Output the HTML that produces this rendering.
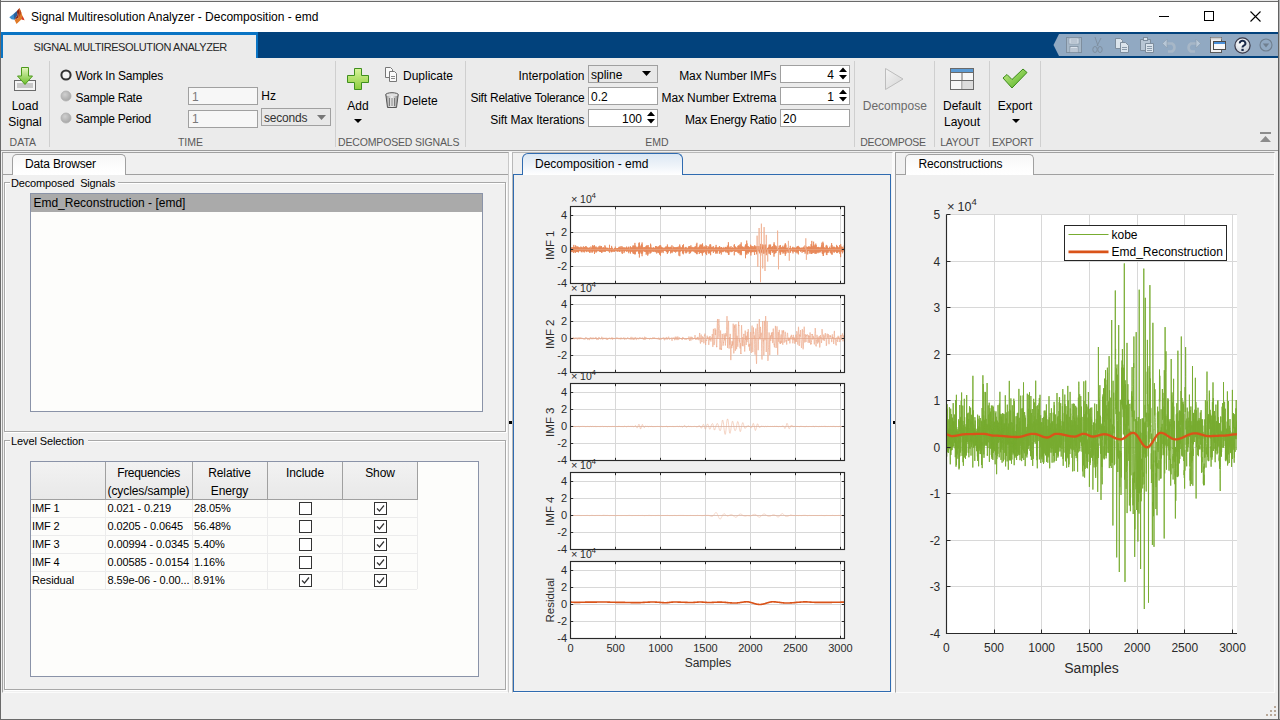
<!DOCTYPE html><html><head><meta charset="utf-8"><style>
html,body{margin:0;padding:0;}
body{width:1280px;height:720px;position:relative;overflow:hidden;background:#f0f0f0;font-family:"Liberation Sans",sans-serif;}
.t{position:absolute;white-space:pre;}
.r{position:absolute;box-sizing:border-box;}
svg.r{overflow:visible;}
</style></head><body>
<div class="r" style="left:0px;top:0px;width:1280px;height:32px;background:#fff;"></div>
<div class="t" style="left:31.00px;top:10.74px;font-size:12px;line-height:12px;color:#000;">Signal Multiresolution Analyzer - Decomposition - emd</div>
<svg class="r" style="left:0px;top:0px;" width="30" height="30" viewBox="0 0 30 30">
<path d="M9.3 17.2 L13.5 14 L16 15.5 L14.5 19.8 L11.5 19.2 Z" fill="#3d8fd0"/>
<path d="M13.5 14 L16.8 11 L17.5 15 L14.5 19.8 Z" fill="#2a5f9a"/>
<path d="M16.8 11 L19.5 8 L18.5 18 L14.5 19.8 L17.5 15 Z" fill="#8a2a1a"/>
<path d="M19.5 8 L22.5 16 L24.5 20.2 L21.5 19.2 L16.5 24 L14.5 19.8 L18.5 18 Z" fill="#e07a28"/>
<path d="M19.5 8 L21.5 13 L18.5 18 Z" fill="#c04a1a"/>
<path d="M22.5 16 L24.5 20.2 L21.5 19.2 Z" fill="#d83a2a"/>
</svg>
<div class="r" style="left:1159px;top:16px;width:10px;height:1px;background:#000;"></div>
<div class="r" style="left:1204px;top:11px;width:10px;height:10px;border:1px solid #000;"></div>
<svg class="r" style="left:1250px;top:11px;" width="11" height="11" viewBox="0 0 11 11"><path d="M0.5 0.5 L10.5 10.5 M10.5 0.5 L0.5 10.5" stroke="#000" stroke-width="1.1"/></svg>
<div class="r" style="left:0px;top:32px;width:1278px;height:26px;background:#02427c;"></div>
<div class="r" style="left:0px;top:32px;width:258px;height:26px;background:#0a74c4;"></div>
<div class="r" style="left:3px;top:35px;width:253px;height:23px;background:#ebebeb;"></div>
<div class="t" style="left:33.50px;top:41.69px;font-size:11px;line-height:11px;color:#262626;letter-spacing:-0.42px;">SIGNAL MULTIRESOLUTION ANALYZER</div>
<svg class="r" style="left:1053px;top:34px;" width="225" height="22" viewBox="0 0 225 22"><path d="M0.5 11 L6 0 L225 0 L225 22 L6 22 Z" fill="#91a9c2"/></svg>
<svg class="r" style="left:1066px;top:37px;opacity:0.95" width="16" height="16" viewBox="0 0 16 16"><rect x="0.5" y="0.5" width="15" height="15" fill="#a9b9c9" stroke="#7d8d9d"/><rect x="3" y="1" width="10" height="6" fill="#dfe7ef" stroke="#8d9dad" stroke-width="0.8"/><path d="M4.5 3 H11.5 M4.5 5 H11.5" stroke="#8a9aaa" stroke-width="0.8"/><rect x="4" y="9.5" width="8" height="6" fill="#dfe7ef" stroke="#7d8d9d" stroke-width="0.8"/><path d="M6 11 V15 M8 11 V15 M10 11 V15" stroke="#8a9aaa" stroke-width="0.8"/></svg>
<svg class="r" style="left:1092px;top:37px;" width="11" height="16" viewBox="0 0 11 16"><path d="M3 0 L6 9 M9 1 L5 9" stroke="#7d8d9d" stroke-width="0.9" fill="none"/><ellipse cx="3" cy="12.5" rx="2.2" ry="3" fill="none" stroke="#7d8d9d"/><ellipse cx="8" cy="12.5" rx="2.2" ry="3" fill="none" stroke="#7d8d9d"/></svg>
<svg class="r" style="left:1115px;top:38px;" width="15" height="15" viewBox="0 0 15 15"><path d="M0.5 0.5 H5.5 L7.5 2.5 V10.5 H0.5 Z" fill="#dbe4ec" stroke="#7d8d9d"/><path d="M5.5 4.5 H10.5 L13.5 7.5 V14.5 H5.5 Z" fill="#dbe4ec" stroke="#7d8d9d"/><path d="M7 9.5 H12 M7 11.5 H12" stroke="#8a9aaa"/></svg>
<svg class="r" style="left:1140px;top:37px;" width="15" height="16" viewBox="0 0 15 16"><path d="M0.5 2.5 H10.5 V13.5 H0.5 Z" fill="#b8c6d4" stroke="#7d8d9d"/><rect x="3.5" y="0.5" width="4" height="3" fill="#dbe4ec" stroke="#7d8d9d"/><path d="M5.5 6.5 H13.5 V15.5 H5.5 Z" fill="#dbe4ec" stroke="#7d8d9d"/><path d="M7 9.5 H12 M7 11.5 H12 M7 13.5 H12" stroke="#8a9aaa"/></svg>
<svg class="r" style="left:1162px;top:38px;" width="16" height="14" viewBox="0 0 16 14"><path d="M3 5.5 H10 A4.5 4.5 0 0 1 10 13.5 H6" fill="none" stroke="#a7b7c7" stroke-width="2.6"/><path d="M0.5 5.5 L5 1 V10 Z" fill="#b7c7d7" stroke="#8d9dad" stroke-width="0.6"/></svg>
<svg class="r" style="left:1185px;top:38px;" width="16" height="14" viewBox="0 0 16 14"><path d="M13 5.5 H6 A4.5 4.5 0 0 0 6 13.5 H10" fill="none" stroke="#a7b7c7" stroke-width="2.6"/><path d="M15.5 5.5 L11 1 V10 Z" fill="#b7c7d7" stroke="#8d9dad" stroke-width="0.6"/></svg>
<svg class="r" style="left:1210px;top:37px;" width="16" height="16" viewBox="0 0 16 16"><rect x="0.5" y="0.5" width="11" height="15" fill="#f2f2f2" stroke="#5a5a5a"/><rect x="0.5" y="0.5" width="11" height="2" fill="#cfcfcf"/><rect x="3.5" y="4.5" width="12" height="8" fill="#f8f8f8" stroke="#4a4a4a"/><rect x="4" y="5" width="11" height="2" fill="#4a90d9"/></svg>
<svg class="r" style="left:1234px;top:37px;" width="17" height="17" viewBox="0 0 17 17"><defs><radialGradient id="hq" cx="0.4" cy="0.35" r="0.7"><stop offset="0" stop-color="#ffffff"/><stop offset="1" stop-color="#c4ccd6"/></radialGradient></defs><circle cx="8.5" cy="8.5" r="7.6" fill="url(#hq)" stroke="#3a3a4a" stroke-width="1.2"/><path d="M5.8 6.4 A2.8 2.6 0 1 1 9.6 8.7 Q8.5 9.3 8.5 10.6" fill="none" stroke="#1a2a4a" stroke-width="2"/><rect x="7.4" y="11.8" width="2.3" height="2.2" fill="#1a2a4a"/></svg>
<svg class="r" style="left:1259px;top:38px;" width="14" height="14" viewBox="0 0 14 14"><circle cx="7" cy="7" r="6" fill="none" stroke="#6f7f8f" stroke-width="1.1"/><path d="M3.8 5.5 H10.2 L7 9.5 Z" fill="#6f7f8f"/></svg>
<div class="r" style="left:0px;top:58px;width:1278px;height:92px;background:#ebebeb;"></div>
<div class="r" style="left:0px;top:150px;width:1278px;height:1px;background:#9c9c9c;"></div>
<div class="r" style="left:49px;top:61px;width:1px;height:86px;background:#cfcfcf;"></div>
<div class="r" style="left:335px;top:61px;width:1px;height:86px;background:#cfcfcf;"></div>
<div class="r" style="left:465px;top:61px;width:1px;height:86px;background:#cfcfcf;"></div>
<div class="r" style="left:854px;top:61px;width:1px;height:86px;background:#cfcfcf;"></div>
<div class="r" style="left:934px;top:61px;width:1px;height:86px;background:#cfcfcf;"></div>
<div class="r" style="left:989px;top:61px;width:1px;height:86px;background:#cfcfcf;"></div>
<div class="r" style="left:1040px;top:61px;width:1px;height:86px;background:#cfcfcf;"></div>
<div class="t" style="left:9.60px;top:136.91px;font-size:10.5px;line-height:10.5px;color:#5a5a5a;">DATA</div>
<div class="t" style="left:190.50px;top:136.91px;font-size:10.5px;line-height:10.5px;color:#5a5a5a;transform:translateX(-50%);">TIME</div>
<div class="t" style="left:398.70px;top:136.91px;font-size:10.5px;line-height:10.5px;color:#5a5a5a;transform:translateX(-50%);letter-spacing:-0.17px;">DECOMPOSED SIGNALS</div>
<div class="t" style="left:657.00px;top:136.91px;font-size:10.5px;line-height:10.5px;color:#5a5a5a;transform:translateX(-50%);">EMD</div>
<div class="t" style="left:893.00px;top:136.91px;font-size:10.5px;line-height:10.5px;color:#5a5a5a;transform:translateX(-50%);letter-spacing:-0.3px;">DECOMPOSE</div>
<div class="t" style="left:960.00px;top:136.91px;font-size:10.5px;line-height:10.5px;color:#5a5a5a;transform:translateX(-50%);letter-spacing:-0.3px;">LAYOUT</div>
<div class="t" style="left:1012.50px;top:136.91px;font-size:10.5px;line-height:10.5px;color:#5a5a5a;transform:translateX(-50%);letter-spacing:-0.3px;">EXPORT</div>
<svg class="r" style="left:13px;top:66px;" width="24" height="26" viewBox="0 0 24 26">
<defs><linearGradient id="ga" x1="0" y1="0" x2="0" y2="1"><stop offset="0" stop-color="#e6f6c0"/><stop offset="1" stop-color="#6cbf2a"/></linearGradient></defs>
<rect x="1.5" y="14.5" width="21" height="10" fill="#f4f4f4" stroke="#6a6a6a"/>
<rect x="4" y="17" width="16" height="5" fill="#c8c8c8"/>
<path d="M8.5 1.5 L15.5 1.5 L15.5 10 L19.5 10 L12 18.5 L4.5 10 L8.5 10 Z" fill="url(#ga)" stroke="#4c9a1a"/>
</svg>
<div class="t" style="left:25.00px;top:100.44px;font-size:12px;line-height:12px;color:#000;transform:translateX(-50%);">Load</div>
<div class="t" style="left:25.00px;top:116.04px;font-size:12px;line-height:12px;color:#000;transform:translateX(-50%);">Signal</div>
<svg class="r" style="left:60px;top:69px;" width="12" height="12" viewBox="0 0 12 12"><circle cx="6" cy="6" r="4.6" fill="#f4f4f4" stroke="#333" stroke-width="2"/></svg>
<div class="t" style="left:75.50px;top:70.04px;font-size:12px;line-height:12px;color:#000;letter-spacing:-0.25px;">Work In Samples</div>
<svg class="r" style="left:60px;top:90px;" width="12" height="12" viewBox="0 0 12 12"><defs><radialGradient id="rg" cx="0.4" cy="0.35" r="0.7"><stop offset="0" stop-color="#d0d0d0"/><stop offset="1" stop-color="#a4a4a4"/></radialGradient></defs><circle cx="6" cy="6" r="5" fill="url(#rg)" stroke="#b0b0b0" stroke-width="0.8"/></svg>
<div class="t" style="left:75.50px;top:91.64px;font-size:12px;line-height:12px;color:#000;letter-spacing:-0.25px;">Sample Rate</div>
<svg class="r" style="left:60px;top:112px;" width="12" height="12" viewBox="0 0 12 12"><defs><radialGradient id="rg" cx="0.4" cy="0.35" r="0.7"><stop offset="0" stop-color="#d0d0d0"/><stop offset="1" stop-color="#a4a4a4"/></radialGradient></defs><circle cx="6" cy="6" r="5" fill="url(#rg)" stroke="#b0b0b0" stroke-width="0.8"/></svg>
<div class="t" style="left:75.50px;top:113.44px;font-size:12px;line-height:12px;color:#000;letter-spacing:-0.25px;">Sample Period</div>
<div class="r" style="left:188px;top:87px;width:70px;height:18px;background:#f7f7f7;border:1px solid #a0a0a0;"></div>
<div class="r" style="left:188px;top:110px;width:70px;height:18px;background:#f7f7f7;border:1px solid #a0a0a0;"></div>
<div class="t" style="left:192.00px;top:90.64px;font-size:12px;line-height:12px;color:#7a7a7a;">1</div>
<div class="t" style="left:192.00px;top:113.44px;font-size:12px;line-height:12px;color:#7a7a7a;">1</div>
<div class="t" style="left:261.30px;top:89.54px;font-size:12px;line-height:12px;color:#000;">Hz</div>
<div class="r" style="left:261px;top:108px;width:70px;height:18px;background:#e8e8e8;border:1px solid #a0a0a0;"></div>
<div class="t" style="left:264.00px;top:112.04px;font-size:12px;line-height:12px;color:#333;letter-spacing:-0.2px;">seconds</div>
<svg class="r" style="left:317px;top:115px;" width="9" height="5" viewBox="0 0 9 5"><path d="M0 0 L9 0 L4.5 5 Z" fill="#777"/></svg>
<svg class="r" style="left:346px;top:67px;" width="24" height="24" viewBox="0 0 24 24">
<defs><linearGradient id="gp" x1="0" y1="0" x2="0" y2="1"><stop offset="0" stop-color="#d8f49a"/><stop offset="1" stop-color="#8ccd3c"/></linearGradient></defs>
<path d="M8.5 1.5 H15.5 V8.5 H22.5 V15.5 H15.5 V22.5 H8.5 V15.5 H1.5 V8.5 H8.5 Z" fill="url(#gp)" stroke="#3f8f1e"/>
</svg>
<div class="t" style="left:358.00px;top:100.14px;font-size:12px;line-height:12px;color:#000;transform:translateX(-50%);">Add</div>
<svg class="r" style="left:354px;top:119px;" width="8" height="4" viewBox="0 0 8 4"><path d="M0 0 L8 0 L4 4 Z" fill="#000"/></svg>
<svg class="r" style="left:384px;top:67px;" width="14" height="16" viewBox="0 0 14 16">
<path d="M1.5 0.5 H6.5 L8.5 2.5 V10.5 H1.5 Z" fill="#fafafa" stroke="#777"/>
<path d="M5.5 4.5 H10.5 L12.5 6.5 V14.5 H5.5 Z" fill="#fafafa" stroke="#777"/>
<path d="M7 9.5 H11 M7 11.5 H11" stroke="#888"/>
</svg>
<div class="t" style="left:403.00px;top:70.04px;font-size:12px;line-height:12px;color:#000;">Duplicate</div>
<svg class="r" style="left:384px;top:92px;" width="16" height="17" viewBox="0 0 16 17">
<defs><linearGradient id="gt" x1="0" y1="0" x2="1" y2="0"><stop offset="0" stop-color="#9a9a9a"/><stop offset="0.5" stop-color="#f2f2f2"/><stop offset="1" stop-color="#8a8a8a"/></linearGradient></defs>
<ellipse cx="8" cy="3" rx="6.5" ry="2.3" fill="#e0e0e0" stroke="#555"/>
<path d="M2 4 L3.5 15.5 H12.5 L14 4" fill="url(#gt)" stroke="#555"/>
<path d="M5.5 6 V14 M8 6 V14 M10.5 6 V14" stroke="#666" stroke-width="0.8"/>
</svg>
<div class="t" style="left:403.00px;top:95.04px;font-size:12px;line-height:12px;color:#000;">Delete</div>
<div class="t" style="left:584.50px;top:70.14px;font-size:12px;line-height:12px;color:#000;transform:translateX(-100%);">Interpolation</div>
<div class="t" style="left:584.50px;top:91.74px;font-size:12px;line-height:12px;color:#000;transform:translateX(-100%);letter-spacing:-0.22px;">Sift Relative Tolerance</div>
<div class="t" style="left:584.50px;top:113.59px;font-size:12px;line-height:12px;color:#000;transform:translateX(-100%);letter-spacing:-0.1px;">Sift Max Iterations</div>
<div class="r" style="left:588px;top:65px;width:70px;height:18px;background:#e8e8e8;border:1px solid #a0a0a0;"></div>
<div class="t" style="left:591.00px;top:69.24px;font-size:12px;line-height:12px;color:#000;">spline</div>
<svg class="r" style="left:642px;top:71px;" width="9" height="5" viewBox="0 0 9 5"><path d="M0 0 L9 0 L4.5 5 Z" fill="#000"/></svg>
<div class="r" style="left:588px;top:87px;width:70px;height:18px;background:#fff;border:1px solid #a0a0a0;"></div>
<div class="t" style="left:591.00px;top:91.24px;font-size:12px;line-height:12px;color:#000;">0.2</div>
<div class="r" style="left:588px;top:109px;width:70px;height:18px;background:#fff;border:1px solid #a0a0a0;"></div>
<div class="t" style="left:642.00px;top:113.04px;font-size:12px;line-height:12px;color:#000;transform:translateX(-100%);">100</div>
<svg class="r" style="left:647px;top:111px;" width="8" height="13" viewBox="0 0 8 13"><path d="M0 5 L4 0.5 L8 5 Z M0 8 L4 12.5 L8 8 Z" fill="#000"/></svg>
<div class="t" style="left:776.40px;top:70.14px;font-size:12px;line-height:12px;color:#000;transform:translateX(-100%);letter-spacing:-0.1px;">Max Number IMFs</div>
<div class="t" style="left:776.40px;top:91.74px;font-size:12px;line-height:12px;color:#000;transform:translateX(-100%);letter-spacing:-0.1px;">Max Number Extrema</div>
<div class="t" style="left:776.40px;top:113.59px;font-size:12px;line-height:12px;color:#000;transform:translateX(-100%);letter-spacing:-0.25px;">Max Energy Ratio</div>
<div class="r" style="left:780px;top:65px;width:70px;height:18px;background:#fff;border:1px solid #a0a0a0;"></div>
<div class="t" style="left:834.00px;top:69.24px;font-size:12px;line-height:12px;color:#000;transform:translateX(-100%);">4</div>
<svg class="r" style="left:839px;top:67px;" width="8" height="13" viewBox="0 0 8 13"><path d="M0 5 L4 0.5 L8 5 Z M0 8 L4 12.5 L8 8 Z" fill="#000"/></svg>
<div class="r" style="left:780px;top:87px;width:70px;height:18px;background:#fff;border:1px solid #a0a0a0;"></div>
<div class="t" style="left:834.00px;top:91.24px;font-size:12px;line-height:12px;color:#000;transform:translateX(-100%);">1</div>
<svg class="r" style="left:839px;top:89px;" width="8" height="13" viewBox="0 0 8 13"><path d="M0 5 L4 0.5 L8 5 Z M0 8 L4 12.5 L8 8 Z" fill="#000"/></svg>
<div class="r" style="left:780px;top:109px;width:70px;height:18px;background:#fff;border:1px solid #a0a0a0;"></div>
<div class="t" style="left:783.00px;top:113.04px;font-size:12px;line-height:12px;color:#000;">20</div>
<svg class="r" style="left:884px;top:67px;" width="21" height="24" viewBox="0 0 21 24">
<defs><linearGradient id="gd" x1="0" y1="0" x2="1" y2="1"><stop offset="0" stop-color="#f4f4f4"/><stop offset="1" stop-color="#d4d4d4"/></linearGradient></defs>
<path d="M1.5 1.5 L19 12 L1.5 22.5 Z" fill="url(#gd)" stroke="#bdbdbd" stroke-linejoin="round"/>
</svg>
<div class="t" style="left:894.80px;top:99.84px;font-size:12px;line-height:12px;color:#6a6a6a;transform:translateX(-50%);">Decompose</div>
<svg class="r" style="left:949px;top:67px;" width="26" height="24" viewBox="0 0 26 24">
<rect x="1.5" y="1.5" width="23" height="21" fill="#f7f7f7" stroke="#6a6a6a"/>
<rect x="2" y="2" width="22" height="3" fill="#5b9bd5"/>
<path d="M2 5.5 H24 M13 5.5 V22 M2 13.5 H24" stroke="#6a6a6a"/>
<rect x="13.5" y="14" width="10.5" height="8" fill="#dcdcdc"/>
</svg>
<div class="t" style="left:962.00px;top:99.84px;font-size:12px;line-height:12px;color:#000;transform:translateX(-50%);">Default</div>
<div class="t" style="left:962.00px;top:116.04px;font-size:12px;line-height:12px;color:#000;transform:translateX(-50%);">Layout</div>
<svg class="r" style="left:1002px;top:68px;" width="26" height="22" viewBox="0 0 26 22">
<defs><linearGradient id="gc" x1="0" y1="0" x2="1" y2="1"><stop offset="0" stop-color="#c8ec8a"/><stop offset="1" stop-color="#4caf1e"/></linearGradient></defs>
<path d="M1 10 L5 6.5 L10 11.5 L21 1 L25 4.5 L10 20 Z" fill="url(#gc)" stroke="#3a8a18" stroke-linejoin="round"/>
</svg>
<div class="t" style="left:1015.00px;top:99.84px;font-size:12px;line-height:12px;color:#000;transform:translateX(-50%);">Export</div>
<svg class="r" style="left:1012px;top:119px;" width="8" height="4" viewBox="0 0 8 4"><path d="M0 0 L8 0 L4 4 Z" fill="#000"/></svg>
<svg class="r" style="left:1260px;top:132px;" width="11" height="11" viewBox="0 0 11 11"><rect x="0" y="0" width="11" height="2" fill="#8c8c8c"/><path d="M0 10 L5.5 4 L11 10 Z" fill="#8c8c8c"/></svg>
<div class="r" style="left:2px;top:152px;width:507px;height:541px;background:#f0f0f0;border:1px solid #a0a0a0;border-right-color:#c8c8c8;border-bottom-color:#fbfbfb;"></div>
<div class="r" style="left:3px;top:174px;width:505px;height:1px;background:#a0a0a0;"></div>
<div class="r" style="left:12px;top:154px;width:114px;height:21px;border:1px solid #a0a0a0;border-bottom:none;border-radius:5px 5px 0 0;background:linear-gradient(#f7f7f7,#fdfdfd 60%,#fff);"></div>
<div class="t" style="left:25.00px;top:158.44px;font-size:12px;line-height:12px;color:#000;letter-spacing:-0.15px;">Data Browser</div>
<div class="r" style="left:4px;top:182px;width:502px;height:250px;border:1px solid #a8a8a8;border-right-color:#a8a8a8;box-shadow:inset 1px 1px 0 #fff, 1px 1px 0 #fff;"></div>
<div class="r" style="left:10px;top:176px;width:108px;height:12px;background:#f0f0f0;"></div>
<div class="t" style="left:11.00px;top:177.89px;font-size:11px;line-height:11px;color:#000;letter-spacing:-0.15px;">Decomposed  Signals</div>
<div class="r" style="left:30px;top:193px;width:453px;height:219px;background:#fdfdfb;border:1px solid #8a93a8;"></div>
<div class="r" style="left:31px;top:194px;width:451px;height:18px;background:#aaaaaa;"></div>
<div class="t" style="left:33.40px;top:197.34px;font-size:12px;line-height:12px;color:#000;">Emd_Reconstruction - [emd]</div>
<div class="r" style="left:4px;top:440px;width:502px;height:250px;border:1px solid #a8a8a8;box-shadow:inset 1px 1px 0 #fff, 1px 1px 0 #fff;"></div>
<div class="r" style="left:10px;top:434px;width:78px;height:12px;background:#f0f0f0;"></div>
<div class="t" style="left:11.00px;top:436.29px;font-size:11px;line-height:11px;color:#000;letter-spacing:-0.1px;">Level Selection</div>
<div class="r" style="left:30px;top:461px;width:449px;height:216px;background:#fdfdfb;border:1px solid #8a93a8;"></div>
<div class="r" style="left:31px;top:462px;width:386px;height:38px;background:linear-gradient(#f2f2f2,#e8e8e8);"></div>
<div class="r" style="left:105px;top:462px;width:1px;height:38px;background:#a0a0a0;"></div>
<div class="r" style="left:192px;top:462px;width:1px;height:38px;background:#a0a0a0;"></div>
<div class="r" style="left:267px;top:462px;width:1px;height:38px;background:#a0a0a0;"></div>
<div class="r" style="left:342px;top:462px;width:1px;height:38px;background:#a0a0a0;"></div>
<div class="r" style="left:417px;top:462px;width:1px;height:38px;background:#a0a0a0;"></div>
<div class="r" style="left:31px;top:499px;width:386px;height:1px;background:#a0a0a0;"></div>
<div class="t" style="left:148.50px;top:466.84px;font-size:12px;line-height:12px;color:#000;transform:translateX(-50%);letter-spacing:-0.3px;">Frequencies</div>
<div class="t" style="left:148.50px;top:484.84px;font-size:12px;line-height:12px;color:#000;transform:translateX(-50%);letter-spacing:-0.1px;">(cycles/sample)</div>
<div class="t" style="left:229.50px;top:466.64px;font-size:12px;line-height:12px;color:#000;transform:translateX(-50%);letter-spacing:-0.1px;">Relative</div>
<div class="t" style="left:229.50px;top:484.74px;font-size:12px;line-height:12px;color:#000;transform:translateX(-50%);letter-spacing:-0.1px;">Energy</div>
<div class="t" style="left:305.00px;top:466.64px;font-size:12px;line-height:12px;color:#000;transform:translateX(-50%);letter-spacing:-0.1px;">Include</div>
<div class="t" style="left:380.00px;top:466.64px;font-size:12px;line-height:12px;color:#000;transform:translateX(-50%);letter-spacing:-0.1px;">Show</div>
<div class="r" style="left:31px;top:517px;width:386px;height:1px;background:#ececec;"></div>
<div class="t" style="left:32.00px;top:502.99px;font-size:11px;line-height:11px;color:#000;letter-spacing:-0.1px;">IMF 1</div>
<div class="t" style="left:107.50px;top:502.99px;font-size:11px;line-height:11px;color:#000;letter-spacing:-0.1px;">0.021 - 0.219</div>
<div class="t" style="left:194.00px;top:502.99px;font-size:11px;line-height:11px;color:#000;letter-spacing:-0.1px;">28.05%</div>
<svg class="r" style="left:299px;top:502px;" width="13" height="13" viewBox="0 0 13 13"><rect x="0.5" y="0.5" width="12" height="12" fill="#fff" stroke="#333"/></svg>
<svg class="r" style="left:374px;top:502px;" width="13" height="13" viewBox="0 0 13 13"><rect x="0.5" y="0.5" width="12" height="12" fill="#fff" stroke="#333"/><path d="M3 6.5 L5.5 9 L10 3.5" fill="none" stroke="#333" stroke-width="1.2"/></svg>
<div class="r" style="left:31px;top:535px;width:386px;height:1px;background:#ececec;"></div>
<div class="t" style="left:32.00px;top:520.99px;font-size:11px;line-height:11px;color:#000;letter-spacing:-0.1px;">IMF 2</div>
<div class="t" style="left:107.50px;top:520.99px;font-size:11px;line-height:11px;color:#000;letter-spacing:-0.1px;">0.0205 - 0.0645</div>
<div class="t" style="left:194.00px;top:520.99px;font-size:11px;line-height:11px;color:#000;letter-spacing:-0.1px;">56.48%</div>
<svg class="r" style="left:299px;top:520px;" width="13" height="13" viewBox="0 0 13 13"><rect x="0.5" y="0.5" width="12" height="12" fill="#fff" stroke="#333"/></svg>
<svg class="r" style="left:374px;top:520px;" width="13" height="13" viewBox="0 0 13 13"><rect x="0.5" y="0.5" width="12" height="12" fill="#fff" stroke="#333"/><path d="M3 6.5 L5.5 9 L10 3.5" fill="none" stroke="#333" stroke-width="1.2"/></svg>
<div class="r" style="left:31px;top:553px;width:386px;height:1px;background:#ececec;"></div>
<div class="t" style="left:32.00px;top:538.99px;font-size:11px;line-height:11px;color:#000;letter-spacing:-0.1px;">IMF 3</div>
<div class="t" style="left:107.50px;top:538.99px;font-size:11px;line-height:11px;color:#000;letter-spacing:-0.1px;">0.00994 - 0.0345</div>
<div class="t" style="left:194.00px;top:538.99px;font-size:11px;line-height:11px;color:#000;letter-spacing:-0.1px;">5.40%</div>
<svg class="r" style="left:299px;top:538px;" width="13" height="13" viewBox="0 0 13 13"><rect x="0.5" y="0.5" width="12" height="12" fill="#fff" stroke="#333"/></svg>
<svg class="r" style="left:374px;top:538px;" width="13" height="13" viewBox="0 0 13 13"><rect x="0.5" y="0.5" width="12" height="12" fill="#fff" stroke="#333"/><path d="M3 6.5 L5.5 9 L10 3.5" fill="none" stroke="#333" stroke-width="1.2"/></svg>
<div class="r" style="left:31px;top:571px;width:386px;height:1px;background:#ececec;"></div>
<div class="t" style="left:32.00px;top:556.99px;font-size:11px;line-height:11px;color:#000;letter-spacing:-0.1px;">IMF 4</div>
<div class="t" style="left:107.50px;top:556.99px;font-size:11px;line-height:11px;color:#000;letter-spacing:-0.1px;">0.00585 - 0.0154</div>
<div class="t" style="left:194.00px;top:556.99px;font-size:11px;line-height:11px;color:#000;letter-spacing:-0.1px;">1.16%</div>
<svg class="r" style="left:299px;top:556px;" width="13" height="13" viewBox="0 0 13 13"><rect x="0.5" y="0.5" width="12" height="12" fill="#fff" stroke="#333"/></svg>
<svg class="r" style="left:374px;top:556px;" width="13" height="13" viewBox="0 0 13 13"><rect x="0.5" y="0.5" width="12" height="12" fill="#fff" stroke="#333"/><path d="M3 6.5 L5.5 9 L10 3.5" fill="none" stroke="#333" stroke-width="1.2"/></svg>
<div class="r" style="left:31px;top:589px;width:386px;height:1px;background:#ececec;"></div>
<div class="t" style="left:32.00px;top:574.99px;font-size:11px;line-height:11px;color:#000;letter-spacing:-0.1px;">Residual</div>
<div class="t" style="left:107.50px;top:574.99px;font-size:11px;line-height:11px;color:#000;letter-spacing:-0.1px;">8.59e-06 - 0.00...</div>
<div class="t" style="left:194.00px;top:574.99px;font-size:11px;line-height:11px;color:#000;letter-spacing:-0.1px;">8.91%</div>
<svg class="r" style="left:299px;top:574px;" width="13" height="13" viewBox="0 0 13 13"><rect x="0.5" y="0.5" width="12" height="12" fill="#fff" stroke="#333"/><path d="M3 6.5 L5.5 9 L10 3.5" fill="none" stroke="#333" stroke-width="1.2"/></svg>
<svg class="r" style="left:374px;top:574px;" width="13" height="13" viewBox="0 0 13 13"><rect x="0.5" y="0.5" width="12" height="12" fill="#fff" stroke="#333"/><path d="M3 6.5 L5.5 9 L10 3.5" fill="none" stroke="#333" stroke-width="1.2"/></svg>
<div class="r" style="left:105px;top:500px;width:1px;height:89px;background:#ececec;"></div>
<div class="r" style="left:192px;top:500px;width:1px;height:89px;background:#ececec;"></div>
<div class="r" style="left:267px;top:500px;width:1px;height:89px;background:#ececec;"></div>
<div class="r" style="left:342px;top:500px;width:1px;height:89px;background:#ececec;"></div>
<div class="r" style="left:417px;top:500px;width:1px;height:89px;background:#ececec;"></div>
<div class="r" style="left:509px;top:152px;width:3px;height:541px;background:#fafafa;"></div>
<div class="r" style="left:893px;top:152px;width:2px;height:541px;background:#fafafa;"></div>
<div class="r" style="left:509px;top:421px;width:3px;height:3px;background:#000;"></div>
<div class="r" style="left:892px;top:421px;width:3px;height:3px;background:#000;"></div>
<div class="r" style="left:512px;top:152px;width:381px;height:541px;background:#f0f0f0;border:1px solid #b8b8b8;border-bottom-color:#fbfbfb;border-right-color:#fbfbfb;"></div>
<div class="r" style="left:513px;top:174px;width:378px;height:518px;border:1.5px solid #2f6bb0;"></div>
<div class="r" style="left:522px;top:153px;width:161px;height:22px;border:1.5px solid #2f6bb0;border-bottom:none;border-radius:6px 6px 0 0;background:linear-gradient(#dce8f4,#eef3f9 55%,#fff);"></div>
<div class="t" style="left:535.00px;top:158.44px;font-size:12px;line-height:12px;color:#000;">Decomposition - emd</div>
<div class="r" style="left:895px;top:152px;width:380px;height:541px;background:#f0f0f0;border:1px solid #a0a0a0;border-right-color:#fbfbfb;border-bottom-color:#fbfbfb;"></div>
<div class="r" style="left:896px;top:174px;width:378px;height:1px;background:#a0a0a0;"></div>
<div class="r" style="left:905px;top:154px;width:129px;height:21px;border:1px solid #a0a0a0;border-bottom:none;border-radius:5px 5px 0 0;background:linear-gradient(#f7f7f7,#fdfdfd 60%,#fff);"></div>
<div class="t" style="left:918.50px;top:158.44px;font-size:12px;line-height:12px;color:#000;letter-spacing:-0.15px;">Reconstructions</div>
<svg class="r" style="left:0;top:0" width="1280" height="720" viewBox="0 0 1280 720" font-family="Liberation Sans, sans-serif"><rect x="570.5" y="206.5" width="274.0" height="77.0" fill="#fff"/><path d="M570.5 206.5 V283.5" stroke="#d8d8d8" stroke-width="1"/><path d="M615.5 206.5 V283.5" stroke="#d8d8d8" stroke-width="1"/><path d="M660.5 206.5 V283.5" stroke="#d8d8d8" stroke-width="1"/><path d="M705.5 206.5 V283.5" stroke="#d8d8d8" stroke-width="1"/><path d="M750.5 206.5 V283.5" stroke="#d8d8d8" stroke-width="1"/><path d="M795.5 206.5 V283.5" stroke="#d8d8d8" stroke-width="1"/><path d="M840.5 206.5 V283.5" stroke="#d8d8d8" stroke-width="1"/><path d="M570.5 215.5 H844.5" stroke="#d8d8d8" stroke-width="1"/><path d="M570.5 232.5 H844.5" stroke="#d8d8d8" stroke-width="1"/><path d="M570.5 249.5 H844.5" stroke="#d8d8d8" stroke-width="1"/><path d="M570.5 266.5 H844.5" stroke="#d8d8d8" stroke-width="1"/><path d="M570.5 283.5 H844.5" stroke="#d8d8d8" stroke-width="1"/><svg x="570.5" y="206.5" width="274.0" height="77.0" viewBox="570.5 206.5 274.0 77.0" overflow="hidden"><path d="M570.6 247.8L570.7 251.1 570.8 249.0 570.9 249.9 571.0 249.1 571.0 250.3 571.1 248.0 571.2 250.3 571.3 250.5 571.4 252.0 571.5 249.2 571.6 247.2 571.7 251.8 571.8 248.0 571.9 250.5 571.9 248.7 572.0 252.2 572.1 249.8 572.2 250.1 572.3 248.8 572.4 249.2 572.5 249.5 572.6 249.7 572.7 250.9 572.8 247.0 572.8 251.6 572.9 248.5 573.0 249.8 573.1 250.5 573.2 249.7 573.3 249.9 573.4 251.1 573.5 247.7 573.6 250.9 573.7 247.5 573.7 253.0 573.8 244.9 573.9 252.4 574.0 248.9 574.1 250.3 574.2 250.4 574.3 250.8 574.4 247.1 574.5 251.7 574.6 247.6 574.6 249.4 574.7 250.6 574.8 248.8 574.9 250.0 575.0 248.3 575.1 250.2 575.2 249.1 575.3 248.9 575.4 250.3 575.5 246.8 575.5 252.9 575.6 245.3 575.7 249.7 575.8 251.8 575.9 246.2 576.0 251.4 576.1 248.1 576.2 251.7 576.3 248.2 576.4 251.4 576.4 248.6 576.5 247.6 576.6 252.0 576.7 251.2 576.8 249.0 576.9 251.1 577.0 246.5 577.1 252.1 577.2 250.0 577.3 246.8 577.3 251.6 577.4 248.0 577.5 251.0 577.6 246.8 577.7 251.9 577.8 251.4 577.9 248.7 578.0 250.7 578.1 248.9 578.2 248.5 578.2 251.6 578.3 248.8 578.4 246.8 578.5 252.4 578.6 248.8 578.7 249.2 578.8 251.5 578.9 247.2 579.0 249.8 579.1 251.1 579.1 247.1 579.2 250.9 579.3 248.2 579.4 251.0 579.5 249.7 579.6 250.5 579.7 248.0 579.8 250.5 579.9 249.3 580.0 250.5 580.0 249.8 580.1 249.4 580.2 248.8 580.3 249.8 580.4 250.5 580.5 248.2 580.6 248.6 580.7 250.6 580.8 246.6 580.9 250.9 580.9 248.2 581.0 250.7 581.1 247.5 581.2 252.1 581.3 247.5 581.4 250.7 581.5 251.6 581.6 248.9 581.7 248.2 581.8 250.2 581.8 248.2 581.9 250.4 582.0 252.3 582.1 246.9 582.2 251.3 582.3 249.1 582.4 249.5 582.5 250.2 582.6 249.6 582.7 247.9 582.7 250.5 582.8 249.8 582.9 249.3 583.0 248.9 583.1 250.0 583.2 249.2 583.3 250.9 583.4 248.7 583.5 251.1 583.6 251.0 583.6 246.3 583.7 252.1 583.8 248.9 583.9 250.2 584.0 248.4 584.1 248.4 584.2 250.6 584.3 247.6 584.4 252.4 584.5 247.2 584.5 250.1 584.6 247.7 584.7 250.7 584.8 250.0 584.9 248.8 585.0 250.4 585.1 247.4 585.2 250.5 585.3 249.1 585.4 249.3 585.4 248.8 585.5 250.8 585.6 249.7 585.7 251.0 585.8 246.0 585.9 251.1 586.0 248.5 586.1 249.8 586.2 247.8 586.3 252.1 586.3 246.6 586.4 251.5 586.5 248.8 586.6 250.5 586.7 248.5 586.8 250.2 586.9 248.7 587.0 250.9 587.1 250.6 587.2 247.3 587.2 249.3 587.3 249.4 587.4 249.7 587.5 249.0 587.6 251.4 587.7 248.2 587.8 249.0 587.9 250.1 588.0 250.0 588.1 247.8 588.1 251.2 588.2 247.8 588.3 251.6 588.4 248.8 588.5 249.3 588.6 249.7 588.7 248.9 588.8 250.0 588.9 249.5 589.0 248.8 589.0 249.2 589.1 251.6 589.2 248.0 589.3 250.4 589.4 249.1 589.5 248.0 589.6 252.5 589.7 247.3 589.8 252.8 589.9 248.5 589.9 249.9 590.0 249.8 590.1 249.7 590.2 249.8 590.3 249.6 590.4 249.6 590.5 251.1 590.6 249.4 590.7 249.5 590.8 249.0 590.8 248.7 590.9 246.5 591.0 252.4 591.1 249.2 591.2 248.6 591.3 249.5 591.4 249.6 591.5 250.5 591.6 248.8 591.7 249.9 591.7 250.5 591.8 249.4 591.9 248.2 592.0 252.4 592.1 247.2 592.2 250.9 592.3 247.8 592.4 249.9 592.5 250.8 592.6 246.6 592.6 252.4 592.7 245.1 592.8 250.0 592.9 251.0 593.0 246.3 593.1 251.4 593.2 250.6 593.3 246.4 593.4 251.0 593.5 248.2 593.5 249.0 593.6 248.6 593.7 249.0 593.8 250.4 593.9 248.7 594.0 249.3 594.1 250.2 594.2 249.3 594.3 245.9 594.4 252.1 594.4 245.1 594.5 254.0 594.6 247.0 594.7 250.8 594.8 249.9 594.9 249.2 595.0 249.8 595.1 250.0 595.2 246.7 595.3 251.1 595.3 250.0 595.4 249.2 595.5 249.0 595.6 249.6 595.7 250.1 595.8 247.8 595.9 252.3 596.0 248.0 596.1 247.6 596.2 252.4 596.2 246.6 596.3 249.8 596.4 250.3 596.5 249.3 596.6 250.3 596.7 251.2 596.8 249.2 596.9 249.1 597.0 250.3 597.1 248.9 597.1 249.9 597.2 249.0 597.3 251.3 597.4 248.5 597.5 250.1 597.6 249.6 597.7 249.9 597.8 250.7 597.9 247.5 598.0 250.1 598.0 247.3 598.1 250.7 598.2 248.2 598.3 250.0 598.4 249.9 598.5 248.6 598.6 251.1 598.7 248.0 598.8 250.4 598.9 250.5 598.9 246.3 599.0 250.3 599.1 249.2 599.2 248.1 599.3 248.1 599.4 251.5 599.5 250.6 599.6 249.5 599.7 247.7 599.8 250.4 599.8 251.5 599.9 245.7 600.0 251.4 600.1 246.8 600.2 249.8 600.3 251.2 600.4 247.6 600.5 251.9 600.6 249.5 600.7 249.2 600.7 249.1 600.8 248.4 600.9 252.0 601.0 246.1 601.1 251.5 601.2 249.4 601.3 247.5 601.4 251.9 601.5 246.0 601.6 252.4 601.6 249.6 601.7 247.8 601.8 253.0 601.9 248.5 602.0 249.3 602.1 250.0 602.2 249.4 602.3 251.7 602.4 249.1 602.5 248.6 602.5 249.9 602.6 250.6 602.7 248.2 602.8 250.0 602.9 248.5 603.0 251.0 603.1 247.2 603.2 251.4 603.3 247.4 603.4 249.9 603.4 250.9 603.5 248.2 603.6 249.8 603.7 248.5 603.8 251.7 603.9 248.3 604.0 249.0 604.1 249.7 604.2 250.3 604.3 249.4 604.3 248.6 604.4 251.3 604.5 248.1 604.6 249.3 604.7 250.0 604.8 251.5 604.9 245.3 605.0 250.6 605.1 248.1 605.2 249.3 605.2 251.6 605.3 246.5 605.4 251.4 605.5 248.0 605.6 250.3 605.7 249.6 605.8 249.4 605.9 247.5 606.0 251.1 606.1 249.1 606.1 251.0 606.2 247.8 606.3 250.5 606.4 248.9 606.5 248.3 606.6 249.8 606.7 249.6 606.8 249.2 606.9 249.7 607.0 248.9 607.0 249.4 607.1 249.7 607.2 250.1 607.3 248.0 607.4 249.7 607.5 250.8 607.6 247.9 607.7 251.0 607.8 250.9 607.9 247.8 607.9 249.6 608.0 250.4 608.1 249.1 608.2 248.7 608.3 251.5 608.4 248.8 608.5 249.6 608.6 248.9 608.7 249.2 608.8 250.7 608.8 249.0 608.9 249.4 609.0 250.1 609.1 249.9 609.2 250.1 609.3 248.0 609.4 251.0 609.5 244.8 609.6 252.7 609.7 249.7 609.7 248.4 609.8 250.0 609.9 249.0 610.0 249.2 610.1 249.3 610.2 249.9 610.3 248.2 610.4 248.1 610.5 251.4 610.6 248.8 610.6 249.0 610.7 249.2 610.8 249.3 610.9 248.6 611.0 250.3 611.1 249.3 611.2 248.8 611.3 249.6 611.4 248.4 611.5 249.2 611.5 252.1 611.6 245.9 611.7 252.2 611.8 250.4 611.9 247.4 612.0 251.5 612.1 249.0 612.2 250.9 612.3 249.8 612.4 249.1 612.4 251.5 612.5 248.1 612.6 249.9 612.7 249.7 612.8 249.0 612.9 250.0 613.0 250.2 613.1 249.5 613.2 249.1 613.3 249.1 613.3 249.9 613.4 249.7 613.5 248.9 613.6 251.7 613.7 248.9 613.8 249.7 613.9 249.6 614.0 249.6 614.1 249.6 614.2 250.8 614.2 249.0 614.3 249.3 614.4 251.9 614.5 248.7 614.6 249.7 614.7 248.0 614.8 250.0 614.9 248.2 615.0 249.3 615.1 250.7 615.1 248.5 615.2 251.1 615.3 246.6 615.4 250.2 615.5 249.1 615.6 248.9 615.7 249.7 615.8 249.3 615.9 249.3 616.0 248.7 616.0 251.1 616.1 249.4 616.2 249.1 616.3 249.0 616.4 250.0 616.5 249.5 616.6 248.7 616.7 250.2 616.8 251.0 616.9 249.0 616.9 251.4 617.0 248.1 617.1 250.2 617.2 248.8 617.3 248.0 617.4 251.4 617.5 248.1 617.6 250.3 617.7 251.5 617.8 248.1 617.8 250.8 617.9 248.8 618.0 250.5 618.1 250.1 618.2 248.2 618.3 250.5 618.4 249.8 618.5 249.5 618.6 249.6 618.7 248.6 618.7 248.9 618.8 251.2 618.9 246.9 619.0 250.9 619.1 248.6 619.2 248.7 619.3 252.0 619.4 247.2 619.5 251.6 619.6 248.5 619.6 250.4 619.7 247.3 619.8 249.4 619.9 249.6 620.0 248.9 620.1 250.8 620.2 246.3 620.3 250.0 620.4 249.0 620.5 249.8 620.5 249.7 620.6 249.3 620.7 248.4 620.8 251.7 620.9 247.9 621.0 248.2 621.1 250.0 621.2 247.9 621.3 250.7 621.4 248.9 621.4 248.5 621.5 250.0 621.6 249.1 621.7 250.3 621.8 250.6 621.9 246.0 622.0 252.9 622.1 248.7 622.2 247.0 622.3 254.0 622.3 249.1 622.4 249.4 622.5 249.8 622.6 248.8 622.7 249.1 622.8 248.4 622.9 250.7 623.0 248.2 623.1 250.3 623.2 250.0 623.2 248.1 623.3 249.9 623.4 248.0 623.5 250.2 623.6 250.0 623.7 247.9 623.8 250.9 623.9 247.0 624.0 253.1 624.1 248.0 624.1 250.4 624.2 249.0 624.3 249.7 624.4 251.9 624.5 250.0 624.6 247.8 624.7 248.7 624.8 248.9 624.9 250.9 625.0 248.0 625.0 250.8 625.1 250.0 625.2 247.5 625.3 250.7 625.4 249.6 625.5 249.3 625.6 248.5 625.7 250.1 625.8 249.8 625.9 248.4 625.9 250.2 626.0 249.7 626.1 250.0 626.2 247.7 626.3 251.7 626.4 249.9 626.5 246.6 626.6 250.7 626.7 248.9 626.8 249.7 626.8 249.2 626.9 251.6 627.0 247.7 627.1 249.9 627.2 249.8 627.3 248.8 627.4 250.6 627.5 248.6 627.6 251.1 627.7 248.2 627.7 250.4 627.8 250.5 627.9 248.3 628.0 249.9 628.1 250.1 628.2 247.3 628.3 251.7 628.4 246.7 628.5 250.0 628.6 250.3 628.6 247.4 628.7 253.2 628.8 247.1 628.9 250.6 629.0 248.7 629.1 251.8 629.2 249.3 629.3 249.8 629.4 249.2 629.5 249.5 629.5 249.6 629.6 249.8 629.7 250.2 629.8 250.7 629.9 248.8 630.0 248.9 630.1 248.9 630.2 250.9 630.3 246.8 630.4 253.6 630.4 246.3 630.5 252.7 630.6 247.1 630.7 251.5 630.8 249.8 630.9 249.3 631.0 248.2 631.1 251.8 631.2 247.2 631.3 250.6 631.3 249.0 631.4 249.2 631.5 249.3 631.6 250.6 631.7 248.5 631.8 249.8 631.9 250.4 632.0 248.0 632.1 251.9 632.2 247.2 632.2 251.5 632.3 248.6 632.4 248.5 632.5 249.4 632.6 250.6 632.7 249.3 632.8 248.2 632.9 253.4 633.0 245.7 633.1 251.1 633.1 251.2 633.2 245.6 633.3 252.3 633.4 247.9 633.5 253.7 633.6 246.7 633.7 250.5 633.8 250.2 633.9 249.1 634.0 250.0 634.0 253.8 634.1 245.7 634.2 252.9 634.3 248.0 634.4 250.5 634.5 249.1 634.6 248.9 634.7 246.7 634.8 253.7 634.9 242.9 634.9 254.5 635.0 249.5 635.1 250.7 635.2 246.9 635.3 254.1 635.4 245.6 635.5 250.9 635.6 250.2 635.7 249.3 635.8 249.0 635.8 249.9 635.9 248.8 636.0 250.2 636.1 249.8 636.2 248.5 636.3 251.3 636.4 247.3 636.5 251.0 636.6 250.5 636.7 249.3 636.7 249.7 636.8 251.6 636.9 246.6 637.0 250.4 637.1 250.5 637.2 248.4 637.3 248.7 637.4 250.3 637.5 250.0 637.6 250.5 637.6 249.7 637.7 247.5 637.8 251.0 637.9 250.5 638.0 247.2 638.1 251.6 638.2 249.2 638.3 249.6 638.4 250.1 638.5 246.3 638.5 253.6 638.6 247.8 638.7 247.7 638.8 249.5 638.9 252.1 639.0 243.0 639.1 252.2 639.2 252.4 639.3 242.4 639.4 257.5 639.4 243.8 639.5 254.0 639.6 250.9 639.7 244.9 639.8 252.0 639.9 248.9 640.0 248.8 640.1 250.7 640.2 249.3 640.3 251.5 640.3 246.5 640.4 251.4 640.5 249.4 640.6 250.1 640.7 249.6 640.8 252.6 640.9 247.7 641.0 252.0 641.1 245.7 641.2 253.7 641.2 248.0 641.3 249.4 641.4 248.8 641.5 249.4 641.6 249.9 641.7 244.2 641.8 253.9 641.9 246.8 642.0 244.9 642.1 256.2 642.1 242.5 642.2 251.9 642.3 252.1 642.4 247.9 642.5 248.9 642.6 253.2 642.7 246.9 642.8 249.2 642.9 250.8 643.0 248.4 643.0 251.1 643.1 249.4 643.2 249.7 643.3 249.7 643.4 248.5 643.5 250.2 643.6 247.5 643.7 250.6 643.8 248.9 643.9 247.6 643.9 251.2 644.0 249.1 644.1 249.1 644.2 251.6 644.3 247.1 644.4 249.0 644.5 250.0 644.6 249.8 644.7 249.3 644.8 248.9 644.8 248.4 644.9 251.7 645.0 248.8 645.1 247.2 645.2 251.4 645.3 247.7 645.4 249.2 645.5 251.8 645.6 247.9 645.7 248.3 645.7 251.3 645.8 248.7 645.9 249.2 646.0 249.5 646.1 246.1 646.2 254.7 646.3 245.9 646.4 247.1 646.5 252.9 646.6 246.5 646.6 253.4 646.7 245.4 646.8 250.3 646.9 248.8 647.0 250.2 647.1 248.5 647.2 250.3 647.3 247.4 647.4 251.3 647.5 247.2 647.5 253.6 647.6 247.3 647.7 255.7 647.8 245.6 647.9 249.7 648.0 251.2 648.1 245.1 648.2 254.3 648.3 247.5 648.4 250.7 648.4 249.5 648.5 249.5 648.6 250.9 648.7 249.2 648.8 247.5 648.9 251.4 649.0 247.2 649.1 252.2 649.2 248.4 649.3 249.2 649.3 250.5 649.4 249.3 649.5 249.5 649.6 249.5 649.7 247.9 649.8 248.6 649.9 253.6 650.0 250.2 650.1 247.7 650.2 250.8 650.2 247.6 650.3 248.7 650.4 251.9 650.5 243.7 650.6 253.2 650.7 251.4 650.8 244.7 650.9 252.5 651.0 248.1 651.1 252.3 651.1 247.9 651.2 249.6 651.3 250.1 651.4 248.1 651.5 249.0 651.6 248.7 651.7 249.1 651.8 250.1 651.9 247.3 652.0 251.0 652.0 248.2 652.1 250.3 652.2 250.3 652.3 250.4 652.4 248.0 652.5 251.4 652.6 248.3 652.7 248.8 652.8 251.4 652.9 249.3 652.9 248.8 653.0 250.0 653.1 249.6 653.2 249.7 653.3 251.3 653.4 247.6 653.5 251.5 653.6 247.7 653.7 248.9 653.8 251.5 653.8 247.5 653.9 250.5 654.0 248.4 654.1 248.0 654.2 250.3 654.3 248.2 654.4 249.1 654.5 250.6 654.6 248.6 654.7 249.5 654.7 248.5 654.8 249.2 654.9 248.4 655.0 251.6 655.1 247.8 655.2 252.1 655.3 248.3 655.4 252.1 655.5 246.0 655.6 250.6 655.6 251.4 655.7 246.5 655.8 250.1 655.9 247.1 656.0 250.0 656.1 249.7 656.2 249.3 656.3 248.6 656.4 249.9 656.5 250.3 656.5 250.8 656.6 246.3 656.7 253.5 656.8 247.8 656.9 248.3 657.0 251.4 657.1 246.7 657.2 252.4 657.3 247.3 657.4 251.8 657.4 249.6 657.5 249.6 657.6 249.3 657.7 250.4 657.8 250.2 657.9 247.3 658.0 252.6 658.1 247.6 658.2 249.7 658.3 251.0 658.3 247.3 658.4 249.8 658.5 250.3 658.6 246.6 658.7 252.7 658.8 249.5 658.9 248.0 659.0 253.1 659.1 246.1 659.2 251.5 659.2 249.9 659.3 247.4 659.4 250.2 659.5 254.4 659.6 245.4 659.7 251.9 659.8 248.5 659.9 250.7 660.0 251.1 660.1 247.2 660.1 249.4 660.2 254.7 660.3 247.8 660.4 250.3 660.5 255.7 660.6 245.1 660.7 249.2 660.8 253.1 660.9 246.8 661.0 252.7 661.0 246.7 661.1 249.4 661.2 248.3 661.3 250.3 661.4 248.0 661.5 250.1 661.6 250.0 661.7 247.3 661.8 251.5 661.9 248.1 661.9 247.6 662.0 250.7 662.1 249.7 662.2 248.7 662.3 250.9 662.4 248.8 662.5 251.3 662.6 248.1 662.7 251.5 662.7 247.7 662.8 250.0 662.9 248.9 663.0 247.6 663.1 253.1 663.2 248.5 663.3 250.4 663.4 249.7 663.5 248.4 663.6 251.1 663.6 249.3 663.7 250.2 663.8 249.5 663.9 249.7 664.0 249.5 664.1 251.0 664.2 248.3 664.3 249.5 664.4 249.6 664.5 250.5 664.5 247.7 664.6 249.9 664.7 249.5 664.8 250.5 664.9 249.9 665.0 248.8 665.1 250.9 665.2 249.7 665.3 247.5 665.4 249.9 665.4 249.1 665.5 248.7 665.6 249.7 665.7 250.8 665.8 246.6 665.9 251.1 666.0 248.6 666.1 248.1 666.2 250.7 666.3 246.6 666.3 251.7 666.4 249.3 666.5 250.0 666.6 249.3 666.7 252.0 666.8 247.7 666.9 250.6 667.0 249.9 667.1 251.6 667.2 250.3 667.2 246.6 667.3 253.7 667.4 244.5 667.5 253.6 667.6 247.1 667.7 252.5 667.8 248.6 667.9 249.5 668.0 248.8 668.1 247.3 668.1 250.2 668.2 252.4 668.3 246.9 668.4 251.1 668.5 250.0 668.6 247.9 668.7 248.9 668.8 251.1 668.9 247.8 669.0 249.5 669.0 250.9 669.1 246.9 669.2 250.1 669.3 249.8 669.4 247.8 669.5 250.8 669.6 247.8 669.7 249.9 669.8 250.5 669.9 248.4 669.9 250.6 670.0 249.6 670.1 250.2 670.2 249.6 670.3 250.3 670.4 247.3 670.5 253.4 670.6 246.8 670.7 250.9 670.8 250.0 670.8 248.0 670.9 251.5 671.0 247.1 671.1 251.4 671.2 248.5 671.3 249.9 671.4 248.7 671.5 248.9 671.6 251.0 671.7 248.5 671.7 247.8 671.8 252.3 671.9 245.3 672.0 253.1 672.1 248.8 672.2 251.5 672.3 249.4 672.4 251.2 672.5 248.9 672.6 248.8 672.6 250.5 672.7 249.6 672.8 250.2 672.9 249.6 673.0 250.9 673.1 249.8 673.2 246.5 673.3 251.4 673.4 249.6 673.5 248.3 673.5 249.3 673.6 250.8 673.7 248.5 673.8 250.8 673.9 249.8 674.0 247.0 674.1 248.3 674.2 251.7 674.3 249.1 674.4 247.7 674.4 250.7 674.5 248.8 674.6 247.6 674.7 251.8 674.8 248.0 674.9 249.3 675.0 250.6 675.1 248.2 675.2 250.4 675.3 248.8 675.3 249.7 675.4 251.2 675.5 247.2 675.6 252.6 675.7 248.8 675.8 251.0 675.9 248.0 676.0 250.7 676.1 249.3 676.2 248.3 676.2 250.1 676.3 249.6 676.4 250.9 676.5 247.2 676.6 251.5 676.7 249.1 676.8 248.1 676.9 251.6 677.0 248.1 677.1 248.7 677.1 249.9 677.2 250.1 677.3 246.9 677.4 250.1 677.5 247.4 677.6 251.3 677.7 248.3 677.8 248.4 677.9 250.2 678.0 248.9 678.0 249.8 678.1 249.9 678.2 250.2 678.3 250.0 678.4 248.0 678.5 251.3 678.6 251.5 678.7 246.9 678.8 247.2 678.9 249.2 678.9 255.6 679.0 246.4 679.1 248.4 679.2 251.2 679.3 248.0 679.4 250.5 679.5 249.0 679.6 252.1 679.7 244.5 679.8 256.2 679.8 245.9 679.9 246.9 680.0 250.5 680.1 249.5 680.2 249.2 680.3 250.8 680.4 249.3 680.5 249.6 680.6 247.5 680.7 251.7 680.7 247.7 680.8 250.1 680.9 249.2 681.0 250.0 681.1 248.1 681.2 250.2 681.3 249.3 681.4 249.9 681.5 250.9 681.6 247.5 681.6 250.1 681.7 250.2 681.8 248.6 681.9 249.6 682.0 250.8 682.1 247.2 682.2 250.2 682.3 248.5 682.4 248.6 682.5 253.4 682.5 245.5 682.6 252.2 682.7 246.5 682.8 249.4 682.9 249.4 683.0 249.7 683.1 245.2 683.2 253.1 683.3 249.1 683.4 246.7 683.4 254.3 683.5 244.3 683.6 251.5 683.7 247.9 683.8 248.9 683.9 250.0 684.0 250.5 684.1 249.1 684.2 249.1 684.3 250.1 684.3 248.7 684.4 250.7 684.5 249.5 684.6 248.8 684.7 249.4 684.8 249.8 684.9 250.1 685.0 250.2 685.1 247.2 685.2 252.7 685.2 248.3 685.3 250.0 685.4 248.4 685.5 250.8 685.6 248.1 685.7 250.1 685.8 251.2 685.9 246.9 686.0 253.4 686.1 247.5 686.1 248.7 686.2 251.5 686.3 249.7 686.4 249.4 686.5 249.8 686.6 248.8 686.7 252.8 686.8 249.0 686.9 247.9 687.0 251.1 687.0 248.5 687.1 249.5 687.2 250.0 687.3 249.6 687.4 249.1 687.5 249.0 687.6 249.7 687.7 249.5 687.8 250.7 687.9 248.1 687.9 252.0 688.0 248.7 688.1 249.1 688.2 250.0 688.3 247.2 688.4 249.8 688.5 249.3 688.6 250.1 688.7 249.1 688.8 250.0 688.8 246.4 688.9 251.3 689.0 250.0 689.1 249.8 689.2 246.6 689.3 253.8 689.4 246.1 689.5 250.5 689.6 247.8 689.7 252.2 689.7 247.1 689.8 250.2 689.9 248.6 690.0 248.4 690.1 251.2 690.2 248.9 690.3 248.0 690.4 253.2 690.5 246.7 690.6 252.5 690.6 249.8 690.7 250.8 690.8 251.5 690.9 245.3 691.0 250.5 691.1 249.7 691.2 247.5 691.3 251.1 691.4 249.4 691.5 250.4 691.5 247.5 691.6 249.7 691.7 248.3 691.8 251.4 691.9 248.6 692.0 251.2 692.1 246.9 692.2 250.5 692.3 249.0 692.4 249.6 692.4 249.7 692.5 249.7 692.6 248.3 692.7 250.9 692.8 247.4 692.9 250.6 693.0 250.9 693.1 249.8 693.2 249.8 693.3 249.1 693.3 251.5 693.4 247.4 693.5 249.5 693.6 249.6 693.7 251.3 693.8 250.3 693.9 247.7 694.0 249.7 694.1 250.4 694.2 248.1 694.2 250.7 694.3 249.5 694.4 248.0 694.5 251.6 694.6 247.9 694.7 248.9 694.8 250.5 694.9 247.2 695.0 252.7 695.1 246.6 695.1 250.7 695.2 246.7 695.3 251.6 695.4 249.5 695.5 247.3 695.6 253.1 695.7 246.5 695.8 251.2 695.9 247.8 696.0 250.7 696.0 248.4 696.1 250.1 696.2 250.5 696.3 251.1 696.4 244.2 696.5 253.9 696.6 250.2 696.7 248.0 696.8 248.7 696.9 253.8 696.9 242.8 697.0 254.3 697.1 248.1 697.2 247.2 697.3 251.6 697.4 249.7 697.5 248.2 697.6 250.5 697.7 248.0 697.8 251.9 697.8 249.5 697.9 248.2 698.0 251.2 698.1 250.9 698.2 248.0 698.3 249.4 698.4 250.9 698.5 247.2 698.6 252.0 698.7 248.3 698.7 251.8 698.8 248.9 698.9 249.4 699.0 249.1 699.1 249.7 699.2 248.0 699.3 254.0 699.4 245.9 699.5 251.3 699.6 251.1 699.6 247.4 699.7 252.2 699.8 246.8 699.9 251.7 700.0 247.6 700.1 252.6 700.2 244.4 700.3 252.1 700.4 245.0 700.5 252.9 700.5 249.2 700.6 248.4 700.7 251.8 700.8 250.3 700.9 248.0 701.0 250.8 701.1 250.3 701.2 249.2 701.3 251.0 701.4 248.1 701.4 252.2 701.5 244.7 701.6 253.2 701.7 246.6 701.8 252.6 701.9 246.7 702.0 250.7 702.1 247.5 702.2 249.3 702.3 253.3 702.3 244.1 702.4 255.6 702.5 243.4 702.6 253.4 702.7 251.0 702.8 245.5 702.9 252.1 703.0 250.0 703.1 249.3 703.2 249.0 703.2 251.5 703.3 248.8 703.4 247.5 703.5 252.5 703.6 247.0 703.7 250.1 703.8 248.8 703.9 249.0 704.0 252.4 704.1 247.1 704.1 249.1 704.2 251.4 704.3 246.4 704.4 251.8 704.5 250.2 704.6 247.3 704.7 248.8 704.8 251.6 704.9 246.9 705.0 251.7 705.0 248.9 705.1 249.1 705.2 249.5 705.3 249.3 705.4 249.5 705.5 247.0 705.6 253.4 705.7 249.3 705.8 247.7 705.9 250.9 705.9 250.7 706.0 245.2 706.1 254.0 706.2 249.2 706.3 247.7 706.4 250.2 706.5 246.2 706.6 255.1 706.7 247.7 706.8 249.3 706.8 251.1 706.9 248.4 707.0 251.2 707.1 250.9 707.2 248.4 707.3 248.9 707.4 249.3 707.5 250.5 707.6 248.2 707.7 249.8 707.7 250.0 707.8 249.2 707.9 249.5 708.0 246.0 708.1 252.6 708.2 249.3 708.3 248.8 708.4 251.0 708.5 247.0 708.6 253.6 708.6 247.9 708.7 248.7 708.8 250.2 708.9 249.0 709.0 249.0 709.1 251.7 709.2 247.0 709.3 252.4 709.4 249.5 709.5 247.9 709.5 252.6 709.6 247.9 709.7 248.5 709.8 253.0 709.9 244.8 710.0 247.3 710.1 253.7 710.2 244.2 710.3 250.9 710.4 253.1 710.4 248.9 710.5 248.7 710.6 255.2 710.7 244.7 710.8 251.1 710.9 248.8 711.0 248.9 711.1 248.3 711.2 251.3 711.3 246.9 711.3 250.9 711.4 248.7 711.5 250.0 711.6 248.4 711.7 251.4 711.8 247.5 711.9 249.4 712.0 251.2 712.1 249.1 712.2 250.1 712.2 249.2 712.3 249.1 712.4 248.7 712.5 247.2 712.6 249.0 712.7 250.3 712.8 249.6 712.9 251.1 713.0 246.5 713.1 250.7 713.1 250.0 713.2 248.9 713.3 250.0 713.4 253.0 713.5 246.4 713.6 250.6 713.7 249.7 713.8 250.0 713.9 248.8 714.0 249.4 714.0 248.2 714.1 249.7 714.2 249.1 714.3 249.8 714.4 251.1 714.5 248.6 714.6 251.4 714.7 248.3 714.8 248.4 714.9 249.4 714.9 248.7 715.0 250.2 715.1 247.5 715.2 251.0 715.3 251.5 715.4 246.9 715.5 250.9 715.6 251.8 715.7 247.6 715.8 253.7 715.8 247.2 715.9 248.4 716.0 252.4 716.1 244.9 716.2 252.5 716.3 250.1 716.4 250.7 716.5 247.1 716.6 250.2 716.7 251.9 716.7 247.8 716.8 248.8 716.9 252.4 717.0 247.1 717.1 253.7 717.2 248.1 717.3 248.5 717.4 252.2 717.5 249.1 717.6 250.6 717.6 249.2 717.7 251.3 717.8 248.3 717.9 249.4 718.0 248.6 718.1 250.7 718.2 247.1 718.3 250.6 718.4 249.6 718.5 248.7 718.5 249.0 718.6 248.8 718.7 249.5 718.8 249.8 718.9 248.3 719.0 250.3 719.1 248.9 719.2 249.2 719.3 247.1 719.4 253.8 719.4 246.5 719.5 252.9 719.6 246.0 719.7 249.2 719.8 248.2 719.9 251.3 720.0 248.3 720.1 248.5 720.2 250.5 720.3 248.4 720.3 249.7 720.4 249.2 720.5 249.9 720.6 248.4 720.7 252.9 720.8 247.9 720.9 252.0 721.0 247.5 721.1 251.6 721.2 247.1 721.2 248.1 721.3 254.5 721.4 247.2 721.5 248.9 721.6 247.3 721.7 249.7 721.8 249.0 721.9 250.0 722.0 250.3 722.1 247.7 722.1 249.6 722.2 249.6 722.3 250.5 722.4 251.8 722.5 248.8 722.6 249.9 722.7 250.8 722.8 248.2 722.9 252.2 723.0 248.2 723.0 249.4 723.1 249.2 723.2 249.5 723.3 248.4 723.4 250.8 723.5 249.3 723.6 248.3 723.7 251.6 723.8 248.3 723.9 251.3 723.9 246.9 724.0 250.4 724.1 250.4 724.2 250.1 724.3 248.3 724.4 249.9 724.5 248.3 724.6 248.5 724.7 250.8 724.8 249.0 724.8 249.7 724.9 249.8 725.0 250.7 725.1 249.3 725.2 249.3 725.3 251.5 725.4 249.2 725.5 247.1 725.6 252.3 725.7 246.9 725.7 249.6 725.8 250.1 725.9 248.2 726.0 250.6 726.1 249.7 726.2 248.7 726.3 250.0 726.4 249.1 726.5 249.5 726.6 250.2 726.6 247.5 726.7 251.5 726.8 249.1 726.9 247.8 727.0 252.6 727.1 247.2 727.2 247.9 727.3 252.0 727.4 245.6 727.5 252.6 727.5 248.9 727.6 249.0 727.7 251.4 727.8 248.7 727.9 250.5 728.0 247.1 728.1 250.3 728.2 249.9 728.3 250.2 728.4 242.2 728.4 254.3 728.5 243.9 728.6 254.6 728.7 248.5 728.8 246.3 728.9 254.8 729.0 247.9 729.1 249.1 729.2 251.7 729.3 248.1 729.3 249.6 729.4 248.4 729.5 250.1 729.6 248.8 729.7 247.3 729.8 249.0 729.9 250.8 730.0 250.7 730.1 249.0 730.2 247.8 730.2 251.6 730.3 249.1 730.4 249.7 730.5 247.7 730.6 251.0 730.7 249.2 730.8 249.9 730.9 250.3 731.0 246.1 731.1 252.2 731.1 248.2 731.2 250.1 731.3 248.5 731.4 251.1 731.5 250.2 731.6 248.8 731.7 249.5 731.8 247.8 731.9 251.8 732.0 249.3 732.0 248.7 732.1 251.4 732.2 249.3 732.3 248.8 732.4 249.6 732.5 250.6 732.6 247.2 732.7 251.4 732.8 248.5 732.9 250.4 732.9 248.4 733.0 249.4 733.1 248.9 733.2 250.9 733.3 248.2 733.4 250.9 733.5 248.6 733.6 249.0 733.7 248.7 733.8 250.8 733.8 249.8 733.9 248.3 734.0 248.6 734.1 251.0 734.2 245.0 734.3 255.3 734.4 244.2 734.5 251.0 734.6 248.5 734.7 251.2 734.7 246.2 734.8 249.9 734.9 248.1 735.0 251.0 735.1 249.0 735.2 246.5 735.3 251.5 735.4 249.4 735.5 250.3 735.6 248.5 735.6 251.7 735.7 247.2 735.8 250.5 735.9 251.4 736.0 247.0 736.1 249.6 736.2 250.0 736.3 250.8 736.4 249.0 736.5 248.5 736.5 251.7 736.6 248.2 736.7 248.8 736.8 251.0 736.9 249.0 737.0 248.6 737.1 248.8 737.2 250.0 737.3 250.6 737.4 249.8 737.4 249.0 737.5 251.4 737.6 247.9 737.7 249.3 737.8 252.7 737.9 245.9 738.0 250.6 738.1 250.0 738.2 247.9 738.3 250.1 738.3 248.2 738.4 245.8 738.5 253.3 738.6 249.4 738.7 250.4 738.8 251.7 738.9 245.3 739.0 251.5 739.1 247.9 739.2 249.6 739.2 245.7 739.3 249.8 739.4 247.8 739.5 252.5 739.6 248.1 739.7 252.7 739.8 248.5 739.9 248.8 740.0 253.5 740.1 247.6 740.1 244.1 740.2 255.1 740.3 250.0 740.4 250.0 740.5 249.0 740.6 247.9 740.7 251.1 740.8 247.2 740.9 250.5 741.0 251.4 741.0 245.1 741.1 254.0 741.2 242.4 741.3 255.2 741.4 247.1 741.5 250.5 741.6 249.7 741.7 247.8 741.8 251.0 741.9 246.9 741.9 250.5 742.0 247.8 742.1 250.7 742.2 247.0 742.3 249.4 742.4 250.4 742.5 246.5 742.6 250.6 742.7 249.0 742.8 249.6 742.8 249.6 742.9 249.5 743.0 249.1 743.1 251.0 743.2 248.1 743.3 250.6 743.4 247.3 743.5 250.3 743.6 247.9 743.7 248.2 743.7 250.9 743.8 246.8 743.9 251.0 744.0 248.3 744.1 251.1 744.2 248.5 744.3 248.0 744.4 250.7 744.5 249.5 744.6 249.0 744.6 250.8 744.7 249.3 744.8 251.0 744.9 246.6 745.0 250.0 745.1 250.3 745.2 250.8 745.3 248.1 745.4 245.2 745.5 258.2 745.5 244.4 745.6 252.0 745.7 246.6 745.8 254.3 745.9 245.6 746.0 253.5 746.1 248.0 746.2 252.6 746.3 246.0 746.4 253.4 746.4 249.1 746.5 244.9 746.6 252.6 746.7 240.6 746.8 254.7 746.9 247.5 747.0 248.8 747.1 243.4 747.2 251.5 747.3 250.1 747.3 246.9 747.4 252.6 747.5 246.1 747.6 252.5 747.7 249.1 747.8 247.7 747.9 248.2 748.0 249.3 748.1 248.3 748.2 250.3 748.2 253.7 748.3 246.1 748.4 251.2 748.5 248.0 748.6 247.2 748.7 251.1 748.8 252.5 748.9 246.8 749.0 251.4 749.1 247.8 749.1 250.4 749.2 251.7 749.3 248.2 749.4 250.1 749.5 251.5 749.6 247.1 749.7 251.0 749.8 247.9 749.9 250.6 750.0 249.7 750.0 249.0 750.1 249.8 750.2 248.2 750.3 251.7 750.4 250.7 750.5 244.8 750.6 253.2 750.7 247.7 750.8 244.9 750.9 255.5 750.9 246.8 751.0 250.4 751.1 248.8 751.2 250.4 751.3 247.7 751.4 251.2 751.5 246.5 751.6 250.9 751.7 251.8 751.8 246.3 751.8 252.4 751.9 248.0 752.0 249.7 752.1 247.6 752.2 251.3 752.3 250.1 752.4 248.1 752.5 251.9 752.6 246.1 752.7 250.8 752.7 248.0 752.8 251.0 752.9 249.9 753.0 248.3 753.1 251.5 753.2 248.8 753.3 250.0 753.4 249.4 753.5 251.1 753.5 250.3 753.6 246.6 753.7 252.2 753.8 248.0 753.9 248.9 754.0 250.0 754.1 250.2 754.2 249.3 754.3 246.4 754.4 250.0 754.4 248.8 754.5 246.8 754.6 255.0 754.7 245.1 754.8 251.2 754.9 251.7 755.0 246.2 755.1 250.8 755.2 249.2 755.3 251.9 755.3 247.1 755.4 249.8 755.5 250.0 755.6 248.7 755.7 249.5 755.8 248.3 755.9 250.4 756.0 246.1 756.1 251.7 756.2 248.0 756.2 248.7 756.3 250.8 756.4 249.0 756.5 247.2 756.6 254.3 756.7 248.4 756.8 246.4 756.9 252.0 757.0 247.8 757.1 249.7 757.1 249.5 757.2 250.6 757.3 248.7 757.4 251.2 757.5 246.0 757.6 250.6 757.7 249.2 757.8 248.8 757.9 250.2 758.0 250.5 758.0 246.7 758.1 251.0 758.2 249.3 758.3 248.4 758.4 248.8 758.5 248.8 758.6 249.4 758.7 248.6 758.8 250.7 758.9 246.1 758.9 250.1 759.0 248.3 759.1 252.1 759.2 246.2 759.3 250.2 759.4 248.7 759.5 253.3 759.6 248.8 759.7 248.6 759.8 251.3 759.8 247.5 759.9 250.5 760.0 248.2 760.1 251.1 760.2 249.9 760.3 247.7 760.4 251.3 760.5 250.2 760.6 251.2 760.7 243.9 760.7 255.6 760.8 246.9 760.9 253.2 761.0 249.0 761.1 248.8 761.2 249.6 761.3 248.3 761.4 251.6 761.5 247.5 761.6 249.0 761.6 251.2 761.7 248.1 761.8 252.6 761.9 248.6 762.0 251.6 762.1 247.3 762.2 251.4 762.3 246.5 762.4 251.4 762.5 247.3 762.5 249.6 762.6 249.7 762.7 251.2 762.8 244.3 762.9 253.2 763.0 251.2 763.1 247.6 763.2 252.2 763.3 245.1 763.4 250.3 763.4 247.7 763.5 247.0 763.6 253.6 763.7 250.1 763.8 249.1 763.9 248.9 764.0 253.5 764.1 246.7 764.2 249.3 764.3 252.1 764.3 247.2 764.4 252.2 764.5 244.8 764.6 249.2 764.7 253.3 764.8 247.5 764.9 249.5 765.0 248.8 765.1 249.1 765.2 248.4 765.2 247.9 765.3 248.1 765.4 246.6 765.5 252.4 765.6 249.1 765.7 248.7 765.8 244.6 765.9 251.9 766.0 247.0 766.1 247.3 766.1 249.1 766.2 244.7 766.3 255.2 766.4 245.0 766.5 249.2 766.6 249.1 766.7 250.5 766.8 251.6 766.9 247.7 767.0 251.2 767.0 248.5 767.1 248.0 767.2 250.0 767.3 251.0 767.4 248.9 767.5 249.1 767.6 248.3 767.7 250.5 767.8 248.5 767.9 251.7 767.9 248.5 768.0 250.4 768.1 248.7 768.2 250.0 768.3 250.0 768.4 249.8 768.5 248.6 768.6 250.6 768.7 247.1 768.8 250.8 768.8 249.3 768.9 247.3 769.0 253.4 769.1 244.7 769.2 253.7 769.3 246.3 769.4 252.1 769.5 249.8 769.6 251.0 769.7 247.8 769.7 249.6 769.8 251.9 769.9 244.5 770.0 253.1 770.1 249.8 770.2 245.6 770.3 254.4 770.4 245.6 770.5 254.8 770.6 244.7 770.6 253.0 770.7 248.7 770.8 248.8 770.9 251.3 771.0 247.2 771.1 250.7 771.2 249.0 771.3 250.2 771.4 250.8 771.5 247.3 771.5 249.5 771.6 249.9 771.7 249.4 771.8 250.0 771.9 248.3 772.0 248.7 772.1 250.9 772.2 249.6 772.3 246.5 772.4 252.8 772.4 246.3 772.5 251.1 772.6 247.9 772.7 250.6 772.8 251.6 772.9 248.8 773.0 249.0 773.1 250.2 773.2 250.2 773.3 249.6 773.3 252.1 773.4 250.0 773.5 249.3 773.6 250.8 773.7 248.5 773.8 252.2 773.9 244.2 774.0 256.6 774.1 242.3 774.2 251.5 774.2 246.9 774.3 248.3 774.4 253.9 774.5 244.9 774.6 250.2 774.7 248.3 774.8 249.0 774.9 251.3 775.0 245.1 775.1 253.4 775.1 248.9 775.2 248.4 775.3 251.0 775.4 249.4 775.5 248.9 775.6 246.2 775.7 252.7 775.8 248.0 775.9 250.4 776.0 248.4 776.0 252.7 776.1 245.9 776.2 250.9 776.3 249.2 776.4 248.4 776.5 250.7 776.6 247.7 776.7 249.8 776.8 249.0 776.9 249.7 776.9 248.6 777.0 250.3 777.1 247.9 777.2 251.0 777.3 247.2 777.4 250.4 777.5 249.4 777.6 250.2 777.7 248.1 777.8 249.9 777.8 249.4 777.9 248.8 778.0 249.9 778.1 250.5 778.2 249.8 778.3 248.0 778.4 250.2 778.5 247.9 778.6 248.7 778.7 249.9 778.7 248.8 778.8 249.4 778.9 249.7 779.0 250.0 779.1 252.6 779.2 245.7 779.3 251.1 779.4 249.4 779.5 249.0 779.6 249.0 779.6 249.0 779.7 249.8 779.8 249.6 779.9 248.1 780.0 249.2 780.1 246.3 780.2 254.7 780.3 245.1 780.4 252.9 780.5 248.8 780.5 245.5 780.6 254.4 780.7 247.3 780.8 250.5 780.9 248.4 781.0 251.1 781.1 251.3 781.2 247.0 781.3 249.7 781.4 250.1 781.4 248.6 781.5 250.8 781.6 249.7 781.7 248.6 781.8 252.2 781.9 248.2 782.0 251.5 782.1 248.6 782.2 248.4 782.3 250.8 782.3 246.8 782.4 250.8 782.5 249.5 782.6 250.4 782.7 248.4 782.8 252.2 782.9 245.7 783.0 253.7 783.1 249.2 783.2 249.6 783.2 251.9 783.3 247.0 783.4 251.9 783.5 248.9 783.6 248.5 783.7 252.8 783.8 247.4 783.9 250.1 784.0 248.8 784.1 249.7 784.1 250.3 784.2 247.2 784.3 249.9 784.4 247.4 784.5 248.9 784.6 251.5 784.7 245.4 784.8 251.7 784.9 250.5 785.0 246.7 785.0 249.6 785.1 253.9 785.2 243.7 785.3 255.8 785.4 243.4 785.5 252.4 785.6 249.0 785.7 246.4 785.8 252.6 785.9 244.7 785.9 253.7 786.0 248.1 786.1 250.7 786.2 248.3 786.3 250.3 786.4 248.3 786.5 248.8 786.6 249.4 786.7 248.2 786.8 249.1 786.8 250.4 786.9 249.8 787.0 250.2 787.1 247.9 787.2 251.3 787.3 249.6 787.4 249.7 787.5 249.5 787.6 249.2 787.7 250.0 787.7 250.1 787.8 248.1 787.9 252.6 788.0 247.8 788.1 249.2 788.2 250.4 788.3 247.2 788.4 250.9 788.5 248.1 788.6 250.0 788.6 249.9 788.7 248.5 788.8 249.2 788.9 252.7 789.0 247.9 789.1 252.7 789.2 248.5 789.3 251.3 789.4 249.2 789.5 249.7 789.5 248.4 789.6 249.0 789.7 251.8 789.8 248.5 789.9 248.7 790.0 251.7 790.1 248.6 790.2 253.0 790.3 245.9 790.4 251.0 790.4 250.8 790.5 249.8 790.6 250.5 790.7 248.1 790.8 251.5 790.9 250.3 791.0 248.8 791.1 248.8 791.2 248.7 791.3 248.7 791.3 250.3 791.4 248.9 791.5 249.5 791.6 248.9 791.7 249.3 791.8 250.9 791.9 249.2 792.0 249.7 792.1 248.6 792.2 250.7 792.2 249.6 792.3 247.7 792.4 249.3 792.5 251.5 792.6 247.9 792.7 248.6 792.8 251.4 792.9 246.8 793.0 253.4 793.1 247.5 793.1 249.1 793.2 248.8 793.3 249.4 793.4 251.3 793.5 249.3 793.6 249.8 793.7 248.3 793.8 249.6 793.9 248.8 794.0 249.5 794.0 250.3 794.1 249.2 794.2 250.2 794.3 248.1 794.4 251.8 794.5 247.7 794.6 250.0 794.7 248.5 794.8 251.0 794.9 248.2 794.9 251.1 795.0 247.7 795.1 251.0 795.2 249.2 795.3 250.1 795.4 249.6 795.5 249.8 795.6 249.8 795.7 248.2 795.8 252.5 795.8 247.9 795.9 249.4 796.0 251.3 796.1 249.9 796.2 248.3 796.3 252.2 796.4 248.0 796.5 249.8 796.6 249.6 796.7 249.8 796.7 250.4 796.8 247.3 796.9 250.8 797.0 246.6 797.1 253.4 797.2 246.9 797.3 250.2 797.4 248.9 797.5 249.5 797.6 249.7 797.6 246.3 797.7 252.3 797.8 247.8 797.9 250.0 798.0 250.4 798.1 247.9 798.2 252.2 798.3 245.9 798.4 254.4 798.5 247.4 798.5 249.6 798.6 250.8 798.7 249.0 798.8 248.0 798.9 248.1 799.0 250.0 799.1 249.4 799.2 250.2 799.3 249.9 799.4 246.9 799.4 250.2 799.5 248.0 799.6 249.4 799.7 248.7 799.8 250.9 799.9 249.3 800.0 250.3 800.1 248.9 800.2 250.0 800.3 249.2 800.3 251.0 800.4 248.1 800.5 249.3 800.6 250.2 800.7 251.9 800.8 247.7 800.9 250.7 801.0 248.3 801.1 250.5 801.2 248.5 801.2 250.3 801.3 248.8 801.4 248.9 801.5 250.4 801.6 248.6 801.7 249.8 801.8 249.0 801.9 250.1 802.0 248.6 802.1 252.8 802.1 247.3 802.2 249.2 802.3 249.7 802.4 250.8 802.5 249.4 802.6 248.8 802.7 249.8 802.8 248.9 802.9 249.8 803.0 249.3 803.0 248.4 803.1 251.7 803.2 249.6 803.3 247.8 803.4 251.7 803.5 247.5 803.6 251.3 803.7 249.8 803.8 246.6 803.9 251.8 803.9 249.9 804.0 248.5 804.1 250.6 804.2 249.2 804.3 249.2 804.4 251.4 804.5 248.4 804.6 249.4 804.7 249.3 804.8 249.7 804.8 250.8 804.9 251.6 805.0 245.4 805.1 253.7 805.2 247.9 805.3 249.6 805.4 249.5 805.5 249.5 805.6 250.3 805.7 248.8 805.7 248.1 805.8 248.9 805.9 250.9 806.0 247.9 806.1 252.6 806.2 247.0 806.3 249.7 806.4 250.7 806.5 246.8 806.6 251.1 806.6 248.4 806.7 253.9 806.8 246.6 806.9 249.1 807.0 251.9 807.1 250.7 807.2 248.6 807.3 247.4 807.4 250.6 807.5 248.2 807.5 250.2 807.6 247.0 807.7 254.4 807.8 247.2 807.9 247.6 808.0 250.4 808.1 249.0 808.2 250.0 808.3 250.9 808.4 248.6 808.4 250.1 808.5 250.5 808.6 246.4 808.7 250.5 808.8 250.0 808.9 247.4 809.0 251.0 809.1 248.5 809.2 250.2 809.3 246.5 809.3 253.6 809.4 246.9 809.5 249.0 809.6 249.7 809.7 251.2 809.8 249.0 809.9 249.5 810.0 250.5 810.1 249.2 810.2 249.6 810.2 249.6 810.3 248.5 810.4 251.9 810.5 247.0 810.6 251.3 810.7 248.4 810.8 250.2 810.9 247.3 811.0 253.8 811.1 244.1 811.1 253.2 811.2 248.7 811.3 246.1 811.4 254.0 811.5 244.9 811.6 248.7 811.7 253.6 811.8 240.9 811.9 252.8 812.0 250.5 812.0 246.9 812.1 253.4 812.2 246.2 812.3 248.8 812.4 248.6 812.5 249.9 812.6 250.8 812.7 249.9 812.8 251.3 812.9 248.5 812.9 247.8 813.0 253.1 813.1 248.9 813.2 251.9 813.3 245.7 813.4 252.7 813.5 252.9 813.6 241.7 813.7 251.7 813.8 250.0 813.8 249.3 813.9 249.6 814.0 251.9 814.1 244.7 814.2 249.4 814.3 248.8 814.4 249.6 814.5 249.1 814.6 248.6 814.7 246.6 814.7 253.6 814.8 246.4 814.9 251.8 815.0 250.7 815.1 247.2 815.2 249.2 815.3 252.7 815.4 245.3 815.5 251.3 815.6 248.7 815.6 246.9 815.7 253.2 815.8 243.6 815.9 253.8 816.0 246.7 816.1 253.5 816.2 245.1 816.3 252.1 816.4 250.0 816.5 250.2 816.5 248.6 816.6 248.1 816.7 250.4 816.8 249.9 816.9 250.2 817.0 250.8 817.1 248.9 817.2 252.4 817.3 247.7 817.4 248.2 817.4 251.4 817.5 248.5 817.6 250.9 817.7 247.2 817.8 249.8 817.9 247.2 818.0 253.2 818.1 249.6 818.2 249.5 818.3 252.4 818.3 246.9 818.4 251.8 818.5 250.5 818.6 248.0 818.7 248.3 818.8 249.6 818.9 251.1 819.0 247.9 819.1 249.7 819.2 248.6 819.2 250.9 819.3 251.0 819.4 247.3 819.5 252.5 819.6 248.1 819.7 250.0 819.8 248.2 819.9 251.4 820.0 248.1 820.1 250.5 820.1 250.0 820.2 247.7 820.3 251.0 820.4 248.1 820.5 249.9 820.6 251.4 820.7 249.2 820.8 252.4 820.9 246.8 821.0 250.6 821.0 250.0 821.1 249.2 821.2 250.1 821.3 250.0 821.4 248.8 821.5 250.0 821.6 250.9 821.7 244.9 821.8 251.0 821.9 250.8 821.9 242.7 822.0 249.5 822.1 249.1 822.2 246.8 822.3 253.6 822.4 247.6 822.5 253.7 822.6 247.3 822.7 247.2 822.8 253.7 822.8 251.4 822.9 241.7 823.0 250.2 823.1 247.5 823.2 255.8 823.3 243.3 823.4 255.9 823.5 246.4 823.6 247.7 823.7 247.7 823.7 253.4 823.8 247.7 823.9 252.7 824.0 247.1 824.1 252.4 824.2 248.8 824.3 247.9 824.4 251.2 824.5 248.6 824.6 249.5 824.6 248.8 824.7 248.6 824.8 251.1 824.9 249.5 825.0 248.3 825.1 249.9 825.2 248.3 825.3 249.8 825.4 248.1 825.5 250.4 825.5 250.1 825.6 248.1 825.7 252.2 825.8 248.5 825.9 248.6 826.0 251.3 826.1 246.4 826.2 252.5 826.3 244.9 826.4 254.8 826.4 246.0 826.5 251.6 826.6 246.5 826.7 252.5 826.8 246.6 826.9 255.1 827.0 245.6 827.1 247.7 827.2 252.3 827.3 247.7 827.3 248.9 827.4 247.3 827.5 252.8 827.6 247.2 827.7 250.6 827.8 248.6 827.9 250.7 828.0 250.3 828.1 249.8 828.2 248.3 828.2 250.3 828.3 248.2 828.4 252.6 828.5 248.4 828.6 250.1 828.7 248.3 828.8 249.8 828.9 249.9 829.0 250.3 829.1 248.5 829.1 250.4 829.2 248.2 829.3 248.8 829.4 250.4 829.5 249.8 829.6 246.8 829.7 251.2 829.8 248.2 829.9 249.9 830.0 249.5 830.0 249.1 830.1 249.3 830.2 252.6 830.3 248.4 830.4 249.8 830.5 249.5 830.6 249.1 830.7 249.1 830.8 253.3 830.9 247.9 830.9 250.8 831.0 248.7 831.1 250.1 831.2 245.5 831.3 253.1 831.4 247.9 831.5 252.6 831.6 243.1 831.7 254.4 831.8 248.1 831.8 250.6 831.9 248.7 832.0 250.7 832.1 245.2 832.2 254.6 832.3 247.5 832.4 250.6 832.5 247.6 832.6 249.9 832.7 247.7 832.7 249.8 832.8 248.7 832.9 250.0 833.0 247.6 833.1 250.0 833.2 249.0 833.3 252.1 833.4 248.2 833.5 250.5 833.6 250.8 833.6 246.8 833.7 250.2 833.8 248.9 833.9 249.2 834.0 248.6 834.1 252.4 834.2 246.7 834.3 252.5 834.4 247.2 834.5 250.1 834.5 249.3 834.6 248.9 834.7 249.5 834.8 250.2 834.9 249.3 835.0 250.2 835.1 249.0 835.2 250.1 835.3 250.7 835.4 247.5 835.4 251.7 835.5 248.5 835.6 250.1 835.7 249.9 835.8 248.4 835.9 251.3 836.0 249.8 836.1 249.1 836.2 250.9 836.3 250.2 836.3 247.0 836.4 249.9 836.5 252.3 836.6 244.9 836.7 250.2 836.8 252.8 836.9 246.0 837.0 251.8 837.1 247.7 837.2 253.1 837.2 246.2 837.3 251.7 837.4 248.4 837.5 248.9 837.6 252.5 837.7 246.9 837.8 250.5 837.9 248.9 838.0 248.7 838.1 249.8 838.1 250.1 838.2 248.2 838.3 251.5 838.4 247.4 838.5 250.8 838.6 249.2 838.7 249.0 838.8 252.2 838.9 248.0 839.0 251.3 839.0 247.7 839.1 249.4 839.2 251.4 839.3 249.8 839.4 247.8 839.5 251.9 839.6 249.4 839.7 245.0 839.8 253.8 839.9 248.6 839.9 249.1 840.0 249.8 840.1 246.2 840.2 251.8 840.3 251.6 840.4 247.9 840.5 246.2 840.6 257.1 840.7 244.2 840.8 249.1 840.8 251.1 840.9 248.7 841.0 251.8 841.1 247.5 841.2 249.3 841.3 249.9 841.4 247.0 841.5 251.0 841.6 246.7 841.7 251.2 841.7 247.5 841.8 251.1 841.9 246.7 842.0 249.9 842.1 249.3 842.2 250.4 842.3 248.3 842.4 253.3 842.5 247.4 842.6 250.2 842.6 250.7 842.7 247.9 842.8 249.7 842.9 247.7 843.0 251.5 843.1 250.8 843.2 250.9 843.3 248.0 843.4 249.2 843.5 248.9 843.5 250.0 843.6 250.1 843.7 249.7 843.8 249.2 843.9 249.5 844.0 248.5 844.1 250.1 844.2 245.5 844.3 252.5 844.4 247.3 844.4 248.5 844.5 249.5 844.6 251.3 844.7 251.2 844.8 249.9" fill="none" stroke="#e98a5c" stroke-width="0.8" stroke-linejoin="round"/><path d="M570.6 249.5L570.7 249.5 570.8 249.5 570.9 249.5 571.0 249.5 571.0 249.5 571.1 249.5 571.2 249.5 571.3 249.5 571.4 249.5 571.5 249.5 571.6 249.5 571.7 249.5 571.8 249.5 571.9 249.5 571.9 249.5 572.0 249.5 572.1 249.5 572.2 249.5 572.3 249.5 572.4 249.5 572.5 249.5 572.6 249.5 572.7 249.5 572.8 249.5 572.8 249.5 572.9 249.5 573.0 249.5 573.1 249.5 573.2 249.5 573.3 249.5 573.4 249.5 573.5 249.5 573.6 249.5 573.7 249.5 573.7 249.5 573.8 249.5 573.9 249.5 574.0 249.5 574.1 249.5 574.2 249.5 574.3 249.5 574.4 249.5 574.5 249.5 574.6 249.5 574.6 249.5 574.7 249.5 574.8 249.5 574.9 249.5 575.0 249.5 575.1 249.5 575.2 249.5 575.3 249.5 575.4 249.5 575.5 249.5 575.5 249.5 575.6 249.5 575.7 249.5 575.8 249.5 575.9 249.5 576.0 249.5 576.1 249.5 576.2 249.5 576.3 249.5 576.4 249.5 576.4 249.5 576.5 249.5 576.6 249.5 576.7 249.5 576.8 249.5 576.9 249.5 577.0 249.5 577.1 249.5 577.2 249.5 577.3 249.5 577.3 249.5 577.4 249.5 577.5 249.5 577.6 249.5 577.7 249.5 577.8 249.5 577.9 249.5 578.0 249.5 578.1 249.5 578.2 249.5 578.2 249.5 578.3 249.5 578.4 249.5 578.5 249.5 578.6 249.5 578.7 249.5 578.8 249.5 578.9 249.5 579.0 249.5 579.1 249.5 579.1 249.5 579.2 249.5 579.3 249.5 579.4 249.5 579.5 249.5 579.6 249.5 579.7 249.5 579.8 249.5 579.9 249.5 580.0 249.5 580.0 249.5 580.1 249.5 580.2 249.5 580.3 249.5 580.4 249.5 580.5 249.5 580.6 249.5 580.7 249.5 580.8 249.5 580.9 249.5 580.9 249.5 581.0 249.5 581.1 249.5 581.2 249.5 581.3 249.5 581.4 249.5 581.5 249.5 581.6 249.5 581.7 249.5 581.8 249.5 581.8 249.5 581.9 249.5 582.0 249.5 582.1 249.5 582.2 249.5 582.3 249.5 582.4 249.5 582.5 249.5 582.6 249.5 582.7 249.5 582.7 249.5 582.8 249.5 582.9 249.5 583.0 249.5 583.1 249.5 583.2 249.5 583.3 249.5 583.4 249.5 583.5 249.5 583.6 249.5 583.6 249.5 583.7 249.5 583.8 249.5 583.9 249.5 584.0 249.5 584.1 249.5 584.2 249.5 584.3 249.5 584.4 249.5 584.5 249.5 584.5 249.5 584.6 249.5 584.7 249.5 584.8 249.5 584.9 249.5 585.0 249.5 585.1 249.5 585.2 249.5 585.3 249.5 585.4 249.5 585.4 249.5 585.5 249.5 585.6 249.5 585.7 249.5 585.8 249.5 585.9 249.5 586.0 249.5 586.1 249.5 586.2 249.5 586.3 249.5 586.3 249.5 586.4 249.5 586.5 249.5 586.6 249.5 586.7 249.5 586.8 249.5 586.9 249.5 587.0 249.5 587.1 249.5 587.2 249.5 587.2 249.5 587.3 249.5 587.4 249.5 587.5 249.5 587.6 249.5 587.7 249.5 587.8 249.5 587.9 249.5 588.0 249.5 588.1 249.5 588.1 249.5 588.2 249.5 588.3 249.5 588.4 249.5 588.5 249.5 588.6 249.5 588.7 249.5 588.8 249.5 588.9 249.5 589.0 249.5 589.0 249.5 589.1 249.5 589.2 249.5 589.3 249.5 589.4 249.5 589.5 249.5 589.6 249.5 589.7 249.5 589.8 249.5 589.9 249.5 589.9 249.5 590.0 249.5 590.1 249.5 590.2 249.5 590.3 249.5 590.4 249.5 590.5 249.5 590.6 249.5 590.7 249.5 590.8 249.5 590.8 249.5 590.9 249.5 591.0 249.5 591.1 249.5 591.2 249.5 591.3 249.5 591.4 249.5 591.5 249.5 591.6 249.5 591.7 249.5 591.7 249.5 591.8 249.5 591.9 249.5 592.0 249.5 592.1 249.5 592.2 249.5 592.3 249.5 592.4 249.5 592.5 249.5 592.6 249.5 592.6 249.5 592.7 249.5 592.8 249.5 592.9 249.5 593.0 249.5 593.1 249.5 593.2 249.5 593.3 249.5 593.4 249.5 593.5 249.5 593.5 249.5 593.6 249.5 593.7 249.5 593.8 249.5 593.9 249.5 594.0 249.5 594.1 249.5 594.2 249.5 594.3 249.5 594.4 249.5 594.4 249.5 594.5 249.5 594.6 249.5 594.7 249.5 594.8 249.5 594.9 249.5 595.0 249.5 595.1 249.5 595.2 249.5 595.3 249.5 595.3 249.5 595.4 249.5 595.5 249.5 595.6 249.5 595.7 249.5 595.8 249.5 595.9 249.5 596.0 249.5 596.1 249.5 596.2 249.5 596.2 249.5 596.3 249.5 596.4 249.5 596.5 249.5 596.6 249.5 596.7 249.5 596.8 249.5 596.9 249.5 597.0 249.5 597.1 249.5 597.1 249.5 597.2 249.5 597.3 249.5 597.4 249.5 597.5 249.5 597.6 249.5 597.7 249.5 597.8 249.5 597.9 249.5 598.0 249.5 598.0 249.5 598.1 249.5 598.2 249.5 598.3 249.5 598.4 249.5 598.5 249.5 598.6 249.5 598.7 249.5 598.8 249.5 598.9 249.5 598.9 249.5 599.0 249.5 599.1 249.5 599.2 249.5 599.3 249.5 599.4 249.5 599.5 249.5 599.6 249.5 599.7 249.5 599.8 249.5 599.8 249.5 599.9 249.5 600.0 249.5 600.1 249.5 600.2 249.5 600.3 249.5 600.4 249.5 600.5 249.5 600.6 249.5 600.7 249.5 600.7 249.5 600.8 249.5 600.9 249.5 601.0 249.5 601.1 249.5 601.2 249.5 601.3 249.5 601.4 249.5 601.5 249.5 601.6 249.5 601.6 249.5 601.7 249.5 601.8 249.5 601.9 249.5 602.0 249.5 602.1 249.5 602.2 249.5 602.3 249.5 602.4 249.5 602.5 249.5 602.5 249.5 602.6 249.5 602.7 249.5 602.8 249.5 602.9 249.5 603.0 249.5 603.1 249.5 603.2 249.5 603.3 249.5 603.4 249.5 603.4 249.5 603.5 249.5 603.6 249.5 603.7 249.5 603.8 249.5 603.9 249.5 604.0 249.5 604.1 249.5 604.2 249.5 604.3 249.5 604.3 249.5 604.4 249.5 604.5 249.5 604.6 249.5 604.7 249.5 604.8 249.5 604.9 249.5 605.0 249.5 605.1 249.5 605.2 249.5 605.2 249.5 605.3 249.5 605.4 249.5 605.5 249.5 605.6 249.5 605.7 249.5 605.8 249.5 605.9 249.5 606.0 249.5 606.1 249.5 606.1 249.5 606.2 249.5 606.3 249.5 606.4 249.5 606.5 249.5 606.6 249.5 606.7 249.5 606.8 249.5 606.9 249.5 607.0 249.5 607.0 249.5 607.1 249.5 607.2 249.5 607.3 249.5 607.4 249.5 607.5 249.5 607.6 249.5 607.7 249.5 607.8 249.5 607.9 249.5 607.9 249.5 608.0 249.5 608.1 249.5 608.2 249.5 608.3 249.5 608.4 249.5 608.5 249.5 608.6 249.5 608.7 249.5 608.8 249.5 608.8 249.5 608.9 249.5 609.0 249.5 609.1 249.5 609.2 249.5 609.3 249.5 609.4 249.5 609.5 249.5 609.6 249.5 609.7 249.5 609.7 249.5 609.8 249.5 609.9 249.5 610.0 249.5 610.1 249.5 610.2 249.5 610.3 249.5 610.4 249.5 610.5 249.5 610.6 249.5 610.6 249.5 610.7 249.5 610.8 249.5 610.9 249.5 611.0 249.5 611.1 249.5 611.2 249.5 611.3 249.5 611.4 249.5 611.5 249.5 611.5 249.5 611.6 249.5 611.7 249.5 611.8 249.5 611.9 249.5 612.0 249.5 612.1 249.5 612.2 249.5 612.3 249.5 612.4 249.5 612.4 249.5 612.5 249.5 612.6 249.5 612.7 249.5 612.8 249.5 612.9 249.5 613.0 249.5 613.1 249.5 613.2 249.5 613.3 249.5 613.3 249.5 613.4 249.5 613.5 249.5 613.6 249.5 613.7 249.5 613.8 249.5 613.9 249.5 614.0 249.5 614.1 249.5 614.2 249.5 614.2 249.5 614.3 249.5 614.4 249.5 614.5 249.5 614.6 249.5 614.7 249.5 614.8 249.5 614.9 249.5 615.0 249.5 615.1 249.5 615.1 249.5 615.2 249.5 615.3 249.5 615.4 249.5 615.5 249.5 615.6 249.5 615.7 249.5 615.8 249.5 615.9 249.5 616.0 249.5 616.0 249.5 616.1 249.5 616.2 249.5 616.3 249.5 616.4 249.5 616.5 249.5 616.6 249.5 616.7 249.5 616.8 249.5 616.9 249.5 616.9 249.5 617.0 249.5 617.1 249.5 617.2 249.5 617.3 249.5 617.4 249.5 617.5 249.5 617.6 249.5 617.7 249.5 617.8 249.5 617.8 249.5 617.9 249.5 618.0 249.5 618.1 249.5 618.2 249.5 618.3 249.5 618.4 249.5 618.5 249.5 618.6 249.5 618.7 249.5 618.7 249.5 618.8 249.5 618.9 249.5 619.0 249.5 619.1 249.5 619.2 249.5 619.3 249.5 619.4 249.5 619.5 249.5 619.6 249.5 619.6 249.5 619.7 249.5 619.8 249.5 619.9 249.5 620.0 249.5 620.1 249.5 620.2 249.5 620.3 249.5 620.4 249.5 620.5 249.5 620.5 249.5 620.6 249.5 620.7 249.5 620.8 249.5 620.9 249.5 621.0 249.5 621.1 249.5 621.2 249.5 621.3 249.5 621.4 249.5 621.4 249.5 621.5 249.5 621.6 249.5 621.7 249.5 621.8 249.5 621.9 249.5 622.0 249.5 622.1 249.5 622.2 249.5 622.3 249.5 622.3 249.5 622.4 249.5 622.5 249.5 622.6 249.5 622.7 249.5 622.8 249.5 622.9 249.5 623.0 249.5 623.1 249.5 623.2 249.5 623.2 249.5 623.3 249.5 623.4 249.5 623.5 249.5 623.6 249.5 623.7 249.5 623.8 249.5 623.9 249.5 624.0 249.5 624.1 249.5 624.1 249.5 624.2 249.5 624.3 249.5 624.4 249.5 624.5 249.5 624.6 249.5 624.7 249.5 624.8 249.5 624.9 249.5 625.0 249.5 625.0 249.5 625.1 249.5 625.2 249.5 625.3 249.5 625.4 249.5 625.5 249.5 625.6 249.5 625.7 249.5 625.8 249.5 625.9 249.5 625.9 249.5 626.0 249.5 626.1 249.5 626.2 249.5 626.3 249.5 626.4 249.5 626.5 249.5 626.6 249.5 626.7 249.5 626.8 249.5 626.8 249.5 626.9 249.5 627.0 249.5 627.1 249.5 627.2 249.5 627.3 249.5 627.4 249.5 627.5 249.5 627.6 249.5 627.7 249.5 627.7 249.5 627.8 249.5 627.9 249.5 628.0 249.5 628.1 249.5 628.2 249.5 628.3 249.5 628.4 249.5 628.5 249.5 628.6 249.5 628.6 249.5 628.7 249.5 628.8 249.5 628.9 249.5 629.0 249.5 629.1 249.5 629.2 249.5 629.3 249.5 629.4 249.5 629.5 249.5 629.5 249.5 629.6 249.5 629.7 249.5 629.8 249.5 629.9 249.5 630.0 249.5 630.1 249.5 630.2 249.5 630.3 249.5 630.4 249.5 630.4 249.5 630.5 249.5 630.6 249.5 630.7 249.5 630.8 249.5 630.9 249.5 631.0 249.5 631.1 249.5 631.2 249.5 631.3 249.5 631.3 249.5 631.4 249.5 631.5 249.5 631.6 249.5 631.7 249.5 631.8 249.5 631.9 249.5 632.0 249.5 632.1 249.5 632.2 249.5 632.2 249.5 632.3 249.5 632.4 249.5 632.5 249.5 632.6 249.5 632.7 249.5 632.8 249.5 632.9 249.5 633.0 249.5 633.1 249.5 633.1 249.5 633.2 249.5 633.3 249.5 633.4 249.5 633.5 249.5 633.6 249.5 633.7 249.5 633.8 249.5 633.9 249.5 634.0 249.5 634.0 249.5 634.1 249.5 634.2 249.5 634.3 249.5 634.4 249.5 634.5 249.5 634.6 249.5 634.7 249.5 634.8 249.5 634.9 249.5 634.9 249.5 635.0 249.5 635.1 249.5 635.2 249.5 635.3 249.5 635.4 249.5 635.5 249.5 635.6 249.5 635.7 249.5 635.8 249.5 635.8 249.5 635.9 249.5 636.0 249.5 636.1 249.5 636.2 249.5 636.3 249.5 636.4 249.5 636.5 249.5 636.6 249.5 636.7 249.5 636.7 249.5 636.8 249.5 636.9 249.5 637.0 249.5 637.1 249.5 637.2 249.5 637.3 249.5 637.4 249.5 637.5 249.5 637.6 249.5 637.6 249.5 637.7 249.5 637.8 249.5 637.9 249.5 638.0 249.5 638.1 249.5 638.2 249.5 638.3 249.5 638.4 249.5 638.5 249.5 638.5 249.5 638.6 249.5 638.7 249.5 638.8 249.5 638.9 249.5 639.0 249.5 639.1 249.5 639.2 249.5 639.3 249.5 639.4 249.5 639.4 249.5 639.5 249.5 639.6 249.5 639.7 249.5 639.8 249.5 639.9 249.5 640.0 249.5 640.1 249.5 640.2 249.5 640.3 249.5 640.3 249.5 640.4 249.5 640.5 249.5 640.6 249.5 640.7 249.5 640.8 249.5 640.9 249.5 641.0 249.5 641.1 249.5 641.2 249.5 641.2 249.5 641.3 249.5 641.4 249.5 641.5 249.5 641.6 249.5 641.7 249.5 641.8 249.5 641.9 249.5 642.0 249.5 642.1 249.5 642.1 249.5 642.2 249.5 642.3 249.5 642.4 249.5 642.5 249.5 642.6 249.5 642.7 249.5 642.8 249.5 642.9 249.5 643.0 249.5 643.0 249.5 643.1 249.5 643.2 249.5 643.3 249.5 643.4 249.5 643.5 249.5 643.6 249.5 643.7 249.5 643.8 249.5 643.9 249.5 643.9 249.5 644.0 249.5 644.1 249.5 644.2 249.5 644.3 249.5 644.4 249.5 644.5 249.5 644.6 249.5 644.7 249.5 644.8 249.5 644.8 249.5 644.9 249.5 645.0 249.5 645.1 249.5 645.2 249.5 645.3 249.5 645.4 249.5 645.5 249.5 645.6 249.5 645.7 249.5 645.7 249.5 645.8 249.5 645.9 249.5 646.0 249.5 646.1 249.5 646.2 249.5 646.3 249.5 646.4 249.5 646.5 249.5 646.6 249.5 646.6 249.5 646.7 249.5 646.8 249.5 646.9 249.5 647.0 249.5 647.1 249.5 647.2 249.5 647.3 249.5 647.4 249.5 647.5 249.5 647.5 249.5 647.6 249.5 647.7 249.5 647.8 249.5 647.9 249.5 648.0 249.5 648.1 249.5 648.2 249.5 648.3 249.5 648.4 249.5 648.4 249.5 648.5 249.5 648.6 249.5 648.7 249.5 648.8 249.5 648.9 249.5 649.0 249.5 649.1 249.5 649.2 249.5 649.3 249.5 649.3 249.5 649.4 249.5 649.5 249.5 649.6 249.5 649.7 249.5 649.8 249.5 649.9 249.5 650.0 249.5 650.1 249.5 650.2 249.5 650.2 249.5 650.3 249.5 650.4 249.5 650.5 249.5 650.6 249.5 650.7 249.5 650.8 249.5 650.9 249.5 651.0 249.5 651.1 249.5 651.1 249.5 651.2 249.5 651.3 249.5 651.4 249.5 651.5 249.5 651.6 249.5 651.7 249.5 651.8 249.5 651.9 249.5 652.0 249.5 652.0 249.5 652.1 249.5 652.2 249.5 652.3 249.5 652.4 249.5 652.5 249.5 652.6 249.5 652.7 249.5 652.8 249.5 652.9 249.5 652.9 249.5 653.0 249.5 653.1 249.5 653.2 249.5 653.3 249.5 653.4 249.5 653.5 249.5 653.6 249.5 653.7 249.5 653.8 249.5 653.8 249.5 653.9 249.5 654.0 249.5 654.1 249.5 654.2 249.5 654.3 249.5 654.4 249.5 654.5 249.5 654.6 249.5 654.7 249.5 654.7 249.5 654.8 249.5 654.9 249.5 655.0 249.5 655.1 249.5 655.2 249.5 655.3 249.5 655.4 249.5 655.5 249.5 655.6 249.5 655.6 249.5 655.7 249.5 655.8 249.5 655.9 249.5 656.0 249.5 656.1 249.5 656.2 249.5 656.3 249.5 656.4 249.5 656.5 249.5 656.5 249.5 656.6 249.5 656.7 249.5 656.8 249.5 656.9 249.5 657.0 249.5 657.1 249.5 657.2 249.5 657.3 249.5 657.4 249.5 657.4 249.5 657.5 249.5 657.6 249.5 657.7 249.5 657.8 249.5 657.9 249.5 658.0 249.5 658.1 249.5 658.2 249.5 658.3 249.5 658.3 249.5 658.4 249.5 658.5 249.5 658.6 249.5 658.7 249.5 658.8 249.5 658.9 249.5 659.0 249.5 659.1 249.5 659.2 249.5 659.2 249.5 659.3 249.5 659.4 249.5 659.5 249.5 659.6 249.5 659.7 249.5 659.8 249.5 659.9 249.5 660.0 249.5 660.1 249.5 660.1 249.5 660.2 249.5 660.3 249.5 660.4 249.5 660.5 249.5 660.6 249.5 660.7 249.5 660.8 249.5 660.9 249.5 661.0 249.5 661.0 249.5 661.1 249.5 661.2 249.5 661.3 249.5 661.4 249.5 661.5 249.5 661.6 249.5 661.7 249.5 661.8 249.5 661.9 249.5 661.9 249.5 662.0 249.5 662.1 249.5 662.2 249.5 662.3 249.5 662.4 249.5 662.5 249.5 662.6 249.5 662.7 249.5 662.7 249.5 662.8 249.5 662.9 249.5 663.0 249.5 663.1 249.5 663.2 249.5 663.3 249.5 663.4 249.5 663.5 249.5 663.6 249.5 663.6 249.5 663.7 249.5 663.8 249.5 663.9 249.5 664.0 249.5 664.1 249.5 664.2 249.5 664.3 249.5 664.4 249.5 664.5 249.5 664.5 249.5 664.6 249.5 664.7 249.5 664.8 249.5 664.9 249.5 665.0 249.5 665.1 249.5 665.2 249.5 665.3 249.5 665.4 249.5 665.4 249.5 665.5 249.5 665.6 249.5 665.7 249.5 665.8 249.5 665.9 249.5 666.0 249.5 666.1 249.5 666.2 249.5 666.3 249.5 666.3 249.5 666.4 249.5 666.5 249.5 666.6 249.5 666.7 249.5 666.8 249.5 666.9 249.5 667.0 249.5 667.1 249.5 667.2 249.5 667.2 249.5 667.3 249.5 667.4 249.5 667.5 249.5 667.6 249.5 667.7 249.5 667.8 249.5 667.9 249.5 668.0 249.5 668.1 249.5 668.1 249.5 668.2 249.5 668.3 249.5 668.4 249.5 668.5 249.5 668.6 249.5 668.7 249.5 668.8 249.5 668.9 249.5 669.0 249.5 669.0 249.5 669.1 249.5 669.2 249.5 669.3 249.5 669.4 249.5 669.5 249.5 669.6 249.5 669.7 249.5 669.8 249.5 669.9 249.5 669.9 249.5 670.0 249.5 670.1 249.5 670.2 249.5 670.3 249.5 670.4 249.5 670.5 249.5 670.6 249.5 670.7 249.5 670.8 249.5 670.8 249.5 670.9 249.5 671.0 249.5 671.1 249.5 671.2 249.5 671.3 249.5 671.4 249.5 671.5 249.5 671.6 249.5 671.7 249.5 671.7 249.5 671.8 249.5 671.9 249.5 672.0 249.5 672.1 249.5 672.2 249.5 672.3 249.5 672.4 249.5 672.5 249.5 672.6 249.5 672.6 249.5 672.7 249.5 672.8 249.5 672.9 249.5 673.0 249.5 673.1 249.5 673.2 249.5 673.3 249.5 673.4 249.5 673.5 249.5 673.5 249.5 673.6 249.5 673.7 249.5 673.8 249.5 673.9 249.5 674.0 249.5 674.1 249.5 674.2 249.5 674.3 249.5 674.4 249.5 674.4 249.5 674.5 249.5 674.6 249.5 674.7 249.5 674.8 249.5 674.9 249.5 675.0 249.5 675.1 249.5 675.2 249.5 675.3 249.5 675.3 249.5 675.4 249.5 675.5 249.5 675.6 249.5 675.7 249.5 675.8 249.5 675.9 249.5 676.0 249.5 676.1 249.5 676.2 249.5 676.2 249.5 676.3 249.5 676.4 249.5 676.5 249.5 676.6 249.5 676.7 249.5 676.8 249.5 676.9 249.5 677.0 249.5 677.1 249.5 677.1 249.5 677.2 249.5 677.3 249.5 677.4 249.5 677.5 249.5 677.6 249.5 677.7 249.5 677.8 249.5 677.9 249.5 678.0 249.5 678.0 249.5 678.1 249.5 678.2 249.5 678.3 249.5 678.4 249.5 678.5 249.5 678.6 249.5 678.7 249.5 678.8 249.5 678.9 249.5 678.9 249.5 679.0 249.5 679.1 249.5 679.2 249.5 679.3 249.5 679.4 249.5 679.5 249.5 679.6 249.5 679.7 249.5 679.8 249.5 679.8 249.5 679.9 249.5 680.0 249.5 680.1 249.5 680.2 249.5 680.3 249.5 680.4 249.5 680.5 249.5 680.6 249.5 680.7 249.5 680.7 249.5 680.8 249.5 680.9 249.5 681.0 249.5 681.1 249.5 681.2 249.5 681.3 249.5 681.4 249.5 681.5 249.5 681.6 249.5 681.6 249.5 681.7 249.5 681.8 249.5 681.9 249.5 682.0 249.5 682.1 249.5 682.2 249.5 682.3 249.5 682.4 249.5 682.5 249.5 682.5 249.5 682.6 249.5 682.7 249.5 682.8 249.5 682.9 249.5 683.0 249.5 683.1 249.5 683.2 249.5 683.3 249.5 683.4 249.5 683.4 249.5 683.5 249.5 683.6 249.5 683.7 249.5 683.8 249.5 683.9 249.5 684.0 249.5 684.1 249.5 684.2 249.5 684.3 249.5 684.3 249.5 684.4 249.5 684.5 249.5 684.6 249.5 684.7 249.5 684.8 249.5 684.9 249.5 685.0 249.5 685.1 249.5 685.2 249.5 685.2 249.5 685.3 249.5 685.4 249.5 685.5 249.5 685.6 249.5 685.7 249.5 685.8 249.5 685.9 249.5 686.0 249.5 686.1 249.5 686.1 249.5 686.2 249.5 686.3 249.5 686.4 249.5 686.5 249.5 686.6 249.5 686.7 249.5 686.8 249.5 686.9 249.5 687.0 249.5 687.0 249.5 687.1 249.5 687.2 249.5 687.3 249.5 687.4 249.5 687.5 249.5 687.6 249.5 687.7 249.5 687.8 249.5 687.9 249.5 687.9 249.5 688.0 249.5 688.1 249.5 688.2 249.5 688.3 249.5 688.4 249.5 688.5 249.5 688.6 249.5 688.7 249.5 688.8 249.5 688.8 249.5 688.9 249.5 689.0 249.5 689.1 249.5 689.2 249.5 689.3 249.5 689.4 249.5 689.5 249.5 689.6 249.5 689.7 249.5 689.7 249.5 689.8 249.5 689.9 249.5 690.0 249.5 690.1 249.5 690.2 249.5 690.3 249.5 690.4 249.5 690.5 249.5 690.6 249.5 690.6 249.5 690.7 249.5 690.8 249.5 690.9 249.5 691.0 249.5 691.1 249.5 691.2 249.5 691.3 249.5 691.4 249.5 691.5 249.5 691.5 249.5 691.6 249.5 691.7 249.5 691.8 249.5 691.9 249.5 692.0 249.5 692.1 249.5 692.2 249.5 692.3 249.5 692.4 249.5 692.4 249.5 692.5 249.5 692.6 249.5 692.7 249.5 692.8 249.5 692.9 249.5 693.0 249.5 693.1 249.5 693.2 249.5 693.3 249.5 693.3 249.5 693.4 249.5 693.5 249.5 693.6 249.5 693.7 249.5 693.8 249.5 693.9 249.5 694.0 249.5 694.1 249.5 694.2 249.5 694.2 249.5 694.3 249.5 694.4 249.5 694.5 249.5 694.6 249.5 694.7 249.5 694.8 249.5 694.9 249.5 695.0 249.5 695.1 249.5 695.1 249.5 695.2 249.5 695.3 249.5 695.4 249.5 695.5 249.5 695.6 249.5 695.7 249.5 695.8 249.5 695.9 249.5 696.0 249.5 696.0 249.5 696.1 249.5 696.2 249.5 696.3 249.5 696.4 249.5 696.5 249.5 696.6 249.5 696.7 249.5 696.8 249.5 696.9 249.5 696.9 249.5 697.0 249.5 697.1 249.5 697.2 249.5 697.3 249.5 697.4 249.5 697.5 249.5 697.6 249.5 697.7 249.5 697.8 249.5 697.8 249.5 697.9 249.5 698.0 249.5 698.1 249.5 698.2 249.5 698.3 249.5 698.4 249.5 698.5 249.5 698.6 249.5 698.7 249.5 698.7 249.5 698.8 249.5 698.9 249.5 699.0 249.5 699.1 249.5 699.2 249.5 699.3 249.5 699.4 249.5 699.5 249.5 699.6 249.5 699.6 249.5 699.7 249.5 699.8 249.5 699.9 249.5 700.0 249.5 700.1 249.5 700.2 249.5 700.3 249.5 700.4 249.5 700.5 249.5 700.5 249.5 700.6 249.5 700.7 249.5 700.8 249.5 700.9 249.5 701.0 249.5 701.1 249.5 701.2 249.5 701.3 249.5 701.4 249.5 701.4 249.5 701.5 249.5 701.6 249.5 701.7 249.5 701.8 249.5 701.9 249.5 702.0 249.5 702.1 249.5 702.2 249.5 702.3 249.5 702.3 249.5 702.4 249.5 702.5 249.5 702.6 249.5 702.7 249.5 702.8 249.5 702.9 249.5 703.0 249.5 703.1 249.5 703.2 249.5 703.2 249.5 703.3 249.5 703.4 249.5 703.5 249.5 703.6 249.5 703.7 249.5 703.8 249.5 703.9 249.5 704.0 249.5 704.1 249.5 704.1 249.5 704.2 249.5 704.3 249.5 704.4 249.5 704.5 249.5 704.6 249.5 704.7 249.5 704.8 249.5 704.9 249.5 705.0 249.5 705.0 249.5 705.1 249.5 705.2 249.5 705.3 249.5 705.4 249.5 705.5 249.5 705.6 249.5 705.7 249.5 705.8 249.5 705.9 249.5 705.9 249.5 706.0 249.5 706.1 249.5 706.2 249.5 706.3 249.5 706.4 249.5 706.5 249.5 706.6 249.5 706.7 249.5 706.8 249.5 706.8 249.5 706.9 249.5 707.0 249.5 707.1 249.5 707.2 249.5 707.3 249.5 707.4 249.5 707.5 249.5 707.6 249.5 707.7 249.5 707.7 249.5 707.8 249.5 707.9 249.5 708.0 249.5 708.1 249.5 708.2 249.5 708.3 249.5 708.4 249.5 708.5 249.5 708.6 249.5 708.6 249.5 708.7 249.5 708.8 249.5 708.9 249.5 709.0 249.5 709.1 249.5 709.2 249.5 709.3 249.5 709.4 249.5 709.5 249.5 709.5 249.5 709.6 249.5 709.7 249.5 709.8 249.5 709.9 249.5 710.0 249.5 710.1 249.5 710.2 249.5 710.3 249.5 710.4 249.5 710.4 249.5 710.5 249.5 710.6 249.5 710.7 249.5 710.8 249.5 710.9 249.5 711.0 249.5 711.1 249.5 711.2 249.5 711.3 249.5 711.3 249.5 711.4 249.5 711.5 249.5 711.6 249.5 711.7 249.5 711.8 249.5 711.9 249.5 712.0 249.5 712.1 249.5 712.2 249.5 712.2 249.5 712.3 249.5 712.4 249.5 712.5 249.5 712.6 249.5 712.7 249.5 712.8 249.5 712.9 249.5 713.0 249.5 713.1 249.5 713.1 249.5 713.2 249.5 713.3 249.5 713.4 249.5 713.5 249.5 713.6 249.5 713.7 249.5 713.8 249.5 713.9 249.5 714.0 249.5 714.0 249.5 714.1 249.5 714.2 249.5 714.3 249.5 714.4 249.5 714.5 249.5 714.6 249.5 714.7 249.5 714.8 249.5 714.9 249.5 714.9 249.5 715.0 249.5 715.1 249.5 715.2 249.5 715.3 249.5 715.4 249.5 715.5 249.5 715.6 249.5 715.7 249.5 715.8 249.5 715.8 249.5 715.9 249.5 716.0 249.5 716.1 249.5 716.2 249.5 716.3 249.5 716.4 249.5 716.5 249.5 716.6 249.5 716.7 249.5 716.7 249.5 716.8 249.5 716.9 249.5 717.0 249.5 717.1 249.5 717.2 249.5 717.3 249.5 717.4 249.5 717.5 249.5 717.6 249.5 717.6 249.5 717.7 249.5 717.8 249.5 717.9 249.5 718.0 249.5 718.1 249.5 718.2 249.5 718.3 249.5 718.4 249.5 718.5 249.5 718.5 249.5 718.6 249.5 718.7 249.5 718.8 249.5 718.9 249.5 719.0 249.5 719.1 249.5 719.2 249.5 719.3 249.5 719.4 249.5 719.4 249.5 719.5 249.5 719.6 249.5 719.7 249.5 719.8 249.5 719.9 249.5 720.0 249.5 720.1 249.5 720.2 249.5 720.3 249.5 720.3 249.5 720.4 249.5 720.5 249.5 720.6 249.5 720.7 249.5 720.8 249.5 720.9 249.5 721.0 249.5 721.1 249.5 721.2 249.5 721.2 249.5 721.3 249.5 721.4 249.5 721.5 249.5 721.6 249.5 721.7 249.5 721.8 249.5 721.9 249.5 722.0 249.5 722.1 249.5 722.1 249.5 722.2 249.5 722.3 249.5 722.4 249.5 722.5 249.5 722.6 249.5 722.7 249.5 722.8 249.5 722.9 249.5 723.0 249.5 723.0 249.5 723.1 249.5 723.2 249.5 723.3 249.5 723.4 249.5 723.5 249.5 723.6 249.5 723.7 249.5 723.8 249.5 723.9 249.5 723.9 249.5 724.0 249.5 724.1 249.5 724.2 249.5 724.3 249.5 724.4 249.5 724.5 249.5 724.6 249.5 724.7 249.5 724.8 249.5 724.8 249.5 724.9 249.5 725.0 249.5 725.1 249.5 725.2 249.5 725.3 249.5 725.4 249.5 725.5 249.5 725.6 249.5 725.7 249.5 725.7 249.5 725.8 249.5 725.9 249.5 726.0 249.5 726.1 249.5 726.2 249.5 726.3 249.5 726.4 249.5 726.5 249.5 726.6 249.5 726.6 249.5 726.7 249.5 726.8 249.5 726.9 249.5 727.0 249.5 727.1 249.5 727.2 249.5 727.3 249.5 727.4 249.5 727.5 249.5 727.5 249.5 727.6 249.5 727.7 249.5 727.8 249.5 727.9 249.5 728.0 249.5 728.1 249.5 728.2 249.5 728.3 249.5 728.4 249.5 728.4 249.5 728.5 249.5 728.6 249.5 728.7 249.5 728.8 249.5 728.9 249.5 729.0 249.5 729.1 249.5 729.2 249.5 729.3 249.5 729.3 249.5 729.4 249.5 729.5 249.5 729.6 249.5 729.7 249.5 729.8 249.5 729.9 249.5 730.0 249.5 730.1 249.5 730.2 249.5 730.2 249.5 730.3 249.5 730.4 249.5 730.5 249.5 730.6 249.5 730.7 249.5 730.8 249.5 730.9 249.5 731.0 249.5 731.1 249.5 731.1 249.5 731.2 249.5 731.3 249.5 731.4 249.5 731.5 249.5 731.6 249.5 731.7 249.5 731.8 249.5 731.9 249.5 732.0 249.5 732.0 249.5 732.1 249.5 732.2 249.5 732.3 249.5 732.4 249.5 732.5 249.5 732.6 249.5 732.7 249.5 732.8 249.5 732.9 249.5 732.9 249.5 733.0 249.5 733.1 249.5 733.2 249.5 733.3 249.5 733.4 249.5 733.5 249.5 733.6 249.5 733.7 249.5 733.8 249.5 733.8 249.5 733.9 249.5 734.0 249.5 734.1 249.5 734.2 249.5 734.3 249.5 734.4 249.5 734.5 249.5 734.6 249.5 734.7 249.5 734.7 249.5 734.8 249.5 734.9 249.5 735.0 249.5 735.1 249.5 735.2 249.5 735.3 249.5 735.4 249.5 735.5 249.5 735.6 249.5 735.6 249.5 735.7 249.5 735.8 249.5 735.9 249.5 736.0 249.5 736.1 249.5 736.2 249.5 736.3 249.5 736.4 249.5 736.5 249.5 736.5 249.5 736.6 249.5 736.7 249.5 736.8 249.5 736.9 249.5 737.0 249.5 737.1 249.5 737.2 249.5 737.3 249.5 737.4 249.5 737.4 249.5 737.5 249.5 737.6 249.5 737.7 249.5 737.8 249.5 737.9 249.5 738.0 249.5 738.1 249.5 738.2 249.5 738.3 249.5 738.3 249.5 738.4 249.5 738.5 249.5 738.6 249.5 738.7 249.5 738.8 249.5 738.9 249.5 739.0 249.5 739.1 249.5 739.2 249.5 739.2 249.5 739.3 249.5 739.4 249.5 739.5 249.5 739.6 249.5 739.7 249.5 739.8 249.5 739.9 249.5 740.0 249.5 740.1 249.5 740.1 249.5 740.2 249.5 740.3 249.5 740.4 249.5 740.5 249.5 740.6 249.5 740.7 249.5 740.8 249.5 740.9 249.5 741.0 249.5 741.0 249.5 741.1 249.5 741.2 249.5 741.3 249.5 741.4 249.5 741.5 249.5 741.6 249.5 741.7 249.5 741.8 249.5 741.9 249.5 741.9 249.5 742.0 249.5 742.1 249.5 742.2 249.5 742.3 249.5 742.4 249.5 742.5 249.5 742.6 249.5 742.7 249.5 742.8 249.5 742.8 249.5 742.9 249.5 743.0 249.5 743.1 249.5 743.2 249.5 743.3 249.5 743.4 249.5 743.5 249.5 743.6 249.5 743.7 249.5 743.7 249.5 743.8 249.5 743.9 249.5 744.0 249.5 744.1 249.5 744.2 249.5 744.3 249.5 744.4 249.5 744.5 249.5 744.6 249.5 744.6 249.5 744.7 249.5 744.8 249.5 744.9 249.5 745.0 249.5 745.1 249.5 745.2 249.5 745.3 249.5 745.4 249.5 745.5 249.5 745.5 249.5 745.6 249.5 745.7 249.5 745.8 249.5 745.9 249.5 746.0 249.5 746.1 249.5 746.2 249.5 746.3 249.5 746.4 249.5 746.4 249.5 746.5 249.5 746.6 249.5 746.7 249.5 746.8 249.5 746.9 249.5 747.0 249.5 747.1 249.5 747.2 249.5 747.3 249.5 747.3 249.5 747.4 249.5 747.5 249.5 747.6 249.5 747.7 249.5 747.8 249.5 747.9 249.5 748.0 249.5 748.1 249.5 748.2 249.5 748.2 249.5 748.3 249.5 748.4 249.5 748.5 249.5 748.6 249.5 748.7 249.5 748.8 249.5 748.9 249.5 749.0 249.5 749.1 249.5 749.1 249.5 749.2 249.5 749.3 249.5 749.4 249.5 749.5 249.5 749.6 249.5 749.7 249.5 749.8 249.5 749.9 249.5 750.0 249.5 750.0 249.5 750.1 249.5 750.2 249.5 750.3 249.5 750.4 249.5 750.5 249.5 750.6 249.5 750.7 249.5 750.8 249.5 750.9 249.5 750.9 249.5 751.0 249.5 751.1 249.5 751.2 249.5 751.3 249.5 751.4 249.5 751.5 249.5 751.6 249.5 751.7 249.5 751.8 249.5 751.8 249.5 751.9 249.5 752.0 249.5 752.1 249.5 752.2 249.5 752.3 249.5 752.4 249.5 752.5 249.5 752.6 249.5 752.7 249.5 752.7 249.5 752.8 249.5 752.9 249.5 753.0 249.5 753.1 249.5 753.2 249.5 753.3 249.5 753.4 249.5 753.5 249.5 753.5 249.5 753.6 249.5 753.7 249.5 753.8 249.5 753.9 249.5 754.0 249.5 754.1 249.5 754.2 249.5 754.3 249.5 754.4 249.5 754.4 249.5 754.5 249.5 754.6 249.5 754.7 249.5 754.8 249.5 754.9 249.5 755.0 249.5 755.1 249.5 755.2 249.5 755.3 249.5 755.3 249.5 755.4 249.5 755.5 249.5 755.6 249.5 755.7 249.5 755.8 249.5 755.9 249.5 756.0 249.5 756.1 249.5 756.2 249.5 756.2 249.5 756.3 249.5 756.4 249.5 756.5 249.5 756.6 249.5 756.7 249.5 756.8 249.5 756.9 249.5 757.0 249.5 757.1 249.5 757.1 235.7 757.2 249.5 757.3 249.5 757.4 249.5 757.5 249.5 757.6 249.5 757.7 249.5 757.8 266.7 757.9 249.5 758.0 249.5 758.0 249.5 758.1 249.5 758.2 249.5 758.3 249.5 758.4 249.5 758.5 249.5 758.6 249.5 758.7 249.5 758.8 249.5 758.9 249.5 758.9 249.5 759.0 249.5 759.1 228.0 759.2 249.5 759.3 249.5 759.4 249.5 759.5 249.5 759.6 249.5 759.7 249.5 759.8 249.5 759.8 249.5 759.9 249.5 760.0 249.5 760.1 249.5 760.2 249.5 760.3 249.5 760.4 249.5 760.5 282.2 760.6 249.5 760.7 249.5 760.7 249.5 760.8 249.5 760.9 249.5 761.0 249.5 761.1 249.5 761.2 249.5 761.3 249.5 761.4 223.7 761.5 249.5 761.6 249.5 761.6 249.5 761.7 249.5 761.8 249.5 761.9 249.5 762.0 249.5 762.1 249.5 762.2 249.5 762.3 249.5 762.4 249.5 762.5 249.5 762.5 249.5 762.6 249.5 762.7 268.4 762.8 249.5 762.9 249.5 763.0 249.5 763.1 249.5 763.2 249.5 763.3 249.5 763.4 249.5 763.4 249.5 763.5 249.5 763.6 249.5 763.7 249.5 763.8 249.5 763.9 249.5 764.0 249.5 764.1 227.1 764.2 249.5 764.3 249.5 764.3 249.5 764.4 249.5 764.5 249.5 764.6 249.5 764.7 249.5 764.8 249.5 764.9 249.5 765.0 271.0 765.1 249.5 765.2 249.5 765.2 249.5 765.3 249.5 765.4 249.5 765.5 249.5 765.6 249.5 765.7 249.5 765.8 249.5 765.9 249.5 766.0 249.5 766.1 249.5 766.1 249.5 766.2 249.5 766.3 234.9 766.4 249.5 766.5 249.5 766.6 249.5 766.7 249.5 766.8 249.5 766.9 249.5 767.0 249.5 767.0 249.5 767.1 249.5 767.2 249.5 767.3 249.5 767.4 249.5 767.5 249.5 767.6 249.5 767.7 261.5 767.8 249.5 767.9 249.5 767.9 249.5 768.0 249.5 768.1 249.5 768.2 249.5 768.3 249.5 768.4 249.5 768.5 249.5 768.6 249.5 768.7 249.5 768.8 249.5 768.8 249.5 768.9 249.5 769.0 249.5 769.1 249.5 769.2 249.5 769.3 249.5 769.4 249.5 769.5 249.5 769.6 249.5 769.7 249.5 769.7 249.5 769.8 249.5 769.9 249.5 770.0 249.5 770.1 249.5 770.2 249.5 770.3 249.5 770.4 249.5 770.5 249.5 770.6 249.5 770.6 249.5 770.7 249.5 770.8 249.5 770.9 249.5 771.0 249.5 771.1 249.5 771.2 249.5 771.3 249.5 771.4 249.5 771.5 249.5 771.5 249.5 771.6 249.5 771.7 249.5 771.8 249.5 771.9 249.5 772.0 249.5 772.1 249.5 772.2 249.5 772.3 249.5 772.4 249.5 772.4 249.5 772.5 249.5 772.6 249.5 772.7 249.5 772.8 249.5 772.9 249.5 773.0 249.5 773.1 249.5 773.2 249.5 773.3 249.5 773.3 249.5 773.4 249.5 773.5 249.5 773.6 249.5 773.7 249.5 773.8 249.5 773.9 249.5 774.0 249.5 774.1 249.5 774.2 249.5 774.2 249.5 774.3 249.5 774.4 249.5 774.5 249.5 774.6 249.5 774.7 249.5 774.8 249.5 774.9 249.5 775.0 249.5 775.1 249.5 775.1 249.5 775.2 249.5 775.3 249.5 775.4 249.5 775.5 249.5 775.6 249.5 775.7 249.5 775.8 249.5 775.9 249.5 776.0 249.5 776.0 249.5 776.1 249.5 776.2 249.5 776.3 249.5 776.4 249.5 776.5 249.5 776.6 249.5 776.7 249.5 776.8 249.5 776.9 249.5 776.9 249.5 777.0 249.5 777.1 249.5 777.2 249.5 777.3 249.5 777.4 249.5 777.5 249.5 777.6 230.6 777.7 249.5 777.8 249.5 777.8 249.5 777.9 249.5 778.0 249.5 778.1 249.5 778.2 249.5 778.3 249.5 778.4 249.5 778.5 269.3 778.6 249.5 778.7 249.5 778.7 249.5 778.8 249.5 778.9 249.5 779.0 249.5 779.1 249.5 779.2 249.5 779.3 249.5 779.4 249.5 779.5 249.5 779.6 249.5 779.6 249.5 779.7 249.5 779.8 249.5 779.9 249.5 780.0 249.5 780.1 249.5 780.2 249.5 780.3 249.5 780.4 249.5 780.5 249.5 780.5 249.5 780.6 249.5 780.7 249.5 780.8 249.5 780.9 249.5 781.0 249.5 781.1 249.5 781.2 249.5 781.3 249.5 781.4 249.5 781.4 249.5 781.5 249.5 781.6 249.5 781.7 249.5 781.8 249.5 781.9 249.5 782.0 249.5 782.1 249.5 782.2 249.5 782.3 249.5 782.3 249.5 782.4 249.5 782.5 249.5 782.6 249.5 782.7 249.5 782.8 249.5 782.9 249.5 783.0 249.5 783.1 249.5 783.2 249.5 783.2 249.5 783.3 249.5 783.4 249.5 783.5 249.5 783.6 249.5 783.7 249.5 783.8 249.5 783.9 249.5 784.0 249.5 784.1 249.5 784.1 249.5 784.2 249.5 784.3 249.5 784.4 249.5 784.5 249.5 784.6 249.5 784.7 249.5 784.8 249.5 784.9 249.5 785.0 249.5 785.0 249.5 785.1 249.5 785.2 249.5 785.3 249.5 785.4 249.5 785.5 249.5 785.6 249.5 785.7 249.5 785.8 249.5 785.9 249.5 785.9 249.5 786.0 249.5 786.1 249.5 786.2 249.5 786.3 249.5 786.4 249.5 786.5 249.5 786.6 249.5 786.7 249.5 786.8 249.5 786.8 249.5 786.9 249.5 787.0 249.5 787.1 249.5 787.2 249.5 787.3 249.5 787.4 249.5 787.5 249.5 787.6 249.5 787.7 249.5 787.7 249.5 787.8 249.5 787.9 249.5 788.0 249.5 788.1 249.5 788.2 249.5 788.3 249.5 788.4 240.9 788.5 249.5 788.6 249.5 788.6 249.5 788.7 249.5 788.8 249.5 788.9 249.5 789.0 249.5 789.1 249.5 789.2 249.5 789.3 260.7 789.4 249.5 789.5 249.5 789.5 249.5 789.6 249.5 789.7 249.5 789.8 249.5 789.9 249.5 790.0 249.5 790.1 249.5 790.2 249.5 790.3 249.5 790.4 249.5 790.4 249.5 790.5 249.5 790.6 249.5 790.7 249.5 790.8 249.5 790.9 249.5 791.0 249.5 791.1 249.5 791.2 249.5 791.3 249.5 791.3 249.5 791.4 249.5 791.5 249.5 791.6 249.5 791.7 249.5 791.8 249.5 791.9 249.5 792.0 249.5 792.1 249.5 792.2 249.5 792.2 249.5 792.3 249.5 792.4 249.5 792.5 249.5 792.6 249.5 792.7 249.5 792.8 249.5 792.9 249.5 793.0 249.5 793.1 249.5 793.1 249.5 793.2 249.5 793.3 249.5 793.4 249.5 793.5 249.5 793.6 249.5 793.7 249.5 793.8 249.5 793.9 249.5 794.0 249.5 794.0 249.5 794.1 249.5 794.2 249.5 794.3 249.5 794.4 249.5 794.5 249.5 794.6 249.5 794.7 249.5 794.8 249.5 794.9 249.5 794.9 249.5 795.0 249.5 795.1 249.5 795.2 249.5 795.3 249.5 795.4 249.5 795.5 249.5 795.6 249.5 795.7 249.5 795.8 249.5 795.8 249.5 795.9 249.5 796.0 249.5 796.1 249.5 796.2 249.5 796.3 249.5 796.4 249.5 796.5 249.5 796.6 249.5 796.7 249.5 796.7 249.5 796.8 249.5 796.9 249.5 797.0 249.5 797.1 249.5 797.2 249.5 797.3 249.5 797.4 249.5 797.5 249.5 797.6 249.5 797.6 249.5 797.7 249.5 797.8 249.5 797.9 249.5 798.0 249.5 798.1 249.5 798.2 249.5 798.3 249.5 798.4 249.5 798.5 249.5 798.5 249.5 798.6 249.5 798.7 249.5 798.8 249.5 798.9 249.5 799.0 249.5 799.1 249.5 799.2 249.5 799.3 249.5 799.4 249.5 799.4 249.5 799.5 249.5 799.6 249.5 799.7 249.5 799.8 249.5 799.9 249.5 800.0 249.5 800.1 249.5 800.2 249.5 800.3 249.5 800.3 249.5 800.4 249.5 800.5 249.5 800.6 249.5 800.7 249.5 800.8 249.5 800.9 249.5 801.0 249.5 801.1 249.5 801.2 249.5 801.2 249.5 801.3 249.5 801.4 249.5 801.5 249.5 801.6 249.5 801.7 249.5 801.8 249.5 801.9 249.5 802.0 249.5 802.1 249.5 802.1 249.5 802.2 249.5 802.3 249.5 802.4 249.5 802.5 249.5 802.6 249.5 802.7 249.5 802.8 249.5 802.9 249.5 803.0 249.5 803.0 249.5 803.1 249.5 803.2 249.5 803.3 249.5 803.4 249.5 803.5 249.5 803.6 249.5 803.7 249.5 803.8 249.5 803.9 249.5 803.9 249.5 804.0 249.5 804.1 249.5 804.2 249.5 804.3 249.5 804.4 249.5 804.5 249.5 804.6 249.5 804.7 249.5 804.8 249.5 804.8 249.5 804.9 249.5 805.0 249.5 805.1 249.5 805.2 249.5 805.3 249.5 805.4 249.5 805.5 249.5 805.6 249.5 805.7 249.5 805.7 249.5 805.8 238.3 805.9 249.5 806.0 249.5 806.1 249.5 806.2 249.5 806.3 249.5 806.4 259.8 806.5 249.5 806.6 249.5 806.6 249.5 806.7 249.5 806.8 249.5 806.9 249.5 807.0 249.5 807.1 249.5 807.2 249.5 807.3 249.5 807.4 249.5 807.5 249.5 807.5 249.5 807.6 249.5 807.7 249.5 807.8 249.5 807.9 249.5 808.0 249.5 808.1 249.5 808.2 249.5 808.3 249.5 808.4 249.5 808.4 249.5 808.5 249.5 808.6 249.5 808.7 249.5 808.8 249.5 808.9 249.5 809.0 249.5 809.1 249.5 809.2 249.5 809.3 249.5 809.3 249.5 809.4 249.5 809.5 249.5 809.6 249.5 809.7 249.5 809.8 249.5 809.9 249.5 810.0 249.5 810.1 249.5 810.2 249.5 810.2 249.5 810.3 249.5 810.4 249.5 810.5 249.5 810.6 249.5 810.7 249.5 810.8 249.5 810.9 249.5 811.0 249.5 811.1 249.5 811.1 249.5 811.2 249.5 811.3 249.5 811.4 249.5 811.5 249.5 811.6 249.5 811.7 249.5 811.8 249.5 811.9 249.5 812.0 249.5 812.0 249.5 812.1 249.5 812.2 249.5 812.3 249.5 812.4 249.5 812.5 249.5 812.6 249.5 812.7 249.5 812.8 249.5 812.9 249.5 812.9 249.5 813.0 249.5 813.1 249.5 813.2 249.5 813.3 249.5 813.4 249.5 813.5 249.5 813.6 249.5 813.7 249.5 813.8 249.5 813.8 249.5 813.9 249.5 814.0 249.5 814.1 249.5 814.2 249.5 814.3 249.5 814.4 249.5 814.5 249.5 814.6 249.5 814.7 249.5 814.7 249.5 814.8 249.5 814.9 249.5 815.0 249.5 815.1 249.5 815.2 249.5 815.3 249.5 815.4 249.5 815.5 249.5 815.6 249.5 815.6 249.5 815.7 249.5 815.8 249.5 815.9 249.5 816.0 249.5 816.1 249.5 816.2 249.5 816.3 249.5 816.4 249.5 816.5 249.5 816.5 249.5 816.6 249.5 816.7 249.5 816.8 249.5 816.9 249.5 817.0 249.5 817.1 249.5 817.2 249.5 817.3 249.5 817.4 249.5 817.4 249.5 817.5 249.5 817.6 249.5 817.7 249.5 817.8 249.5 817.9 249.5 818.0 249.5 818.1 249.5 818.2 249.5 818.3 249.5 818.3 249.5 818.4 249.5 818.5 249.5 818.6 249.5 818.7 249.5 818.8 249.5 818.9 249.5 819.0 249.5 819.1 249.5 819.2 249.5 819.2 249.5 819.3 249.5 819.4 249.5 819.5 249.5 819.6 249.5 819.7 249.5 819.8 249.5 819.9 249.5 820.0 249.5 820.1 249.5 820.1 249.5 820.2 249.5 820.3 249.5 820.4 249.5 820.5 249.5 820.6 249.5 820.7 249.5 820.8 249.5 820.9 249.5 821.0 249.5 821.0 249.5 821.1 249.5 821.2 249.5 821.3 249.5 821.4 249.5 821.5 249.5 821.6 249.5 821.7 249.5 821.8 249.5 821.9 249.5 821.9 249.5 822.0 249.5 822.1 249.5 822.2 249.5 822.3 249.5 822.4 249.5 822.5 249.5 822.6 249.5 822.7 249.5 822.8 249.5 822.8 249.5 822.9 249.5 823.0 249.5 823.1 249.5 823.2 249.5 823.3 249.5 823.4 249.5 823.5 249.5 823.6 249.5 823.7 249.5 823.7 249.5 823.8 249.5 823.9 249.5 824.0 249.5 824.1 249.5 824.2 249.5 824.3 249.5 824.4 249.5 824.5 249.5 824.6 249.5 824.6 249.5 824.7 249.5 824.8 249.5 824.9 249.5 825.0 249.5 825.1 249.5 825.2 249.5 825.3 249.5 825.4 249.5 825.5 249.5 825.5 249.5 825.6 249.5 825.7 249.5 825.8 249.5 825.9 249.5 826.0 249.5 826.1 249.5 826.2 249.5 826.3 249.5 826.4 249.5 826.4 249.5 826.5 249.5 826.6 249.5 826.7 249.5 826.8 249.5 826.9 249.5 827.0 249.5 827.1 249.5 827.2 249.5 827.3 249.5 827.3 249.5 827.4 249.5 827.5 249.5 827.6 249.5 827.7 249.5 827.8 249.5 827.9 249.5 828.0 249.5 828.1 249.5 828.2 249.5 828.2 249.5 828.3 249.5 828.4 249.5 828.5 249.5 828.6 249.5 828.7 249.5 828.8 249.5 828.9 249.5 829.0 249.5 829.1 249.5 829.1 249.5 829.2 249.5 829.3 249.5 829.4 249.5 829.5 249.5 829.6 249.5 829.7 249.5 829.8 249.5 829.9 249.5 830.0 249.5 830.0 249.5 830.1 249.5 830.2 249.5 830.3 249.5 830.4 249.5 830.5 249.5 830.6 249.5 830.7 249.5 830.8 249.5 830.9 249.5 830.9 249.5 831.0 249.5 831.1 249.5 831.2 249.5 831.3 249.5 831.4 249.5 831.5 249.5 831.6 249.5 831.7 249.5 831.8 249.5 831.8 249.5 831.9 249.5 832.0 249.5 832.1 249.5 832.2 249.5 832.3 249.5 832.4 249.5 832.5 249.5 832.6 249.5 832.7 249.5 832.7 249.5 832.8 249.5 832.9 249.5 833.0 249.5 833.1 249.5 833.2 249.5 833.3 249.5 833.4 249.5 833.5 249.5 833.6 249.5 833.6 249.5 833.7 249.5 833.8 249.5 833.9 249.5 834.0 249.5 834.1 249.5 834.2 249.5 834.3 249.5 834.4 249.5 834.5 249.5 834.5 249.5 834.6 249.5 834.7 249.5 834.8 249.5 834.9 249.5 835.0 249.5 835.1 249.5 835.2 249.5 835.3 249.5 835.4 249.5 835.4 249.5 835.5 249.5 835.6 249.5 835.7 249.5 835.8 249.5 835.9 249.5 836.0 249.5 836.1 249.5 836.2 249.5 836.3 249.5 836.3 249.5 836.4 249.5 836.5 249.5 836.6 249.5 836.7 249.5 836.8 249.5 836.9 249.5 837.0 249.5 837.1 249.5 837.2 249.5 837.2 249.5 837.3 249.5 837.4 249.5 837.5 249.5 837.6 249.5 837.7 249.5 837.8 249.5 837.9 249.5 838.0 249.5 838.1 249.5 838.1 249.5 838.2 249.5 838.3 249.5 838.4 249.5 838.5 249.5 838.6 249.5 838.7 249.5 838.8 249.5 838.9 249.5 839.0 249.5 839.0 249.5 839.1 249.5 839.2 249.5 839.3 249.5 839.4 249.5 839.5 249.5 839.6 249.5 839.7 249.5 839.8 249.5 839.9 249.5 839.9 249.5 840.0 249.5 840.1 249.5 840.2 249.5 840.3 249.5 840.4 249.5 840.5 249.5 840.6 249.5 840.7 249.5 840.8 249.5 840.8 249.5 840.9 249.5 841.0 249.5 841.1 249.5 841.2 249.5 841.3 249.5 841.4 249.5 841.5 249.5 841.6 249.5 841.7 249.5 841.7 249.5 841.8 249.5 841.9 249.5 842.0 249.5 842.1 249.5 842.2 249.5 842.3 249.5 842.4 249.5 842.5 249.5 842.6 249.5 842.6 249.5 842.7 249.5 842.8 249.5 842.9 249.5 843.0 249.5 843.1 249.5 843.2 249.5 843.3 249.5 843.4 249.5 843.5 249.5 843.5 249.5 843.6 249.5 843.7 249.5 843.8 249.5 843.9 249.5 844.0 249.5 844.1 249.5 844.2 249.5 844.3 249.5 844.4 249.5 844.4 249.5 844.5 249.5 844.6 249.5 844.7 249.5 844.8 249.5" fill="none" stroke="#f0b090" stroke-width="0.8" stroke-linejoin="round"/><path d="M570.5 249.5 H844.5" stroke="#e9a080" stroke-width="0.6" opacity="0.6"/></svg><rect x="570.5" y="206.5" width="274.0" height="77.0" fill="none" stroke="#2a2a2a" stroke-width="1.15"/><path d="M570.5 283.5 v-2.7 M570.5 206.5 v2.7" stroke="#2a2a2a" stroke-width="1"/><path d="M615.5 283.5 v-2.7 M615.5 206.5 v2.7" stroke="#2a2a2a" stroke-width="1"/><path d="M660.5 283.5 v-2.7 M660.5 206.5 v2.7" stroke="#2a2a2a" stroke-width="1"/><path d="M705.5 283.5 v-2.7 M705.5 206.5 v2.7" stroke="#2a2a2a" stroke-width="1"/><path d="M750.5 283.5 v-2.7 M750.5 206.5 v2.7" stroke="#2a2a2a" stroke-width="1"/><path d="M795.5 283.5 v-2.7 M795.5 206.5 v2.7" stroke="#2a2a2a" stroke-width="1"/><path d="M840.5 283.5 v-2.7 M840.5 206.5 v2.7" stroke="#2a2a2a" stroke-width="1"/><path d="M570.5 215.5 h2.7 M844.5 215.5 h-2.7" stroke="#2a2a2a" stroke-width="1"/><text x="567.1" y="219.4" font-size="11" text-anchor="end" fill="#2a2a2a">4</text><path d="M570.5 232.5 h2.7 M844.5 232.5 h-2.7" stroke="#2a2a2a" stroke-width="1"/><text x="567.1" y="236.4" font-size="11" text-anchor="end" fill="#2a2a2a">2</text><path d="M570.5 249.5 h2.7 M844.5 249.5 h-2.7" stroke="#2a2a2a" stroke-width="1"/><text x="567.1" y="253.4" font-size="11" text-anchor="end" fill="#2a2a2a">0</text><path d="M570.5 266.5 h2.7 M844.5 266.5 h-2.7" stroke="#2a2a2a" stroke-width="1"/><text x="567.1" y="270.4" font-size="11" text-anchor="end" fill="#2a2a2a">-2</text><path d="M570.5 283.5 h2.7 M844.5 283.5 h-2.7" stroke="#2a2a2a" stroke-width="1"/><text x="567.1" y="287.4" font-size="11" text-anchor="end" fill="#2a2a2a">-4</text><text x="571.1" y="202.8" font-size="11" fill="#2a2a2a">×</text><text x="580.1" y="202.8" font-size="10.5" fill="#2a2a2a">10</text><text x="591.6" y="198.3" font-size="8" fill="#2a2a2a">4</text><text transform="translate(553.7,245.2) rotate(-90)" font-size="11.5" text-anchor="middle" fill="#2a2a2a">IMF 1</text><rect x="570.5" y="295.5" width="274.0" height="77.0" fill="#fff"/><path d="M570.5 295.5 V372.5" stroke="#d8d8d8" stroke-width="1"/><path d="M615.5 295.5 V372.5" stroke="#d8d8d8" stroke-width="1"/><path d="M660.5 295.5 V372.5" stroke="#d8d8d8" stroke-width="1"/><path d="M705.5 295.5 V372.5" stroke="#d8d8d8" stroke-width="1"/><path d="M750.5 295.5 V372.5" stroke="#d8d8d8" stroke-width="1"/><path d="M795.5 295.5 V372.5" stroke="#d8d8d8" stroke-width="1"/><path d="M840.5 295.5 V372.5" stroke="#d8d8d8" stroke-width="1"/><path d="M570.5 304.5 H844.5" stroke="#d8d8d8" stroke-width="1"/><path d="M570.5 321.5 H844.5" stroke="#d8d8d8" stroke-width="1"/><path d="M570.5 338.5 H844.5" stroke="#d8d8d8" stroke-width="1"/><path d="M570.5 355.5 H844.5" stroke="#d8d8d8" stroke-width="1"/><path d="M570.5 372.5 H844.5" stroke="#d8d8d8" stroke-width="1"/><svg x="570.5" y="295.5" width="274.0" height="77.0" viewBox="570.5 295.5 274.0 77.0" overflow="hidden"><path d="M570.6 338.6L570.7 338.4 570.8 338.2 570.9 338.0 571.0 338.0 571.0 337.9 571.1 338.0 571.2 338.3 571.3 338.5 571.4 338.9 571.5 339.3 571.6 339.5 571.7 339.5 571.8 339.4 571.9 338.9 571.9 338.4 572.0 338.0 572.1 337.9 572.2 337.9 572.3 337.8 572.4 337.9 572.5 337.9 572.6 338.1 572.7 338.2 572.8 338.5 572.8 338.8 572.9 338.9 573.0 339.0 573.1 339.1 573.2 339.0 573.3 338.7 573.4 338.2 573.5 337.7 573.6 337.7 573.7 337.6 573.7 337.4 573.8 337.4 573.9 337.5 574.0 337.8 574.1 338.2 574.2 338.6 574.3 338.9 574.4 339.1 574.5 339.1 574.6 339.1 574.6 338.8 574.7 338.8 574.8 338.5 574.9 338.2 575.0 338.0 575.1 337.9 575.2 337.8 575.3 337.9 575.4 338.0 575.5 338.1 575.5 338.3 575.6 338.4 575.7 338.3 575.8 338.3 575.9 338.1 576.0 337.8 576.1 337.7 576.2 337.7 576.3 337.7 576.4 337.8 576.4 337.9 576.5 338.0 576.6 338.1 576.7 338.4 576.8 338.7 576.9 338.9 577.0 339.1 577.1 339.2 577.2 339.3 577.3 339.4 577.3 339.3 577.4 339.3 577.5 339.0 577.6 338.7 577.7 338.3 577.8 338.0 577.9 337.8 578.0 337.6 578.1 337.5 578.2 337.4 578.2 337.5 578.3 337.7 578.4 337.9 578.5 338.1 578.6 338.4 578.7 338.4 578.8 338.5 578.9 338.6 579.0 338.8 579.1 339.0 579.1 339.2 579.2 339.2 579.3 339.0 579.4 338.6 579.5 338.3 579.6 337.9 579.7 337.5 579.8 337.4 579.9 337.6 580.0 337.9 580.0 338.2 580.1 338.3 580.2 338.3 580.3 338.5 580.4 338.7 580.5 338.8 580.6 339.0 580.7 339.0 580.8 338.6 580.9 338.1 580.9 337.8 581.0 337.5 581.1 337.7 581.2 338.0 581.3 338.3 581.4 338.6 581.5 338.9 581.6 338.9 581.7 338.9 581.8 338.7 581.8 338.6 581.9 338.4 582.0 338.1 582.1 338.0 582.2 338.0 582.3 338.1 582.4 338.3 582.5 338.4 582.6 338.4 582.7 338.4 582.7 338.6 582.8 338.5 582.9 338.5 583.0 338.6 583.1 338.8 583.2 339.0 583.3 339.3 583.4 339.2 583.5 339.1 583.6 339.1 583.6 338.8 583.7 338.7 583.8 338.8 583.9 338.8 584.0 338.7 584.1 338.7 584.2 338.7 584.3 338.7 584.4 338.8 584.5 338.9 584.5 338.9 584.6 339.1 584.7 339.1 584.8 339.3 584.9 339.5 585.0 339.5 585.1 339.3 585.2 339.0 585.3 338.6 585.4 338.1 585.4 337.8 585.5 337.5 585.6 337.4 585.7 337.5 585.8 337.6 585.9 337.8 586.0 338.0 586.1 338.1 586.2 338.1 586.3 337.9 586.3 338.0 586.4 338.0 586.5 338.1 586.6 338.0 586.7 338.1 586.8 338.1 586.9 337.9 587.0 337.8 587.1 337.9 587.2 338.0 587.2 338.3 587.3 338.5 587.4 338.9 587.5 339.3 587.6 339.7 587.7 339.7 587.8 339.6 587.9 339.5 588.0 339.3 588.1 338.9 588.1 338.5 588.2 338.4 588.3 338.4 588.4 338.3 588.5 338.2 588.6 338.2 588.7 338.5 588.8 338.7 588.9 338.9 589.0 339.2 589.0 339.5 589.1 339.7 589.2 339.9 589.3 340.1 589.4 339.9 589.5 339.5 589.6 339.0 589.7 338.6 589.8 338.2 589.9 338.2 589.9 338.0 590.0 338.1 590.1 337.9 590.2 337.7 590.3 337.5 590.4 337.5 590.5 337.4 590.6 337.6 590.7 337.9 590.8 338.3 590.8 338.6 590.9 338.9 591.0 339.1 591.1 339.2 591.2 338.9 591.3 338.9 591.4 339.0 591.5 338.9 591.6 338.5 591.7 338.1 591.7 337.9 591.8 337.8 591.9 337.7 592.0 337.7 592.1 337.9 592.2 338.1 592.3 338.4 592.4 338.6 592.5 338.8 592.6 339.0 592.6 339.1 592.7 339.2 592.8 339.1 592.9 338.7 593.0 338.3 593.1 337.9 593.2 337.6 593.3 337.8 593.4 338.1 593.5 338.4 593.5 338.6 593.6 338.8 593.7 338.9 593.8 338.8 593.9 338.8 594.0 338.9 594.1 338.9 594.2 338.9 594.3 338.9 594.4 338.6 594.4 338.4 594.5 338.1 594.6 337.9 594.7 338.0 594.8 338.2 594.9 338.5 595.0 338.6 595.1 338.7 595.2 338.8 595.3 338.7 595.3 338.8 595.4 338.6 595.5 338.2 595.6 337.8 595.7 337.3 595.8 337.2 595.9 337.2 596.0 337.2 596.1 337.2 596.2 337.6 596.2 338.1 596.3 338.5 596.4 338.9 596.5 339.3 596.6 339.6 596.7 339.6 596.8 339.3 596.9 339.1 597.0 338.8 597.1 338.5 597.1 338.3 597.2 338.2 597.3 338.5 597.4 338.6 597.5 338.6 597.6 338.9 597.7 339.1 597.8 339.5 597.9 339.9 598.0 339.9 598.0 339.9 598.1 340.0 598.2 339.8 598.3 339.6 598.4 339.4 598.5 339.0 598.6 338.4 598.7 338.0 598.8 337.7 598.9 337.2 598.9 337.0 599.0 337.0 599.1 337.3 599.2 337.6 599.3 338.0 599.4 338.3 599.5 338.3 599.6 338.4 599.7 338.5 599.8 338.5 599.8 338.5 599.9 338.4 600.0 338.6 600.1 338.7 600.2 338.8 600.3 338.8 600.4 338.9 600.5 339.0 600.6 339.0 600.7 339.2 600.7 339.2 600.8 339.1 600.9 339.0 601.0 339.0 601.1 339.0 601.2 339.0 601.3 338.8 601.4 338.3 601.5 337.9 601.6 337.3 601.6 336.9 601.7 336.8 601.8 336.9 601.9 337.1 602.0 337.3 602.1 337.5 602.2 337.9 602.3 338.3 602.4 338.5 602.5 338.8 602.5 339.1 602.6 339.4 602.7 339.6 602.8 339.5 602.9 339.2 603.0 338.7 603.1 338.3 603.2 337.8 603.3 337.8 603.4 337.9 603.4 338.1 603.5 338.4 603.6 338.5 603.7 338.7 603.8 338.7 603.9 338.8 604.0 338.8 604.1 338.9 604.2 338.9 604.3 338.5 604.3 338.2 604.4 338.0 604.5 338.0 604.6 338.0 604.7 338.0 604.8 338.1 604.9 338.3 605.0 338.3 605.1 338.6 605.2 338.9 605.2 339.0 605.3 339.0 605.4 339.0 605.5 338.9 605.6 338.5 605.7 338.3 605.8 338.0 605.9 337.9 606.0 337.7 606.1 337.9 606.1 338.2 606.2 338.6 606.3 339.2 606.4 339.4 606.5 339.4 606.6 339.2 606.7 338.9 606.8 338.8 606.9 338.7 607.0 338.6 607.0 338.7 607.1 339.0 607.2 339.2 607.3 339.6 607.4 339.8 607.5 340.0 607.6 339.8 607.7 339.2 607.8 338.8 607.9 338.3 607.9 338.0 608.0 337.9 608.1 338.0 608.2 338.1 608.3 338.2 608.4 338.4 608.5 338.5 608.6 338.8 608.7 338.8 608.8 339.0 608.8 339.0 608.9 338.9 609.0 338.8 609.1 338.4 609.2 338.1 609.3 338.0 609.4 338.0 609.5 337.9 609.6 337.9 609.7 337.8 609.7 337.8 609.8 338.0 609.9 338.3 610.0 338.5 610.1 338.6 610.2 338.9 610.3 339.0 610.4 339.0 610.5 339.1 610.6 339.1 610.6 339.0 610.7 338.9 610.8 338.8 610.9 338.8 611.0 338.9 611.1 338.9 611.2 338.9 611.3 338.9 611.4 338.9 611.5 339.0 611.5 338.8 611.6 338.2 611.7 337.9 611.8 337.4 611.9 337.4 612.0 337.5 612.1 338.1 612.2 338.8 612.3 339.2 612.4 339.6 612.4 339.6 612.5 339.5 612.6 339.2 612.7 338.8 612.8 338.6 612.9 338.3 613.0 337.9 613.1 338.0 613.2 338.0 613.3 338.3 613.3 338.4 613.4 338.7 613.5 338.9 613.6 339.0 613.7 339.1 613.8 338.9 613.9 338.8 614.0 338.8 614.1 338.7 614.2 338.6 614.2 338.5 614.3 338.3 614.4 338.4 614.5 338.4 614.6 338.4 614.7 338.3 614.8 338.1 614.9 338.2 615.0 338.2 615.1 338.2 615.1 338.2 615.2 338.3 615.3 338.4 615.4 338.6 615.5 338.8 615.6 338.9 615.7 339.1 615.8 339.2 615.9 339.1 616.0 338.9 616.0 338.7 616.1 338.6 616.2 338.5 616.3 338.3 616.4 338.3 616.5 338.2 616.6 337.9 616.7 337.6 616.8 337.5 616.9 337.6 616.9 337.7 617.0 337.7 617.1 338.0 617.2 338.3 617.3 338.6 617.4 338.7 617.5 338.5 617.6 338.4 617.7 338.3 617.8 338.1 617.8 337.9 617.9 337.8 618.0 337.8 618.1 337.9 618.2 338.1 618.3 338.3 618.4 338.4 618.5 338.5 618.6 338.6 618.7 338.8 618.7 338.6 618.8 338.5 618.9 338.5 619.0 338.8 619.1 339.2 619.2 339.1 619.3 338.9 619.4 338.8 619.5 338.5 619.6 338.1 619.6 338.0 619.7 337.9 619.8 338.0 619.9 338.3 620.0 338.8 620.1 338.9 620.2 339.1 620.3 339.0 620.4 339.1 620.5 339.3 620.5 339.3 620.6 339.2 620.7 339.0 620.8 338.6 620.9 338.2 621.0 337.9 621.1 337.6 621.2 337.7 621.3 337.9 621.4 338.1 621.4 338.4 621.5 338.6 621.6 339.0 621.7 339.0 621.8 339.0 621.9 339.1 622.0 339.1 622.1 338.9 622.2 338.8 622.3 338.8 622.3 338.7 622.4 338.9 622.5 339.0 622.6 339.0 622.7 339.0 622.8 338.9 622.9 338.8 623.0 338.7 623.1 338.4 623.2 338.2 623.2 338.0 623.3 337.9 623.4 337.9 623.5 338.0 623.6 337.9 623.7 337.7 623.8 337.7 623.9 338.0 624.0 338.2 624.1 338.4 624.1 338.8 624.2 339.2 624.3 339.5 624.4 339.6 624.5 339.5 624.6 339.1 624.7 338.9 624.8 338.7 624.9 338.3 625.0 338.1 625.0 338.0 625.1 337.8 625.2 337.9 625.3 338.1 625.4 338.2 625.5 338.6 625.6 338.8 625.7 338.7 625.8 338.8 625.9 339.0 625.9 339.3 626.0 339.4 626.1 339.3 626.2 339.2 626.3 339.2 626.4 339.2 626.5 339.0 626.6 338.8 626.7 338.7 626.8 338.8 626.8 338.8 626.9 338.8 627.0 338.8 627.1 338.7 627.2 338.5 627.3 338.5 627.4 338.4 627.5 338.1 627.6 337.7 627.7 337.5 627.7 337.7 627.8 338.0 627.9 338.0 628.0 337.9 628.1 338.1 628.2 338.0 628.3 338.1 628.4 338.2 628.5 338.4 628.6 338.6 628.6 338.8 628.7 338.8 628.8 339.0 628.9 339.1 629.0 339.2 629.1 339.2 629.2 339.1 629.3 339.2 629.4 339.1 629.5 338.8 629.5 338.5 629.6 338.4 629.7 338.3 629.8 338.2 629.9 338.3 630.0 338.5 630.1 338.7 630.2 338.8 630.3 339.0 630.4 339.4 630.4 339.4 630.5 339.3 630.6 338.9 630.7 338.3 630.8 337.6 630.9 337.2 631.0 336.9 631.1 336.9 631.2 337.1 631.3 337.4 631.3 337.7 631.4 338.1 631.5 338.4 631.6 338.7 631.7 339.2 631.8 339.5 631.9 339.5 632.0 339.5 632.1 339.5 632.2 339.1 632.2 338.8 632.3 338.6 632.4 338.3 632.5 338.0 632.6 337.7 632.7 337.5 632.8 337.6 632.9 337.6 633.0 337.7 633.1 337.8 633.1 338.2 633.2 338.7 633.3 339.3 633.4 339.7 633.5 339.9 633.6 340.0 633.7 339.6 633.8 339.3 633.9 338.7 634.0 338.3 634.0 338.1 634.1 337.8 634.2 337.8 634.3 338.1 634.4 338.6 634.5 338.9 634.6 339.2 634.7 339.4 634.8 339.3 634.9 339.1 634.9 338.9 635.0 338.5 635.1 338.0 635.2 337.5 635.3 337.2 635.4 337.1 635.5 337.2 635.6 337.4 635.7 337.6 635.8 337.9 635.8 338.3 635.9 338.6 636.0 339.0 636.1 339.2 636.2 339.4 636.3 339.7 636.4 339.7 636.5 339.7 636.6 339.7 636.7 339.6 636.7 339.1 636.8 338.7 636.9 338.2 637.0 338.0 637.1 337.9 637.2 338.0 637.3 338.4 637.4 338.5 637.5 338.6 637.6 338.5 637.6 338.1 637.7 337.9 637.8 338.0 637.9 338.3 638.0 338.3 638.1 338.3 638.2 338.3 638.3 338.3 638.4 338.3 638.5 338.7 638.5 339.0 638.6 339.2 638.7 339.3 638.8 339.1 638.9 338.7 639.0 338.5 639.1 338.3 639.2 338.1 639.3 338.0 639.4 337.9 639.4 337.8 639.5 337.7 639.6 337.6 639.7 337.6 639.8 338.1 639.9 338.3 640.0 338.3 640.1 338.2 640.2 338.1 640.3 338.0 640.3 337.7 640.4 337.9 640.5 338.0 640.6 338.1 640.7 338.1 640.8 338.1 640.9 338.4 641.0 338.7 641.1 338.8 641.2 338.9 641.2 339.0 641.3 338.9 641.4 338.8 641.5 338.6 641.6 338.3 641.7 338.1 641.8 338.0 641.9 338.3 642.0 338.4 642.1 338.2 642.1 337.9 642.2 337.6 642.3 337.5 642.4 337.7 642.5 337.9 642.6 338.2 642.7 338.3 642.8 338.7 642.9 339.1 643.0 339.1 643.0 338.7 643.1 338.4 643.2 338.3 643.3 338.2 643.4 338.3 643.5 338.5 643.6 338.8 643.7 339.1 643.8 339.5 643.9 339.5 643.9 339.8 644.0 339.6 644.1 338.9 644.2 338.2 644.3 337.4 644.4 337.0 644.5 336.8 644.6 336.8 644.7 337.1 644.8 337.7 644.8 338.2 644.9 338.9 645.0 339.3 645.1 339.6 645.2 339.7 645.3 339.3 645.4 339.1 645.5 338.6 645.6 338.2 645.7 337.7 645.7 337.3 645.8 337.2 645.9 337.2 646.0 337.4 646.1 337.6 646.2 338.0 646.3 338.3 646.4 338.4 646.5 338.7 646.6 338.9 646.6 338.9 646.7 338.8 646.8 338.8 646.9 338.8 647.0 338.6 647.1 338.5 647.2 338.5 647.3 338.6 647.4 338.6 647.5 338.5 647.5 338.4 647.6 338.4 647.7 338.4 647.8 338.7 647.9 338.9 648.0 339.0 648.1 338.8 648.2 338.6 648.3 338.5 648.4 338.4 648.4 338.3 648.5 338.1 648.6 338.2 648.7 338.4 648.8 338.4 648.9 338.6 649.0 338.7 649.1 338.8 649.2 338.8 649.3 338.9 649.3 338.9 649.4 339.1 649.5 339.4 649.6 339.4 649.7 339.3 649.8 339.0 649.9 338.6 650.0 338.2 650.1 337.9 650.2 337.9 650.2 338.1 650.3 338.3 650.4 338.7 650.5 338.7 650.6 338.8 650.7 338.7 650.8 338.4 650.9 338.2 651.0 338.1 651.1 338.2 651.1 338.3 651.2 338.5 651.3 338.7 651.4 338.7 651.5 338.9 651.6 338.9 651.7 339.0 651.8 339.0 651.9 339.1 652.0 339.1 652.0 339.1 652.1 338.8 652.2 338.4 652.3 338.0 652.4 337.8 652.5 337.6 652.6 337.6 652.7 337.8 652.8 338.2 652.9 338.5 652.9 338.9 653.0 339.0 653.1 338.9 653.2 338.6 653.3 338.4 653.4 338.2 653.5 337.8 653.6 337.7 653.7 337.7 653.8 337.7 653.8 337.9 653.9 338.1 654.0 338.3 654.1 338.5 654.2 338.7 654.3 338.8 654.4 338.6 654.5 338.5 654.6 338.3 654.7 337.8 654.7 337.6 654.8 337.6 654.9 337.9 655.0 338.2 655.1 338.5 655.2 338.7 655.3 338.7 655.4 338.8 655.5 338.6 655.6 338.7 655.6 338.8 655.7 338.8 655.8 338.6 655.9 338.5 656.0 338.7 656.1 338.8 656.2 338.8 656.3 338.8 656.4 338.8 656.5 338.8 656.5 338.6 656.6 338.4 656.7 338.2 656.8 338.3 656.9 338.1 657.0 338.2 657.1 338.2 657.2 338.1 657.3 338.2 657.4 338.1 657.4 338.2 657.5 338.5 657.6 338.8 657.7 338.8 657.8 339.0 657.9 339.2 658.0 339.3 658.1 339.3 658.2 339.1 658.3 338.8 658.3 338.4 658.4 338.0 658.5 337.9 658.6 337.8 658.7 337.7 658.8 337.8 658.9 338.0 659.0 338.1 659.1 338.3 659.2 338.8 659.2 339.3 659.3 339.8 659.4 340.0 659.5 339.9 659.6 339.6 659.7 339.4 659.8 339.5 659.9 339.5 660.0 339.4 660.1 339.4 660.1 339.2 660.2 338.9 660.3 338.8 660.4 338.7 660.5 338.5 660.6 338.1 660.7 338.0 660.8 337.9 660.9 338.0 661.0 338.1 661.0 338.6 661.1 338.8 661.2 339.1 661.3 339.3 661.4 339.3 661.5 339.1 661.6 339.0 661.7 338.8 661.8 338.8 661.9 338.8 661.9 338.9 662.0 338.7 662.1 338.5 662.2 338.3 662.3 338.1 662.4 337.9 662.5 337.9 662.6 338.1 662.7 338.1 662.7 338.1 662.8 338.2 662.9 338.3 663.0 338.3 663.1 338.3 663.2 338.3 663.3 338.1 663.4 337.9 663.5 337.7 663.6 337.5 663.6 337.5 663.7 337.6 663.8 338.0 663.9 338.5 664.0 339.0 664.1 339.6 664.2 339.8 664.3 340.0 664.4 340.2 664.5 340.2 664.5 339.5 664.6 339.0 664.7 338.5 664.8 338.2 664.9 338.1 665.0 337.9 665.1 337.8 665.2 337.8 665.3 338.0 665.4 338.4 665.4 338.5 665.5 338.8 665.6 339.0 665.7 339.3 665.8 339.3 665.9 339.4 666.0 339.4 666.1 339.1 666.2 338.6 666.3 338.1 666.3 337.7 666.4 337.6 666.5 337.5 666.6 337.3 666.7 337.1 666.8 337.2 666.9 337.7 667.0 338.1 667.1 338.5 667.2 338.9 667.2 339.4 667.3 339.5 667.4 339.3 667.5 339.1 667.6 338.7 667.7 338.4 667.8 338.3 667.9 338.4 668.0 338.5 668.1 338.3 668.1 338.2 668.2 338.0 668.3 337.6 668.4 337.2 668.5 336.9 668.6 336.7 668.7 336.8 668.8 337.2 668.9 337.6 669.0 337.8 669.0 338.0 669.1 338.5 669.2 338.9 669.3 339.3 669.4 339.5 669.5 339.5 669.6 339.3 669.7 339.2 669.8 338.9 669.9 338.7 669.9 338.4 670.0 338.4 670.1 338.3 670.2 338.3 670.3 338.4 670.4 338.3 670.5 338.4 670.6 338.3 670.7 338.4 670.8 338.3 670.8 338.3 670.9 338.2 671.0 338.0 671.1 337.9 671.2 337.8 671.3 337.8 671.4 337.7 671.5 338.0 671.6 338.5 671.7 338.8 671.7 339.4 671.8 339.8 671.9 340.3 672.0 340.7 672.1 340.8 672.2 340.3 672.3 339.5 672.4 338.7 672.5 338.5 672.6 338.4 672.6 338.2 672.7 338.0 672.8 338.0 672.9 337.9 673.0 337.6 673.1 337.8 673.2 337.9 673.3 337.9 673.4 338.1 673.5 338.3 673.5 338.5 673.6 338.5 673.7 338.6 673.8 338.3 673.9 338.0 674.0 337.9 674.1 337.7 674.2 337.8 674.3 338.1 674.4 338.5 674.4 338.5 674.5 338.9 674.6 339.8 674.7 340.2 674.8 339.9 674.9 339.4 675.0 338.8 675.1 338.2 675.2 337.4 675.3 336.8 675.3 336.7 675.4 337.1 675.5 337.5 675.6 338.2 675.7 338.8 675.8 339.1 675.9 339.4 676.0 339.5 676.1 339.1 676.2 338.8 676.2 338.5 676.3 338.1 676.4 337.6 676.5 337.2 676.6 336.8 676.7 336.9 676.8 337.6 676.9 338.6 677.0 339.5 677.1 340.0 677.1 340.1 677.2 339.7 677.3 338.9 677.4 338.3 677.5 337.7 677.6 337.1 677.7 336.7 677.8 336.5 677.9 336.9 678.0 337.6 678.0 338.4 678.1 338.9 678.2 339.2 678.3 339.4 678.4 339.6 678.5 339.8 678.6 339.8 678.7 339.8 678.8 339.6 678.9 339.3 678.9 338.8 679.0 338.0 679.1 337.3 679.2 337.2 679.3 337.4 679.4 337.7 679.5 338.1 679.6 338.4 679.7 338.7 679.8 338.8 679.8 338.8 679.9 338.9 680.0 338.9 680.1 338.7 680.2 338.5 680.3 338.4 680.4 338.4 680.5 338.4 680.6 338.1 680.7 338.2 680.7 338.3 680.8 338.4 680.9 338.6 681.0 338.7 681.1 339.0 681.2 339.0 681.3 338.7 681.4 338.6 681.5 338.3 681.6 338.1 681.6 338.2 681.7 338.5 681.8 339.1 681.9 339.4 682.0 339.9 682.1 340.0 682.2 340.0 682.3 339.8 682.4 339.4 682.5 338.6 682.5 338.1 682.6 337.7 682.7 337.2 682.8 337.0 682.9 337.0 683.0 337.3 683.1 337.6 683.2 337.9 683.3 338.2 683.4 338.7 683.4 339.0 683.5 338.9 683.6 339.0 683.7 338.7 683.8 338.3 683.9 338.1 684.0 338.2 684.1 338.5 684.2 338.6 684.3 338.8 684.3 339.0 684.4 339.1 684.5 339.2 684.6 339.3 684.7 339.3 684.8 339.1 684.9 338.9 685.0 339.1 685.1 339.4 685.2 339.4 685.2 339.3 685.3 339.3 685.4 338.9 685.5 338.8 685.6 338.5 685.7 338.3 685.8 338.2 685.9 338.4 686.0 338.8 686.1 339.1 686.1 339.2 686.2 339.2 686.3 339.0 686.4 339.1 686.5 339.4 686.6 339.2 686.7 339.2 686.8 339.2 686.9 339.1 687.0 338.9 687.0 338.4 687.1 338.3 687.2 338.1 687.3 338.2 687.4 338.5 687.5 338.7 687.6 338.8 687.7 338.8 687.8 338.6 687.9 338.6 687.9 338.5 688.0 338.5 688.1 338.9 688.2 339.2 688.3 339.3 688.4 339.2 688.5 338.7 688.6 337.9 688.7 337.4 688.8 336.9 688.8 336.7 688.9 336.6 689.0 336.9 689.1 337.2 689.2 337.6 689.3 338.3 689.4 339.0 689.5 339.8 689.6 340.6 689.7 341.0 689.7 341.0 689.8 340.5 689.9 339.8 690.0 338.9 690.1 338.1 690.2 337.4 690.3 336.9 690.4 336.8 690.5 337.1 690.6 337.7 690.6 338.6 690.7 339.7 690.8 340.3 690.9 340.3 691.0 340.4 691.1 340.4 691.2 340.3 691.3 339.5 691.4 338.7 691.5 337.8 691.5 337.2 691.6 336.8 691.7 336.9 691.8 337.3 691.9 337.5 692.0 337.8 692.1 337.7 692.2 337.3 692.3 337.2 692.4 337.5 692.4 338.3 692.5 338.7 692.6 339.2 692.7 339.6 692.8 339.5 692.9 339.4 693.0 339.1 693.1 338.7 693.2 338.6 693.3 338.9 693.3 338.8 693.4 338.9 693.5 338.8 693.6 338.6 693.7 338.6 693.8 338.2 693.9 338.4 694.0 338.2 694.1 338.0 694.2 338.4 694.2 338.9 694.3 338.8 694.4 338.4 694.5 338.0 694.6 337.8 694.7 337.1 694.8 336.6 694.9 335.7 695.0 335.1 695.1 335.2 695.1 335.5 695.2 336.2 695.3 337.5 695.4 338.2 695.5 338.7 695.6 339.1 695.7 339.3 695.8 339.7 695.9 340.0 696.0 339.6 696.0 338.9 696.1 338.4 696.2 338.0 696.3 338.4 696.4 338.8 696.5 338.8 696.6 339.1 696.7 338.9 696.8 338.1 696.9 338.0 696.9 338.0 697.0 338.1 697.1 337.9 697.2 337.5 697.3 337.3 697.4 338.0 697.5 339.2 697.6 339.4 697.7 339.5 697.8 339.1 697.8 338.0 697.9 337.3 698.0 336.9 698.1 337.0 698.2 337.5 698.3 338.2 698.4 338.7 698.5 339.0 698.6 339.3 698.7 339.8 698.7 339.8 698.8 339.7 698.9 339.9 699.0 340.2 699.1 339.6 699.2 338.7 699.3 337.5 699.4 335.9 699.5 334.1 699.6 333.1 699.6 333.0 699.7 333.0 699.8 334.3 699.9 335.9 700.0 338.1 700.1 340.0 700.2 341.7 700.3 343.3 700.4 343.3 700.5 343.5 700.5 343.5 700.6 343.0 700.7 341.5 700.8 339.9 700.9 338.2 701.0 336.2 701.1 335.1 701.2 334.6 701.3 335.5 701.4 337.8 701.4 339.3 701.5 340.7 701.6 341.4 701.7 341.5 701.8 342.1 701.9 341.6 702.0 341.7 702.1 342.0 702.2 341.7 702.3 340.1 702.3 338.3 702.4 337.1 702.5 336.4 702.6 336.5 702.7 336.9 702.8 337.1 702.9 337.9 703.0 337.7 703.1 337.3 703.2 337.8 703.2 338.8 703.3 339.1 703.4 339.2 703.5 340.1 703.6 341.2 703.7 342.2 703.8 343.3 703.9 343.2 704.0 342.0 704.1 340.7 704.1 339.3 704.2 337.5 704.3 336.3 704.4 335.3 704.5 335.2 704.6 335.6 704.7 335.1 704.8 334.5 704.9 333.7 705.0 333.7 705.0 334.0 705.1 335.9 705.2 338.2 705.3 340.3 705.4 342.2 705.5 344.0 705.6 345.0 705.7 344.3 705.8 342.9 705.9 341.9 705.9 340.7 706.0 340.2 706.1 340.0 706.2 340.4 706.3 339.7 706.4 339.9 706.5 340.3 706.6 340.4 706.7 340.7 706.8 339.5 706.8 338.1 706.9 337.2 707.0 336.5 707.1 336.2 707.2 335.7 707.3 336.6 707.4 337.1 707.5 338.0 707.6 338.7 707.7 339.0 707.7 338.6 707.8 338.2 707.9 337.3 708.0 337.5 708.1 337.4 708.2 337.6 708.3 338.3 708.4 339.3 708.5 340.1 708.6 341.3 708.6 342.9 708.7 344.6 708.8 344.9 708.9 343.6 709.0 342.3 709.1 339.8 709.2 337.7 709.3 336.7 709.4 337.0 709.5 337.9 709.5 339.5 709.6 340.2 709.7 339.8 709.8 338.8 709.9 337.8 710.0 336.3 710.1 336.0 710.2 338.5 710.3 339.8 710.4 339.8 710.4 339.9 710.5 339.5 710.6 339.3 710.7 340.5 710.8 340.5 710.9 341.5 711.0 340.4 711.1 339.2 711.2 338.9 711.3 339.0 711.3 338.7 711.4 337.9 711.5 337.7 711.6 337.5 711.7 337.6 711.8 338.1 711.9 339.1 712.0 339.5 712.1 339.1 712.2 337.5 712.2 335.2 712.3 334.1 712.4 335.7 712.5 338.5 712.6 341.8 712.7 344.8 712.8 346.9 712.9 346.5 713.0 344.1 713.1 339.9 713.1 336.0 713.2 332.2 713.3 330.1 713.4 328.9 713.5 329.8 713.6 331.7 713.7 335.0 713.8 338.8 713.9 341.6 714.0 344.3 714.0 345.0 714.1 345.0 714.2 344.5 714.3 343.1 714.4 343.1 714.5 341.9 714.6 340.2 714.7 338.2 714.8 335.8 714.9 331.8 714.9 330.0 715.0 328.3 715.1 330.1 715.2 331.6 715.3 333.5 715.4 334.9 715.5 335.0 715.6 332.6 715.7 329.8 715.8 329.7 715.8 332.2 715.9 334.0 716.0 335.5 716.1 336.6 716.2 339.4 716.3 341.8 716.4 343.7 716.5 346.6 716.6 347.2 716.7 346.2 716.7 347.0 716.8 346.9 716.9 342.9 717.0 337.1 717.1 331.4 717.2 325.5 717.3 323.2 717.4 320.4 717.5 319.1 717.6 319.1 717.6 323.3 717.7 329.9 717.8 335.0 717.9 338.3 718.0 339.0 718.1 337.3 718.2 336.6 718.3 336.1 718.4 333.2 718.5 330.4 718.5 326.7 718.6 323.4 718.7 320.8 718.8 319.5 718.9 319.1 719.0 320.4 719.1 323.1 719.2 324.7 719.3 324.9 719.4 325.2 719.4 328.3 719.5 333.2 719.6 337.4 719.7 340.6 719.8 343.6 719.9 348.6 720.0 347.8 720.1 349.8 720.2 347.9 720.3 343.5 720.3 337.0 720.4 334.8 720.5 331.5 720.6 330.5 720.7 333.3 720.8 338.0 720.9 340.7 721.0 342.9 721.1 344.0 721.2 346.4 721.2 347.3 721.3 349.1 721.4 348.7 721.5 350.0 721.6 347.6 721.7 344.7 721.8 341.9 721.9 339.6 722.0 338.4 722.1 337.1 722.1 336.5 722.2 333.9 722.3 334.7 722.4 334.4 722.5 337.1 722.6 339.5 722.7 340.6 722.8 341.7 722.9 342.2 723.0 343.7 723.0 345.0 723.1 345.7 723.2 344.8 723.3 344.1 723.4 342.0 723.5 342.5 723.6 342.7 723.7 340.9 723.8 339.3 723.9 337.4 723.9 335.2 724.0 333.5 724.1 334.8 724.2 337.0 724.3 338.4 724.4 338.3 724.5 339.0 724.6 338.2 724.7 340.4 724.8 338.0 724.8 335.8 724.9 335.6 725.0 334.8 725.1 338.1 725.2 343.1 725.3 345.3 725.4 345.5 725.5 343.5 725.6 341.1 725.7 338.3 725.7 333.4 725.8 333.7 725.9 333.5 726.0 333.3 726.1 334.0 726.2 335.9 726.3 336.4 726.4 333.5 726.5 330.8 726.6 329.3 726.6 326.8 726.7 325.9 726.8 320.5 726.9 318.4 727.0 316.2 727.1 318.5 727.2 323.5 727.3 330.7 727.4 337.7 727.5 343.2 727.5 346.2 727.6 347.9 727.7 345.8 727.8 339.3 727.9 333.2 728.0 329.9 728.1 326.1 728.2 323.7 728.3 323.5 728.4 322.5 728.4 322.5 728.5 320.9 728.6 322.4 728.7 327.8 728.8 337.2 728.9 341.3 729.0 345.0 729.1 348.6 729.2 346.6 729.3 342.1 729.3 339.2 729.4 337.1 729.5 338.4 729.6 340.5 729.7 343.0 729.8 344.6 729.9 344.2 730.0 344.2 730.1 341.3 730.2 335.9 730.2 333.9 730.3 336.7 730.4 339.8 730.5 345.6 730.6 354.4 730.7 359.1 730.8 360.1 730.9 359.6 731.0 356.8 731.1 354.2 731.1 349.3 731.2 348.8 731.3 346.6 731.4 345.5 731.5 345.3 731.6 344.6 731.7 346.7 731.8 348.1 731.9 347.3 732.0 345.1 732.0 344.0 732.1 340.9 732.2 344.3 732.3 345.8 732.4 342.3 732.5 342.9 732.6 341.9 732.7 344.8 732.8 343.1 732.9 342.2 732.9 337.7 733.0 331.0 733.1 324.4 733.2 323.7 733.3 324.1 733.4 327.1 733.5 332.1 733.6 338.3 733.7 345.3 733.8 350.5 733.8 353.4 733.9 350.8 734.0 346.3 734.1 340.0 734.2 337.3 734.3 332.2 734.4 328.9 734.5 326.3 734.6 327.8 734.7 327.3 734.7 324.8 734.8 327.7 734.9 330.4 735.0 333.8 735.1 337.0 735.2 343.6 735.3 350.7 735.4 350.8 735.5 348.9 735.6 340.9 735.6 332.6 735.7 327.0 735.8 324.8 735.9 324.3 736.0 324.2 736.1 325.7 736.2 327.4 736.3 328.1 736.4 333.0 736.5 339.0 736.5 345.1 736.6 349.2 736.7 347.7 736.8 346.2 736.9 342.8 737.0 336.3 737.1 335.8 737.2 337.0 737.3 337.1 737.4 337.6 737.4 338.7 737.5 341.3 737.6 343.5 737.7 345.7 737.8 346.7 737.9 346.4 738.0 343.4 738.1 339.8 738.2 334.6 738.3 332.0 738.3 328.3 738.4 326.5 738.5 323.4 738.6 321.7 738.7 323.0 738.8 326.1 738.9 325.0 739.0 329.3 739.1 334.8 739.2 339.2 739.2 340.5 739.3 340.5 739.4 340.2 739.5 341.3 739.6 342.5 739.7 338.9 739.8 339.2 739.9 341.5 740.0 345.4 740.1 348.1 740.1 348.4 740.2 345.6 740.3 343.1 740.4 344.4 740.5 347.6 740.6 349.4 740.7 353.6 740.8 353.9 740.9 353.4 741.0 354.0 741.0 353.0 741.1 350.2 741.2 345.8 741.3 338.5 741.4 330.1 741.5 326.2 741.6 325.2 741.7 328.6 741.8 331.2 741.9 334.5 741.9 337.4 742.0 339.4 742.1 340.5 742.2 344.7 742.3 346.0 742.4 345.7 742.5 343.7 742.6 339.3 742.7 337.1 742.8 339.5 742.8 340.9 742.9 343.1 743.0 345.2 743.1 346.3 743.2 345.9 743.3 343.7 743.4 341.2 743.5 340.5 743.6 337.4 743.7 334.8 743.7 334.2 743.8 334.6 743.9 333.9 744.0 334.9 744.1 338.8 744.2 339.8 744.3 341.1 744.4 341.9 744.5 343.8 744.6 346.9 744.6 349.5 744.7 351.5 744.8 349.8 744.9 347.3 745.0 342.2 745.1 335.4 745.2 330.6 745.3 332.4 745.4 335.4 745.5 337.1 745.5 339.9 745.6 339.8 745.7 339.0 745.8 337.3 745.9 335.5 746.0 338.9 746.1 343.7 746.2 345.0 746.3 342.6 746.4 341.8 746.4 340.1 746.5 337.6 746.6 336.3 746.7 336.9 746.8 339.3 746.9 340.9 747.0 342.1 747.1 340.6 747.2 337.2 747.3 333.8 747.3 331.9 747.4 333.9 747.5 336.1 747.6 337.1 747.7 338.1 747.8 339.7 747.9 339.8 748.0 338.5 748.1 334.3 748.2 330.9 748.2 329.2 748.3 330.5 748.4 333.3 748.5 339.9 748.6 343.4 748.7 345.4 748.8 345.0 748.9 345.9 749.0 346.9 749.1 346.6 749.1 345.1 749.2 343.8 749.3 345.7 749.4 347.6 749.5 349.1 749.6 350.7 749.7 350.0 749.8 346.6 749.9 344.5 750.0 345.0 750.0 345.5 750.1 344.4 750.2 341.5 750.3 336.1 750.4 332.4 750.5 332.7 750.6 332.2 750.7 332.5 750.8 333.0 750.9 334.5 750.9 340.5 751.0 344.1 751.1 347.8 751.2 352.1 751.3 352.9 751.4 351.4 751.5 346.8 751.6 341.8 751.7 340.1 751.8 335.6 751.8 329.9 751.9 327.8 752.0 326.2 752.1 325.6 752.2 331.3 752.3 336.3 752.4 340.2 752.5 345.9 752.6 348.7 752.7 348.9 752.7 348.7 752.8 352.1 752.9 350.2 753.0 347.3 753.1 341.7 753.2 337.4 753.3 331.3 753.4 327.5 753.5 327.5 753.5 330.8 753.6 333.5 753.7 331.8 753.8 332.6 753.9 333.5 754.0 333.7 754.1 336.8 754.2 338.7 754.3 336.7 754.4 335.5 754.4 337.6 754.5 341.0 754.6 344.4 754.7 348.4 754.8 351.3 754.9 351.2 755.0 353.9 755.1 354.7 755.2 352.3 755.3 347.1 755.3 343.7 755.4 341.5 755.5 338.2 755.6 336.9 755.7 332.5 755.8 329.1 755.9 328.5 756.0 333.9 756.1 341.2 756.2 349.0 756.2 356.2 756.3 360.4 756.4 360.5 756.5 363.8 756.6 362.9 756.7 354.8 756.8 347.9 756.9 339.6 757.0 332.8 757.1 329.8 757.1 327.1 757.2 325.7 757.3 323.8 757.4 324.1 757.5 326.3 757.6 330.1 757.7 331.7 757.8 336.0 757.9 339.1 758.0 343.8 758.0 346.7 758.1 349.5 758.2 350.2 758.3 348.7 758.4 344.1 758.5 341.5 758.6 337.3 758.7 333.6 758.8 331.6 758.9 329.6 758.9 327.3 759.0 326.8 759.1 322.7 759.2 321.7 759.3 319.1 759.4 320.3 759.5 326.1 759.6 333.5 759.7 338.0 759.8 336.9 759.8 337.8 759.9 336.9 760.0 339.5 760.1 338.4 760.2 334.4 760.3 331.8 760.4 328.3 760.5 326.9 760.6 328.3 760.7 330.1 760.7 334.2 760.8 336.7 760.9 334.8 761.0 334.3 761.1 334.5 761.2 333.4 761.3 332.8 761.4 335.7 761.5 341.8 761.6 348.2 761.6 351.1 761.7 351.2 761.8 355.9 761.9 358.2 762.0 359.5 762.1 355.9 762.2 349.0 762.3 344.5 762.4 336.9 762.5 329.5 762.5 328.1 762.6 324.9 762.7 321.0 762.8 323.6 762.9 331.4 763.0 335.7 763.1 338.5 763.2 338.8 763.3 340.0 763.4 341.3 763.4 339.7 763.5 340.2 763.6 345.5 763.7 351.6 763.8 355.4 763.9 354.8 764.0 351.7 764.1 348.5 764.2 341.4 764.3 332.6 764.3 326.6 764.4 320.9 764.5 321.7 764.6 326.2 764.7 330.5 764.8 336.7 764.9 338.3 765.0 339.6 765.1 340.2 765.2 339.4 765.2 339.2 765.3 334.7 765.4 329.1 765.5 319.5 765.6 316.4 765.7 316.0 765.8 318.8 765.9 324.2 766.0 333.9 766.1 342.6 766.1 346.6 766.2 351.9 766.3 352.0 766.4 349.0 766.5 341.6 766.6 334.1 766.7 328.7 766.8 326.3 766.9 326.1 767.0 323.8 767.0 321.1 767.1 321.1 767.2 322.0 767.3 324.5 767.4 327.8 767.5 331.7 767.6 341.1 767.7 348.3 767.8 354.5 767.9 359.6 767.9 360.8 768.0 360.2 768.1 358.2 768.2 352.8 768.3 350.0 768.4 348.2 768.5 348.5 768.6 347.5 768.7 344.1 768.8 340.9 768.8 338.4 768.9 338.1 769.0 335.4 769.1 332.5 769.2 333.4 769.3 336.7 769.4 339.1 769.5 344.7 769.6 348.9 769.7 352.3 769.7 355.0 769.8 354.4 769.9 349.6 770.0 344.1 770.1 338.5 770.2 337.2 770.3 337.3 770.4 336.0 770.5 335.7 770.6 336.9 770.6 339.2 770.7 340.3 770.8 340.9 770.9 338.7 771.0 336.2 771.1 335.3 771.2 334.9 771.3 336.2 771.4 333.3 771.5 332.7 771.5 334.0 771.6 334.8 771.7 335.5 771.8 336.3 771.9 337.9 772.0 338.3 772.1 334.9 772.2 332.4 772.3 332.4 772.4 332.1 772.4 333.7 772.5 334.3 772.6 337.8 772.7 343.1 772.8 342.3 772.9 339.4 773.0 334.9 773.1 331.2 773.2 329.1 773.3 328.6 773.3 328.7 773.4 330.1 773.5 331.4 773.6 335.7 773.7 339.7 773.8 342.0 773.9 342.5 774.0 343.3 774.1 344.5 774.2 343.8 774.2 344.9 774.3 346.2 774.4 347.2 774.5 347.3 774.6 345.1 774.7 343.6 774.8 342.8 774.9 340.4 775.0 338.3 775.1 335.1 775.1 333.2 775.2 332.0 775.3 328.3 775.4 325.9 775.5 326.8 775.6 329.1 775.7 331.0 775.8 334.3 775.9 339.4 776.0 343.8 776.0 347.0 776.1 348.0 776.2 347.3 776.3 346.0 776.4 343.0 776.5 338.6 776.6 335.8 776.7 332.9 776.8 330.1 776.9 328.5 776.9 327.9 777.0 326.4 777.1 327.2 777.2 332.9 777.3 336.7 777.4 342.7 777.5 348.1 777.6 353.3 777.7 354.8 777.8 354.0 777.8 350.8 777.9 345.3 778.0 339.2 778.1 335.1 778.2 332.7 778.3 332.0 778.4 332.5 778.5 334.0 778.6 335.1 778.7 338.1 778.7 340.9 778.8 341.8 778.9 338.1 779.0 335.1 779.1 332.2 779.2 330.2 779.3 329.9 779.4 332.2 779.5 333.3 779.6 335.6 779.6 338.5 779.7 339.0 779.8 341.7 779.9 343.5 780.0 342.8 780.1 341.9 780.2 341.2 780.3 342.5 780.4 342.7 780.5 342.9 780.5 343.9 780.6 342.1 780.7 339.1 780.8 336.3 780.9 336.1 781.0 335.6 781.1 334.5 781.2 336.9 781.3 339.4 781.4 340.4 781.4 343.1 781.5 342.3 781.6 340.7 781.7 340.4 781.8 339.5 781.9 336.5 782.0 333.4 782.1 330.3 782.2 331.0 782.3 332.0 782.3 334.5 782.4 337.6 782.5 340.3 782.6 342.7 782.7 344.1 782.8 344.7 782.9 342.0 783.0 338.1 783.1 334.6 783.2 331.8 783.2 331.1 783.3 331.7 783.4 332.3 783.5 331.7 783.6 330.2 783.7 331.7 783.8 333.7 783.9 335.5 784.0 337.0 784.1 339.4 784.1 342.5 784.2 342.7 784.3 342.1 784.4 340.8 784.5 340.2 784.6 338.7 784.7 337.5 784.8 336.6 784.9 336.3 785.0 334.4 785.0 333.4 785.1 332.8 785.2 331.8 785.3 331.9 785.4 332.6 785.5 334.6 785.6 336.5 785.7 339.1 785.8 339.8 785.9 341.1 785.9 341.6 786.0 341.4 786.1 340.8 786.2 339.9 786.3 340.9 786.4 343.0 786.5 343.1 786.6 343.1 786.7 344.5 786.8 343.7 786.8 342.7 786.9 340.5 787.0 337.6 787.1 336.5 787.2 334.3 787.3 333.9 787.4 332.9 787.5 332.9 787.6 333.3 787.7 334.0 787.7 334.8 787.8 336.2 787.9 338.1 788.0 339.9 788.1 340.8 788.2 340.6 788.3 339.6 788.4 338.6 788.5 338.8 788.6 337.7 788.6 339.7 788.7 340.5 788.8 340.6 788.9 340.7 789.0 339.9 789.1 339.4 789.2 339.9 789.3 339.8 789.4 339.5 789.5 338.2 789.5 338.3 789.6 338.6 789.7 339.1 789.8 341.3 789.9 343.4 790.0 341.1 790.1 339.1 790.2 337.4 790.3 339.1 790.4 338.8 790.4 339.1 790.5 338.4 790.6 337.9 790.7 338.1 790.8 336.6 790.9 335.9 791.0 336.3 791.1 336.7 791.2 336.9 791.3 336.9 791.3 336.9 791.4 334.8 791.5 335.1 791.6 335.0 791.7 335.1 791.8 337.1 791.9 338.1 792.0 339.3 792.1 339.1 792.2 339.4 792.2 337.8 792.3 337.2 792.4 338.4 792.5 338.8 792.6 340.3 792.7 341.7 792.8 343.3 792.9 342.7 793.0 342.1 793.1 340.3 793.1 338.8 793.2 336.8 793.3 335.5 793.4 334.9 793.5 335.8 793.6 336.6 793.7 338.7 793.8 340.1 793.9 339.4 794.0 338.4 794.0 338.2 794.1 337.4 794.2 338.9 794.3 339.0 794.4 339.0 794.5 338.5 794.6 339.8 794.7 341.6 794.8 343.8 794.9 343.6 794.9 340.5 795.0 339.4 795.1 339.2 795.2 338.7 795.3 339.4 795.4 341.0 795.5 342.1 795.6 341.9 795.7 340.4 795.8 337.7 795.8 335.1 795.9 334.8 796.0 334.7 796.1 337.1 796.2 338.4 796.3 341.6 796.4 341.9 796.5 338.9 796.6 336.1 796.7 333.5 796.7 331.3 796.8 331.2 796.9 331.7 797.0 331.8 797.1 332.6 797.2 333.2 797.3 333.5 797.4 335.3 797.5 337.9 797.6 340.5 797.6 342.6 797.7 343.7 797.8 344.6 797.9 344.4 798.0 341.6 798.1 338.8 798.2 334.8 798.3 331.2 798.4 327.6 798.5 326.8 798.5 327.1 798.6 327.7 798.7 329.3 798.8 332.6 798.9 336.6 799.0 340.6 799.1 343.7 799.2 345.6 799.3 346.0 799.4 343.4 799.4 340.2 799.5 336.7 799.6 334.5 799.7 335.0 799.8 335.4 799.9 335.0 800.0 335.6 800.1 336.8 800.2 336.3 800.3 333.0 800.3 332.5 800.4 331.2 800.5 330.1 800.6 330.7 800.7 332.9 800.8 335.9 800.9 339.4 801.0 342.3 801.1 343.2 801.2 343.4 801.2 344.2 801.3 346.2 801.4 347.4 801.5 347.9 801.6 347.8 801.7 346.7 801.8 345.2 801.9 340.9 802.0 339.2 802.1 336.2 802.1 333.9 802.2 331.0 802.3 329.2 802.4 329.4 802.5 332.2 802.6 334.9 802.7 338.1 802.8 341.3 802.9 344.0 803.0 346.9 803.0 348.9 803.1 349.3 803.2 348.5 803.3 348.4 803.4 346.9 803.5 342.0 803.6 337.1 803.7 332.5 803.8 331.0 803.9 330.8 803.9 331.2 804.0 329.7 804.1 328.1 804.2 326.7 804.3 327.4 804.4 330.2 804.5 333.3 804.6 336.3 804.7 339.5 804.8 342.5 804.8 341.8 804.9 339.3 805.0 337.4 805.1 337.2 805.2 335.4 805.3 334.3 805.4 334.7 805.5 336.1 805.6 336.8 805.7 336.4 805.7 337.6 805.8 339.7 805.9 341.4 806.0 342.0 806.1 341.2 806.2 339.2 806.3 337.0 806.4 336.3 806.5 335.4 806.6 336.0 806.6 335.9 806.7 335.9 806.8 336.1 806.9 334.8 807.0 334.7 807.1 334.8 807.2 334.6 807.3 334.4 807.4 335.4 807.5 335.9 807.5 336.3 807.6 336.4 807.7 336.8 807.8 337.4 807.9 338.9 808.0 340.8 808.1 342.4 808.2 342.8 808.3 341.5 808.4 339.4 808.4 338.1 808.5 337.1 808.6 335.3 808.7 335.1 808.8 335.6 808.9 337.0 809.0 337.4 809.1 336.0 809.2 336.0 809.3 338.7 809.3 340.1 809.4 341.0 809.5 342.8 809.6 342.5 809.7 339.6 809.8 337.8 809.9 335.6 810.0 333.5 810.1 332.5 810.2 333.4 810.2 333.8 810.3 334.3 810.4 335.5 810.5 337.3 810.6 340.9 810.7 343.1 810.8 344.7 810.9 343.7 811.0 342.8 811.1 344.0 811.1 343.7 811.2 342.3 811.3 342.2 811.4 340.9 811.5 341.4 811.6 340.3 811.7 338.2 811.8 336.2 811.9 334.4 812.0 334.2 812.0 334.8 812.1 334.2 812.2 334.1 812.3 334.7 812.4 334.2 812.5 334.2 812.6 336.0 812.7 338.5 812.8 339.6 812.9 339.0 812.9 338.7 813.0 338.8 813.1 337.4 813.2 336.6 813.3 335.9 813.4 336.4 813.5 336.6 813.6 337.1 813.7 338.1 813.8 338.0 813.8 337.7 813.9 338.7 814.0 339.4 814.1 342.1 814.2 343.6 814.3 344.1 814.4 344.4 814.5 342.9 814.6 341.2 814.7 338.9 814.7 336.8 814.8 335.0 814.9 333.9 815.0 331.4 815.1 328.8 815.2 328.0 815.3 328.4 815.4 328.5 815.5 330.5 815.6 333.6 815.6 337.3 815.7 341.3 815.8 343.3 815.9 345.9 816.0 345.7 816.1 346.1 816.2 346.4 816.3 343.4 816.4 341.9 816.5 341.1 816.5 340.6 816.6 341.1 816.7 339.8 816.8 338.1 816.9 336.1 817.0 334.9 817.1 335.4 817.2 337.0 817.3 338.4 817.4 341.1 817.4 342.1 817.5 342.6 817.6 343.5 817.7 343.6 817.8 341.6 817.9 339.1 818.0 337.5 818.1 337.4 818.2 338.4 818.3 340.3 818.3 342.4 818.4 342.1 818.5 341.5 818.6 340.9 818.7 339.6 818.8 339.0 818.9 338.2 819.0 338.2 819.1 337.9 819.2 337.1 819.2 336.0 819.3 337.0 819.4 339.0 819.5 342.0 819.6 345.1 819.7 347.4 819.8 347.4 819.9 346.6 820.0 345.0 820.1 343.0 820.1 340.0 820.2 338.1 820.3 336.6 820.4 335.1 820.5 336.3 820.6 337.1 820.7 337.9 820.8 337.6 820.9 337.5 821.0 337.1 821.0 337.9 821.1 339.1 821.2 339.4 821.3 340.3 821.4 341.7 821.5 342.9 821.6 342.1 821.7 340.5 821.8 337.9 821.9 334.0 821.9 330.9 822.0 329.1 822.1 329.3 822.2 329.8 822.3 331.2 822.4 333.0 822.5 333.9 822.6 334.8 822.7 336.1 822.8 337.8 822.8 338.7 822.9 339.5 823.0 339.3 823.1 339.6 823.2 340.1 823.3 339.9 823.4 339.2 823.5 338.3 823.6 336.7 823.7 335.6 823.7 335.1 823.8 334.6 823.9 336.3 824.0 337.4 824.1 339.8 824.2 340.9 824.3 340.0 824.4 339.0 824.5 338.6 824.6 337.1 824.6 336.6 824.7 336.8 824.8 336.3 824.9 336.3 825.0 335.6 825.1 334.9 825.2 333.4 825.3 333.0 825.4 333.3 825.5 334.7 825.5 337.1 825.6 337.8 825.7 337.7 825.8 338.0 825.9 338.3 826.0 339.1 826.1 339.8 826.2 342.7 826.3 345.6 826.4 345.8 826.4 345.3 826.5 345.3 826.6 345.0 826.7 342.5 826.8 338.7 826.9 336.2 827.0 334.5 827.1 334.0 827.2 333.7 827.3 334.6 827.3 335.4 827.4 336.3 827.5 336.0 827.6 336.5 827.7 337.2 827.8 338.0 827.9 337.7 828.0 337.6 828.1 337.3 828.2 335.8 828.2 334.1 828.3 334.3 828.4 336.1 828.5 337.4 828.6 339.6 828.7 341.8 828.8 343.2 828.9 343.3 829.0 344.2 829.1 344.1 829.1 343.8 829.2 342.2 829.3 340.6 829.4 339.5 829.5 338.7 829.6 337.4 829.7 336.7 829.8 336.3 829.9 335.4 830.0 335.6 830.0 336.3 830.1 335.7 830.2 336.5 830.3 336.7 830.4 336.7 830.5 335.7 830.6 336.6 830.7 337.2 830.8 336.6 830.9 337.1 830.9 337.7 831.0 338.4 831.1 338.5 831.2 339.1 831.3 339.2 831.4 339.4 831.5 340.1 831.6 341.7 831.7 342.1 831.8 341.8 831.8 341.3 831.9 339.4 832.0 338.5 832.1 337.4 832.2 335.6 832.3 334.4 832.4 335.7 832.5 336.9 832.6 338.1 832.7 337.5 832.7 337.0 832.8 337.7 832.9 338.4 833.0 338.4 833.1 337.5 833.2 337.4 833.3 338.7 833.4 339.8 833.5 340.8 833.6 342.2 833.6 343.5 833.7 344.0 833.8 342.3 833.9 339.6 834.0 336.4 834.1 333.9 834.2 332.1 834.3 331.5 834.4 330.9 834.5 331.8 834.5 333.6 834.6 336.0 834.7 337.1 834.8 338.1 834.9 339.0 835.0 339.3 835.1 339.0 835.2 339.3 835.3 338.3 835.4 338.4 835.4 339.6 835.5 341.8 835.6 342.8 835.7 343.9 835.8 344.1 835.9 344.8 836.0 344.6 836.1 345.2 836.2 345.4 836.3 344.3 836.3 343.2 836.4 341.3 836.5 340.0 836.6 339.7 836.7 339.6 836.8 338.9 836.9 338.2 837.0 337.5 837.1 337.2 837.2 337.8 837.2 337.9 837.3 339.2 837.4 340.3 837.5 340.8 837.6 341.4 837.7 342.0 837.8 341.4 837.9 339.8 838.0 337.4 838.1 335.8 838.1 335.9 838.2 336.5 838.3 336.5 838.4 337.5 838.5 337.5 838.6 337.7 838.7 337.1 838.8 337.5 838.9 338.4 839.0 338.7 839.0 339.1 839.1 338.7 839.2 337.9 839.3 338.3 839.4 339.5 839.5 339.4 839.6 339.8 839.7 340.8 839.8 342.0 839.9 342.0 839.9 342.0 840.0 341.1 840.1 338.9 840.2 336.4 840.3 336.7 840.4 336.0 840.5 335.3 840.6 335.6 840.7 336.0 840.8 335.4 840.8 335.2 840.9 335.6 841.0 336.6 841.1 337.9 841.2 339.0 841.3 339.9 841.4 339.8 841.5 338.6 841.6 338.0 841.7 337.1 841.7 335.4 841.8 335.5 841.9 335.2 842.0 335.5 842.1 335.5 842.2 334.5 842.3 333.6 842.4 333.5 842.5 333.4 842.6 334.8 842.6 336.4 842.7 337.5 842.8 339.0 842.9 340.5 843.0 341.3 843.1 340.9 843.2 339.9 843.3 339.5 843.4 339.1 843.5 337.7 843.5 335.7 843.6 335.5 843.7 336.0 843.8 335.9 843.9 336.7 844.0 338.0 844.1 337.9 844.2 337.3 844.3 335.3 844.4 333.5 844.4 332.9 844.5 333.7 844.6 333.9 844.7 334.9 844.8 335.7" fill="none" stroke="#eeae8f" stroke-width="0.7" stroke-linejoin="round"/><path d="M570.5 338.5 H844.5" stroke="#e9a080" stroke-width="0.6" opacity="0.6"/></svg><rect x="570.5" y="295.5" width="274.0" height="77.0" fill="none" stroke="#2a2a2a" stroke-width="1.15"/><path d="M570.5 372.5 v-2.7 M570.5 295.5 v2.7" stroke="#2a2a2a" stroke-width="1"/><path d="M615.5 372.5 v-2.7 M615.5 295.5 v2.7" stroke="#2a2a2a" stroke-width="1"/><path d="M660.5 372.5 v-2.7 M660.5 295.5 v2.7" stroke="#2a2a2a" stroke-width="1"/><path d="M705.5 372.5 v-2.7 M705.5 295.5 v2.7" stroke="#2a2a2a" stroke-width="1"/><path d="M750.5 372.5 v-2.7 M750.5 295.5 v2.7" stroke="#2a2a2a" stroke-width="1"/><path d="M795.5 372.5 v-2.7 M795.5 295.5 v2.7" stroke="#2a2a2a" stroke-width="1"/><path d="M840.5 372.5 v-2.7 M840.5 295.5 v2.7" stroke="#2a2a2a" stroke-width="1"/><path d="M570.5 304.5 h2.7 M844.5 304.5 h-2.7" stroke="#2a2a2a" stroke-width="1"/><text x="567.1" y="308.4" font-size="11" text-anchor="end" fill="#2a2a2a">4</text><path d="M570.5 321.5 h2.7 M844.5 321.5 h-2.7" stroke="#2a2a2a" stroke-width="1"/><text x="567.1" y="325.4" font-size="11" text-anchor="end" fill="#2a2a2a">2</text><path d="M570.5 338.5 h2.7 M844.5 338.5 h-2.7" stroke="#2a2a2a" stroke-width="1"/><text x="567.1" y="342.4" font-size="11" text-anchor="end" fill="#2a2a2a">0</text><path d="M570.5 355.5 h2.7 M844.5 355.5 h-2.7" stroke="#2a2a2a" stroke-width="1"/><text x="567.1" y="359.4" font-size="11" text-anchor="end" fill="#2a2a2a">-2</text><path d="M570.5 372.5 h2.7 M844.5 372.5 h-2.7" stroke="#2a2a2a" stroke-width="1"/><text x="567.1" y="376.4" font-size="11" text-anchor="end" fill="#2a2a2a">-4</text><text x="571.1" y="291.8" font-size="11" fill="#2a2a2a">×</text><text x="580.1" y="291.8" font-size="10.5" fill="#2a2a2a">10</text><text x="591.6" y="287.3" font-size="8" fill="#2a2a2a">4</text><text transform="translate(553.7,334.2) rotate(-90)" font-size="11.5" text-anchor="middle" fill="#2a2a2a">IMF 2</text><rect x="570.5" y="383.5" width="274.0" height="77.0" fill="#fff"/><path d="M570.5 383.5 V460.5" stroke="#d8d8d8" stroke-width="1"/><path d="M615.5 383.5 V460.5" stroke="#d8d8d8" stroke-width="1"/><path d="M660.5 383.5 V460.5" stroke="#d8d8d8" stroke-width="1"/><path d="M705.5 383.5 V460.5" stroke="#d8d8d8" stroke-width="1"/><path d="M750.5 383.5 V460.5" stroke="#d8d8d8" stroke-width="1"/><path d="M795.5 383.5 V460.5" stroke="#d8d8d8" stroke-width="1"/><path d="M840.5 383.5 V460.5" stroke="#d8d8d8" stroke-width="1"/><path d="M570.5 392.5 H844.5" stroke="#d8d8d8" stroke-width="1"/><path d="M570.5 409.5 H844.5" stroke="#d8d8d8" stroke-width="1"/><path d="M570.5 426.5 H844.5" stroke="#d8d8d8" stroke-width="1"/><path d="M570.5 443.5 H844.5" stroke="#d8d8d8" stroke-width="1"/><path d="M570.5 460.5 H844.5" stroke="#d8d8d8" stroke-width="1"/><svg x="570.5" y="383.5" width="274.0" height="77.0" viewBox="570.5 383.5 274.0 77.0" overflow="hidden"><path d="M570.6 426.6L570.8 426.5 571.0 426.4 571.1 426.4 571.3 426.5 571.5 426.4 571.7 426.3 571.9 426.3 572.0 426.4 572.2 426.4 572.4 426.3 572.6 426.4 572.8 426.3 572.9 426.4 573.1 426.5 573.3 426.5 573.5 426.5 573.7 426.6 573.8 426.5 574.0 426.5 574.2 426.6 574.4 426.6 574.6 426.5 574.7 426.3 574.9 426.3 575.1 426.3 575.3 426.6 575.5 426.8 575.6 426.9 575.8 426.9 576.0 426.8 576.2 426.7 576.4 426.6 576.5 426.5 576.7 426.5 576.9 426.5 577.1 426.5 577.3 426.6 577.4 426.5 577.6 426.5 577.8 426.5 578.0 426.5 578.2 426.5 578.3 426.3 578.5 426.3 578.7 426.4 578.9 426.5 579.1 426.6 579.2 426.7 579.4 426.8 579.6 426.8 579.8 426.6 580.0 426.5 580.1 426.5 580.3 426.4 580.5 426.5 580.7 426.6 580.9 426.7 581.0 426.7 581.2 426.6 581.4 426.5 581.6 426.4 581.8 426.3 581.9 426.3 582.1 426.3 582.3 426.3 582.5 426.3 582.7 426.4 582.8 426.4 583.0 426.4 583.2 426.3 583.4 426.4 583.6 426.5 583.7 426.5 583.9 426.3 584.1 426.1 584.3 426.1 584.5 426.3 584.6 426.5 584.8 426.5 585.0 426.5 585.2 426.6 585.4 426.6 585.5 426.6 585.7 426.8 585.9 426.8 586.1 426.8 586.3 426.6 586.4 426.5 586.6 426.5 586.8 426.6 587.0 426.5 587.2 426.4 587.3 426.2 587.5 426.3 587.7 426.6 587.9 426.9 588.1 426.9 588.2 426.9 588.4 426.7 588.6 426.5 588.8 426.4 589.0 426.4 589.1 426.5 589.3 426.7 589.5 426.7 589.7 426.7 589.9 426.7 590.0 426.5 590.2 426.4 590.4 426.3 590.6 426.3 590.8 426.5 590.9 426.4 591.1 426.4 591.3 426.5 591.5 426.6 591.7 426.6 591.8 426.5 592.0 426.4 592.2 426.2 592.4 426.2 592.6 426.3 592.7 426.5 592.9 426.6 593.1 426.8 593.3 426.9 593.5 426.7 593.6 426.6 593.8 426.4 594.0 426.4 594.2 426.4 594.4 426.5 594.5 426.5 594.7 426.5 594.9 426.6 595.1 426.7 595.3 426.8 595.4 426.5 595.6 426.4 595.8 426.4 596.0 426.5 596.2 426.6 596.3 426.8 596.5 426.7 596.7 426.6 596.9 426.5 597.1 426.4 597.2 426.5 597.4 426.5 597.6 426.5 597.8 426.5 598.0 426.4 598.1 426.5 598.3 426.5 598.5 426.6 598.7 426.6 598.9 426.7 599.0 426.7 599.2 426.7 599.4 426.6 599.6 426.7 599.8 426.6 599.9 426.5 600.1 426.3 600.3 426.3 600.5 426.4 600.7 426.7 600.8 426.8 601.0 426.7 601.2 426.7 601.4 426.5 601.6 426.5 601.7 426.4 601.9 426.4 602.1 426.4 602.3 426.3 602.5 426.3 602.6 426.3 602.8 426.3 603.0 426.5 603.2 426.6 603.4 426.6 603.5 426.7 603.7 426.7 603.9 426.8 604.1 426.7 604.3 426.6 604.4 426.5 604.6 426.4 604.8 426.3 605.0 426.1 605.2 426.2 605.3 426.4 605.5 426.5 605.7 426.6 605.9 426.8 606.1 426.7 606.2 426.6 606.4 426.5 606.6 426.5 606.8 426.5 607.0 426.4 607.1 426.5 607.3 426.7 607.5 426.7 607.7 426.7 607.9 426.6 608.0 426.5 608.2 426.5 608.4 426.5 608.6 426.4 608.8 426.5 608.9 426.5 609.1 426.5 609.3 426.6 609.5 426.7 609.7 426.6 609.8 426.5 610.0 426.5 610.2 426.5 610.4 426.6 610.6 426.6 610.7 426.6 610.9 426.6 611.1 426.7 611.3 426.7 611.5 426.7 611.6 426.6 611.8 426.4 612.0 426.3 612.2 426.4 612.4 426.4 612.5 426.4 612.7 426.4 612.9 426.4 613.1 426.5 613.3 426.5 613.4 426.6 613.6 426.6 613.8 426.6 614.0 426.7 614.2 426.7 614.3 426.5 614.5 426.4 614.7 426.4 614.9 426.4 615.1 426.5 615.2 426.5 615.4 426.6 615.6 426.6 615.8 426.6 616.0 426.6 616.1 426.6 616.3 426.6 616.5 426.5 616.7 426.5 616.9 426.4 617.0 426.4 617.2 426.5 617.4 426.7 617.6 426.9 617.8 426.7 617.9 426.4 618.1 426.3 618.3 426.2 618.5 426.3 618.7 426.5 618.8 426.7 619.0 426.7 619.2 426.6 619.4 426.4 619.6 426.4 619.7 426.2 619.9 426.3 620.1 426.6 620.3 426.8 620.5 426.8 620.6 426.6 620.8 426.4 621.0 426.2 621.2 426.3 621.4 426.5 621.5 426.7 621.7 426.7 621.9 426.8 622.1 426.8 622.3 426.8 622.4 426.6 622.6 426.3 622.8 426.2 623.0 426.4 623.2 426.8 623.3 426.9 623.5 426.8 623.7 426.6 623.9 426.6 624.1 426.5 624.2 426.3 624.4 426.2 624.6 426.2 624.8 426.3 625.0 426.4 625.1 426.6 625.3 426.6 625.5 426.5 625.7 426.5 625.9 426.5 626.0 426.6 626.2 426.7 626.4 426.8 626.6 426.8 626.8 426.7 626.9 426.4 627.1 426.3 627.3 426.3 627.5 426.4 627.7 426.5 627.8 426.4 628.0 426.3 628.2 426.3 628.4 426.2 628.6 426.3 628.7 426.3 628.9 426.2 629.1 426.3 629.3 426.3 629.5 426.6 629.6 426.6 629.8 426.7 630.0 426.7 630.2 426.5 630.4 426.4 630.5 426.3 630.7 426.4 630.9 426.5 631.1 426.6 631.3 426.5 631.4 426.4 631.6 426.4 631.8 426.3 632.0 426.4 632.2 426.4 632.3 426.3 632.5 426.1 632.7 426.2 632.9 426.2 633.1 426.4 633.2 426.5 633.4 426.7 633.6 426.8 633.8 426.9 634.0 426.9 634.1 426.8 634.3 426.7 634.5 426.5 634.7 426.2 634.9 425.9 635.0 425.7 635.2 425.6 635.4 425.6 635.6 425.7 635.8 425.9 635.9 426.3 636.1 426.7 636.3 427.0 636.5 427.3 636.7 427.6 636.8 427.8 637.0 427.8 637.2 427.8 637.4 427.7 637.6 427.6 637.7 427.3 637.9 426.8 638.1 426.0 638.3 425.4 638.5 424.8 638.6 424.4 638.8 424.4 639.0 424.3 639.2 424.4 639.4 424.7 639.5 425.3 639.7 426.2 639.9 427.0 640.1 427.9 640.3 428.6 640.4 429.0 640.6 429.0 640.8 428.7 641.0 428.2 641.2 427.6 641.3 427.1 641.5 426.5 641.7 425.9 641.9 425.3 642.1 424.8 642.2 424.4 642.4 424.4 642.6 424.7 642.8 425.2 643.0 425.7 643.1 426.2 643.3 426.5 643.5 426.8 643.7 427.0 643.9 427.3 644.0 427.5 644.2 427.6 644.4 427.5 644.6 427.2 644.8 426.8 644.9 426.7 645.1 426.5 645.3 426.4 645.5 426.1 645.7 426.0 645.8 425.9 646.0 426.0 646.2 426.2 646.4 426.4 646.6 426.5 646.7 426.5 646.9 426.5 647.1 426.3 647.3 426.2 647.5 426.1 647.6 426.2 647.8 426.4 648.0 426.7 648.2 426.9 648.4 426.9 648.5 426.8 648.7 426.7 648.9 426.6 649.1 426.5 649.3 426.4 649.4 426.4 649.6 426.4 649.8 426.4 650.0 426.4 650.2 426.4 650.3 426.5 650.5 426.6 650.7 426.7 650.9 426.6 651.1 426.6 651.2 426.3 651.4 426.1 651.6 426.1 651.8 426.2 652.0 426.4 652.1 426.7 652.3 426.7 652.5 426.7 652.7 426.6 652.9 426.5 653.0 426.5 653.2 426.6 653.4 426.7 653.6 426.6 653.8 426.5 653.9 426.5 654.1 426.5 654.3 426.5 654.5 426.5 654.7 426.5 654.8 426.7 655.0 426.6 655.2 426.4 655.4 426.5 655.6 426.6 655.7 426.7 655.9 426.6 656.1 426.5 656.3 426.6 656.5 426.6 656.6 426.6 656.8 426.4 657.0 426.4 657.2 426.2 657.4 426.2 657.5 426.3 657.7 426.4 657.9 426.4 658.1 426.4 658.3 426.4 658.4 426.4 658.6 426.5 658.8 426.6 659.0 426.6 659.2 426.7 659.3 426.6 659.5 426.6 659.7 426.4 659.9 426.4 660.1 426.5 660.2 426.7 660.4 426.7 660.6 426.8 660.8 426.7 661.0 426.5 661.1 426.4 661.3 426.4 661.5 426.3 661.7 426.2 661.9 426.3 662.0 426.5 662.2 426.7 662.4 426.8 662.6 426.7 662.7 426.7 662.9 426.6 663.1 426.5 663.3 426.6 663.5 426.5 663.6 426.6 663.8 426.7 664.0 426.6 664.2 426.6 664.4 426.5 664.5 426.4 664.7 426.4 664.9 426.6 665.1 426.5 665.3 426.6 665.4 426.5 665.6 426.5 665.8 426.6 666.0 426.4 666.2 426.3 666.3 426.3 666.5 426.2 666.7 426.2 666.9 426.4 667.1 426.5 667.2 426.7 667.4 426.8 667.6 426.8 667.8 426.8 668.0 426.7 668.1 426.5 668.3 426.6 668.5 426.6 668.7 426.7 668.9 426.6 669.0 426.4 669.2 426.4 669.4 426.5 669.6 426.5 669.8 426.5 669.9 426.5 670.1 426.4 670.3 426.4 670.5 426.5 670.7 426.6 670.8 426.5 671.0 426.5 671.2 426.5 671.4 426.6 671.6 426.6 671.7 426.6 671.9 426.6 672.1 426.5 672.3 426.6 672.5 426.5 672.6 426.3 672.8 426.2 673.0 426.1 673.2 426.2 673.4 426.5 673.5 426.8 673.7 426.9 673.9 426.8 674.1 426.6 674.3 426.5 674.4 426.6 674.6 426.5 674.8 426.7 675.0 426.6 675.2 426.5 675.3 426.4 675.5 426.6 675.7 426.7 675.9 426.7 676.1 426.6 676.2 426.5 676.4 426.5 676.6 426.4 676.8 426.4 677.0 426.5 677.1 426.5 677.3 426.4 677.5 426.3 677.7 426.3 677.9 426.4 678.0 426.5 678.2 426.6 678.4 426.7 678.6 426.7 678.8 426.5 678.9 426.3 679.1 426.2 679.3 426.2 679.5 426.2 679.7 426.3 679.8 426.5 680.0 426.7 680.2 426.8 680.4 426.7 680.6 426.5 680.7 426.4 680.9 426.2 681.1 426.1 681.3 426.1 681.5 426.3 681.6 426.4 681.8 426.8 682.0 427.0 682.2 427.2 682.4 427.3 682.5 427.2 682.7 427.0 682.9 426.9 683.1 426.7 683.3 426.5 683.4 426.4 683.6 426.3 683.8 426.1 684.0 425.9 684.2 425.7 684.3 425.4 684.5 425.3 684.7 425.4 684.9 425.6 685.1 425.9 685.2 426.1 685.4 426.3 685.6 426.6 685.8 427.0 686.0 427.2 686.1 427.3 686.3 427.4 686.5 427.3 686.7 427.2 686.9 427.0 687.0 426.9 687.2 426.7 687.4 426.7 687.6 426.6 687.8 426.5 687.9 426.5 688.1 426.3 688.3 426.1 688.5 425.9 688.7 425.8 688.8 425.9 689.0 426.2 689.2 426.6 689.4 426.8 689.6 426.9 689.7 426.7 689.9 426.6 690.1 426.4 690.3 426.4 690.5 426.3 690.6 426.4 690.8 426.5 691.0 426.4 691.2 426.5 691.4 426.7 691.5 426.8 691.7 426.7 691.9 426.7 692.1 426.7 692.3 426.7 692.4 426.7 692.6 426.6 692.8 426.6 693.0 426.6 693.2 426.7 693.3 426.6 693.5 426.6 693.7 426.4 693.9 426.2 694.1 426.1 694.2 426.0 694.4 426.2 694.6 426.4 694.8 426.5 695.0 426.6 695.1 426.6 695.3 426.5 695.5 426.6 695.7 426.6 695.9 426.7 696.0 426.7 696.2 426.8 696.4 426.9 696.6 426.9 696.8 426.8 696.9 426.7 697.1 426.6 697.3 426.7 697.5 426.9 697.7 427.1 697.8 427.1 698.0 426.9 698.2 426.5 698.4 426.2 698.6 425.9 698.7 425.9 698.9 425.8 699.1 425.7 699.3 425.6 699.5 425.8 699.6 426.0 699.8 426.2 700.0 426.4 700.2 426.5 700.4 426.6 700.5 426.8 700.7 427.1 700.9 427.7 701.1 428.1 701.3 428.3 701.4 428.2 701.6 427.9 701.8 427.6 702.0 427.2 702.2 426.7 702.3 426.3 702.5 425.9 702.7 425.4 702.9 424.9 703.1 424.6 703.2 424.4 703.4 424.3 703.6 424.5 703.8 424.8 704.0 425.3 704.1 425.7 704.3 426.4 704.5 427.2 704.7 427.9 704.9 428.5 705.0 428.9 705.2 429.1 705.4 429.0 705.6 428.9 705.8 428.5 705.9 428.1 706.1 427.4 706.3 426.8 706.5 426.3 706.7 425.7 706.8 425.2 707.0 424.8 707.2 424.4 707.4 424.1 707.6 423.9 707.7 423.9 707.9 424.4 708.1 424.8 708.3 425.2 708.5 425.7 708.6 426.2 708.8 426.7 709.0 427.3 709.2 428.0 709.4 428.6 709.5 429.0 709.7 429.2 709.9 429.2 710.1 429.1 710.3 428.9 710.4 428.6 710.6 428.0 710.8 427.3 711.0 426.6 711.2 425.9 711.3 425.1 711.5 424.6 711.7 424.3 711.9 424.0 712.1 423.8 712.2 423.7 712.4 423.6 712.6 423.7 712.8 424.0 713.0 424.4 713.1 425.2 713.3 426.0 713.5 426.8 713.7 427.7 713.9 428.5 714.0 429.2 714.2 429.7 714.4 430.0 714.6 430.1 714.8 429.8 714.9 429.4 715.1 428.9 715.3 428.3 715.5 427.9 715.7 427.3 715.8 426.7 716.0 426.1 716.2 425.4 716.4 424.8 716.6 424.4 716.7 424.0 716.9 423.7 717.1 423.6 717.3 423.5 717.5 423.6 717.6 423.8 717.8 424.1 718.0 424.6 718.2 425.1 718.4 425.6 718.5 426.2 718.7 427.0 718.9 427.7 719.1 428.4 719.3 429.1 719.4 429.7 719.6 430.1 719.8 430.5 720.0 430.7 720.2 430.6 720.3 430.5 720.5 430.2 720.7 429.7 720.9 428.9 721.1 428.0 721.2 427.0 721.4 426.0 721.6 424.7 721.8 423.4 722.0 422.3 722.1 421.3 722.3 420.6 722.5 420.2 722.7 420.2 722.9 420.5 723.0 421.1 723.2 422.0 723.4 423.0 723.6 424.2 723.8 425.8 723.9 427.5 724.1 429.2 724.3 430.7 724.5 432.1 724.7 433.2 724.8 433.9 725.0 434.3 725.2 434.3 725.4 434.1 725.6 433.4 725.7 432.2 725.9 430.8 726.1 429.0 726.3 427.1 726.5 425.2 726.6 423.3 726.8 421.7 727.0 420.5 727.2 419.8 727.4 419.2 727.5 418.9 727.7 419.0 727.9 419.6 728.1 420.4 728.3 421.5 728.4 422.9 728.6 424.4 728.8 426.1 729.0 427.9 729.2 429.7 729.3 431.1 729.5 432.2 729.7 432.9 729.9 433.2 730.1 433.3 730.2 432.9 730.4 432.3 730.6 431.3 730.8 430.1 731.0 428.9 731.1 427.7 731.3 426.5 731.5 425.4 731.7 424.4 731.9 423.4 732.0 422.4 732.2 421.7 732.4 421.3 732.6 421.3 732.8 421.5 732.9 422.1 733.1 422.6 733.3 423.3 733.5 424.1 733.7 425.1 733.8 426.1 734.0 427.3 734.2 428.3 734.4 429.3 734.6 429.9 734.7 430.3 734.9 430.5 735.1 430.6 735.3 430.5 735.5 430.3 735.6 430.2 735.8 429.8 736.0 429.1 736.2 428.5 736.4 427.6 736.5 426.5 736.7 425.3 736.9 424.2 737.1 423.2 737.3 422.5 737.4 422.0 737.6 421.6 737.8 421.5 738.0 421.7 738.2 422.1 738.3 422.8 738.5 423.6 738.7 424.4 738.9 425.2 739.1 426.2 739.2 427.3 739.4 428.4 739.6 429.5 739.8 430.4 740.0 431.1 740.1 431.6 740.3 431.6 740.5 431.4 740.7 430.9 740.9 430.1 741.0 429.2 741.2 428.3 741.4 427.3 741.6 426.5 741.8 425.7 741.9 424.7 742.1 424.0 742.3 423.5 742.5 423.0 742.7 422.7 742.8 422.6 743.0 422.8 743.2 423.3 743.4 423.8 743.6 424.5 743.7 425.2 743.9 425.9 744.1 426.6 744.3 427.2 744.5 427.7 744.6 428.0 744.8 428.2 745.0 428.1 745.2 428.3 745.4 428.2 745.5 428.1 745.7 427.9 745.9 427.9 746.1 427.5 746.3 426.9 746.4 426.5 746.6 426.2 746.8 426.1 747.0 426.1 747.2 426.1 747.3 426.1 747.5 426.1 747.7 426.0 747.9 425.8 748.1 425.8 748.2 425.7 748.4 425.8 748.6 425.9 748.8 425.9 749.0 426.0 749.1 426.1 749.3 426.3 749.5 426.4 749.7 426.5 749.9 426.5 750.0 426.6 750.2 427.0 750.4 427.3 750.6 427.6 750.8 427.7 750.9 427.9 751.1 427.9 751.3 427.9 751.5 427.8 751.7 427.4 751.8 426.9 752.0 426.5 752.2 426.0 752.4 425.5 752.6 424.9 752.7 424.4 752.9 423.8 753.1 423.5 753.3 423.4 753.5 423.6 753.6 424.0 753.8 424.5 754.0 425.2 754.2 426.1 754.4 426.9 754.5 427.7 754.7 428.5 754.9 429.2 755.1 429.8 755.3 430.2 755.4 430.5 755.6 430.2 755.8 429.8 756.0 429.1 756.2 428.4 756.3 427.5 756.5 426.6 756.7 425.7 756.9 425.1 757.1 424.4 757.2 424.0 757.4 423.8 757.6 423.8 757.8 424.0 758.0 424.4 758.1 424.8 758.3 425.5 758.5 425.9 758.7 426.3 758.9 426.7 759.0 427.0 759.2 427.3 759.4 427.5 759.6 427.6 759.8 427.5 759.9 427.3 760.1 427.2 760.3 427.0 760.5 426.9 760.7 426.7 760.8 426.6 761.0 426.5 761.2 426.4 761.4 426.3 761.6 426.2 761.7 426.2 761.9 426.3 762.1 426.3 762.3 426.3 762.5 426.3 762.6 426.4 762.8 426.5 763.0 426.5 763.2 426.4 763.4 426.3 763.5 426.4 763.7 426.5 763.9 426.5 764.1 426.5 764.3 426.7 764.4 426.7 764.6 426.8 764.8 426.7 765.0 426.5 765.2 426.4 765.3 426.2 765.5 426.1 765.7 426.2 765.9 426.4 766.1 426.5 766.2 426.6 766.4 426.7 766.6 426.7 766.8 426.5 767.0 426.4 767.1 426.2 767.3 426.1 767.5 426.2 767.7 426.3 767.9 426.5 768.0 426.5 768.2 426.5 768.4 426.4 768.6 426.5 768.8 426.4 768.9 426.5 769.1 426.5 769.3 426.5 769.5 426.6 769.7 426.6 769.8 426.6 770.0 426.7 770.2 426.7 770.4 426.5 770.6 426.4 770.7 426.3 770.9 426.4 771.1 426.6 771.3 426.6 771.5 426.6 771.6 426.5 771.8 426.5 772.0 426.5 772.2 426.5 772.4 426.5 772.5 426.4 772.7 426.3 772.9 426.4 773.1 426.5 773.3 426.5 773.4 426.5 773.6 426.5 773.8 426.5 774.0 426.4 774.2 426.4 774.3 426.3 774.5 426.3 774.7 426.2 774.9 426.1 775.1 426.2 775.2 426.2 775.4 426.3 775.6 426.5 775.8 426.7 776.0 426.7 776.1 426.5 776.3 426.4 776.5 426.3 776.7 426.2 776.9 426.2 777.0 426.4 777.2 426.6 777.4 426.6 777.6 426.4 777.8 426.3 777.9 426.3 778.1 426.4 778.3 426.6 778.5 426.8 778.7 426.9 778.8 427.0 779.0 426.9 779.2 426.6 779.4 426.5 779.6 426.5 779.7 426.3 779.9 426.3 780.1 426.4 780.3 426.5 780.5 426.6 780.6 426.6 780.8 426.6 781.0 426.5 781.2 426.5 781.4 426.6 781.5 426.5 781.7 426.3 781.9 426.3 782.1 426.3 782.3 426.3 782.4 426.2 782.6 426.0 782.8 425.8 783.0 425.8 783.2 426.1 783.3 426.3 783.5 426.5 783.7 426.5 783.9 426.7 784.1 427.0 784.2 427.2 784.4 427.6 784.6 428.1 784.8 428.4 785.0 428.5 785.1 428.4 785.3 428.2 785.5 427.8 785.7 427.3 785.9 426.9 786.0 426.3 786.2 425.7 786.4 425.0 786.6 424.2 786.8 423.6 786.9 423.4 787.1 423.4 787.3 423.7 787.5 424.1 787.7 424.4 787.8 424.9 788.0 425.5 788.2 426.2 788.4 426.9 788.6 427.6 788.7 428.2 788.9 428.5 789.1 428.6 789.3 428.5 789.5 428.5 789.6 428.4 789.8 428.2 790.0 427.7 790.2 427.2 790.4 426.6 790.5 426.1 790.7 425.8 790.9 425.5 791.1 425.3 791.3 425.3 791.4 425.3 791.6 425.5 791.8 426.0 792.0 426.2 792.2 426.2 792.3 426.0 792.5 425.8 792.7 425.7 792.9 425.9 793.1 426.3 793.2 426.8 793.4 427.0 793.6 427.1 793.8 426.9 794.0 426.7 794.1 426.5 794.3 426.4 794.5 426.4 794.7 426.4 794.9 426.4 795.0 426.4 795.2 426.4 795.4 426.2 795.6 426.2 795.8 426.4 795.9 426.4 796.1 426.4 796.3 426.4 796.5 426.4 796.7 426.5 796.8 426.6 797.0 426.7 797.2 426.6 797.4 426.5 797.6 426.4 797.7 426.4 797.9 426.5 798.1 426.5 798.3 426.5 798.5 426.6 798.6 426.6 798.8 426.6 799.0 426.6 799.2 426.6 799.4 426.7 799.5 426.7 799.7 426.7 799.9 426.5 800.1 426.4 800.3 426.3 800.4 426.3 800.6 426.4 800.8 426.5 801.0 426.5 801.2 426.5 801.3 426.4 801.5 426.3 801.7 426.3 801.9 426.4 802.1 426.4 802.2 426.5 802.4 426.5 802.6 426.4 802.8 426.3 803.0 426.2 803.1 426.2 803.3 426.3 803.5 426.5 803.7 426.8 803.9 426.8 804.0 426.9 804.2 426.8 804.4 426.7 804.6 426.6 804.8 426.5 804.9 426.5 805.1 426.5 805.3 426.6 805.5 426.7 805.7 426.8 805.8 426.7 806.0 426.5 806.2 426.3 806.4 426.2 806.6 426.2 806.7 426.5 806.9 426.7 807.1 426.9 807.3 426.8 807.5 426.7 807.6 426.6 807.8 426.6 808.0 426.6 808.2 426.6 808.4 426.6 808.5 426.7 808.7 426.6 808.9 426.5 809.1 426.4 809.3 426.4 809.4 426.4 809.6 426.5 809.8 426.6 810.0 426.6 810.2 426.6 810.3 426.5 810.5 426.5 810.7 426.5 810.9 426.5 811.1 426.5 811.2 426.5 811.4 426.5 811.6 426.6 811.8 426.7 812.0 426.6 812.1 426.5 812.3 426.3 812.5 426.3 812.7 426.5 812.9 426.7 813.0 426.6 813.2 426.5 813.4 426.4 813.6 426.3 813.8 426.3 813.9 426.5 814.1 426.6 814.3 426.6 814.5 426.7 814.7 426.8 814.8 426.7 815.0 426.5 815.2 426.4 815.4 426.2 815.6 426.2 815.7 426.2 815.9 426.4 816.1 426.6 816.3 426.5 816.5 426.5 816.6 426.4 816.8 426.4 817.0 426.5 817.2 426.5 817.4 426.5 817.5 426.5 817.7 426.5 817.9 426.5 818.1 426.6 818.3 426.7 818.4 426.7 818.6 426.8 818.8 426.6 819.0 426.5 819.2 426.6 819.3 426.5 819.5 426.4 819.7 426.5 819.9 426.7 820.1 427.0 820.2 427.0 820.4 426.8 820.6 426.6 820.8 426.3 821.0 426.2 821.1 426.2 821.3 426.4 821.5 426.4 821.7 426.3 821.9 426.4 822.0 426.5 822.2 426.6 822.4 426.5 822.6 426.4 822.8 426.4 822.9 426.4 823.1 426.4 823.3 426.4 823.5 426.5 823.7 426.4 823.8 426.4 824.0 426.5 824.2 426.4 824.4 426.4 824.6 426.4 824.7 426.4 824.9 426.5 825.1 426.7 825.3 426.7 825.5 426.5 825.6 426.3 825.8 426.3 826.0 426.4 826.2 426.6 826.4 426.6 826.5 426.6 826.7 426.5 826.9 426.5 827.1 426.6 827.3 426.6 827.4 426.5 827.6 426.5 827.8 426.5 828.0 426.4 828.2 426.4 828.3 426.5 828.5 426.4 828.7 426.5 828.9 426.6 829.1 426.6 829.2 426.5 829.4 426.6 829.6 426.6 829.8 426.5 830.0 426.3 830.1 426.3 830.3 426.4 830.5 426.4 830.7 426.4 830.9 426.6 831.0 426.7 831.2 426.7 831.4 426.5 831.6 426.6 831.8 426.3 831.9 426.3 832.1 426.3 832.3 426.3 832.5 426.5 832.7 426.6 832.8 426.7 833.0 426.6 833.2 426.5 833.4 426.4 833.6 426.4 833.7 426.4 833.9 426.5 834.1 426.6 834.3 426.5 834.5 426.5 834.6 426.5 834.8 426.4 835.0 426.5 835.2 426.5 835.4 426.6 835.5 426.7 835.7 426.7 835.9 426.7 836.1 426.6 836.3 426.5 836.4 426.5 836.6 426.4 836.8 426.4 837.0 426.4 837.2 426.7 837.3 426.7 837.5 426.7 837.7 426.5 837.9 426.5 838.1 426.6 838.2 426.7 838.4 426.7 838.6 426.6 838.8 426.7 839.0 426.7 839.1 426.6 839.3 426.4 839.5 426.2 839.7 426.2 839.9 426.3 840.0 426.5 840.2 426.7 840.4 426.9 840.6 426.9 840.8 426.8 840.9 426.7 841.1 426.6 841.3 426.5 841.5 426.5 841.7 426.4 841.8 426.4 842.0 426.4 842.2 426.3 842.4 426.3 842.6 426.2 842.7 426.4 842.9 426.6 843.1 426.6 843.3 426.6 843.5 426.6 843.6 426.5 843.8 426.4 844.0 426.4 844.2 426.3 844.4 426.4 844.5 426.6 844.7 426.7" fill="none" stroke="#efb79c" stroke-width="0.6" stroke-linejoin="round"/><path d="M570.5 426.5 H844.5" stroke="#e9a080" stroke-width="0.6" opacity="0.6"/></svg><rect x="570.5" y="383.5" width="274.0" height="77.0" fill="none" stroke="#2a2a2a" stroke-width="1.15"/><path d="M570.5 460.5 v-2.7 M570.5 383.5 v2.7" stroke="#2a2a2a" stroke-width="1"/><path d="M615.5 460.5 v-2.7 M615.5 383.5 v2.7" stroke="#2a2a2a" stroke-width="1"/><path d="M660.5 460.5 v-2.7 M660.5 383.5 v2.7" stroke="#2a2a2a" stroke-width="1"/><path d="M705.5 460.5 v-2.7 M705.5 383.5 v2.7" stroke="#2a2a2a" stroke-width="1"/><path d="M750.5 460.5 v-2.7 M750.5 383.5 v2.7" stroke="#2a2a2a" stroke-width="1"/><path d="M795.5 460.5 v-2.7 M795.5 383.5 v2.7" stroke="#2a2a2a" stroke-width="1"/><path d="M840.5 460.5 v-2.7 M840.5 383.5 v2.7" stroke="#2a2a2a" stroke-width="1"/><path d="M570.5 392.5 h2.7 M844.5 392.5 h-2.7" stroke="#2a2a2a" stroke-width="1"/><text x="567.1" y="396.4" font-size="11" text-anchor="end" fill="#2a2a2a">4</text><path d="M570.5 409.5 h2.7 M844.5 409.5 h-2.7" stroke="#2a2a2a" stroke-width="1"/><text x="567.1" y="413.4" font-size="11" text-anchor="end" fill="#2a2a2a">2</text><path d="M570.5 426.5 h2.7 M844.5 426.5 h-2.7" stroke="#2a2a2a" stroke-width="1"/><text x="567.1" y="430.4" font-size="11" text-anchor="end" fill="#2a2a2a">0</text><path d="M570.5 443.5 h2.7 M844.5 443.5 h-2.7" stroke="#2a2a2a" stroke-width="1"/><text x="567.1" y="447.4" font-size="11" text-anchor="end" fill="#2a2a2a">-2</text><path d="M570.5 460.5 h2.7 M844.5 460.5 h-2.7" stroke="#2a2a2a" stroke-width="1"/><text x="567.1" y="464.4" font-size="11" text-anchor="end" fill="#2a2a2a">-4</text><text x="571.1" y="379.8" font-size="11" fill="#2a2a2a">×</text><text x="580.1" y="379.8" font-size="10.5" fill="#2a2a2a">10</text><text x="591.6" y="375.3" font-size="8" fill="#2a2a2a">4</text><text transform="translate(553.7,422.2) rotate(-90)" font-size="11.5" text-anchor="middle" fill="#2a2a2a">IMF 3</text><rect x="570.5" y="472.5" width="274.0" height="77.0" fill="#fff"/><path d="M570.5 472.5 V549.5" stroke="#d8d8d8" stroke-width="1"/><path d="M615.5 472.5 V549.5" stroke="#d8d8d8" stroke-width="1"/><path d="M660.5 472.5 V549.5" stroke="#d8d8d8" stroke-width="1"/><path d="M705.5 472.5 V549.5" stroke="#d8d8d8" stroke-width="1"/><path d="M750.5 472.5 V549.5" stroke="#d8d8d8" stroke-width="1"/><path d="M795.5 472.5 V549.5" stroke="#d8d8d8" stroke-width="1"/><path d="M840.5 472.5 V549.5" stroke="#d8d8d8" stroke-width="1"/><path d="M570.5 481.5 H844.5" stroke="#d8d8d8" stroke-width="1"/><path d="M570.5 498.5 H844.5" stroke="#d8d8d8" stroke-width="1"/><path d="M570.5 515.5 H844.5" stroke="#d8d8d8" stroke-width="1"/><path d="M570.5 532.5 H844.5" stroke="#d8d8d8" stroke-width="1"/><path d="M570.5 549.5 H844.5" stroke="#d8d8d8" stroke-width="1"/><svg x="570.5" y="472.5" width="274.0" height="77.0" viewBox="570.5 472.5 274.0 77.0" overflow="hidden"><path d="M570.6 515.6L570.8 515.6 571.0 515.7 571.1 515.7 571.3 515.7 571.5 515.7 571.7 515.7 571.9 515.7 572.0 515.6 572.2 515.6 572.4 515.5 572.6 515.5 572.8 515.4 572.9 515.4 573.1 515.4 573.3 515.4 573.5 515.4 573.7 515.4 573.8 515.4 574.0 515.4 574.2 515.4 574.4 515.4 574.6 515.4 574.7 515.4 574.9 515.5 575.1 515.5 575.3 515.5 575.5 515.5 575.6 515.5 575.8 515.5 576.0 515.5 576.2 515.5 576.4 515.5 576.5 515.5 576.7 515.5 576.9 515.5 577.1 515.5 577.3 515.4 577.4 515.4 577.6 515.4 577.8 515.4 578.0 515.4 578.2 515.4 578.3 515.4 578.5 515.4 578.7 515.4 578.9 515.4 579.1 515.4 579.2 515.4 579.4 515.4 579.6 515.4 579.8 515.5 580.0 515.5 580.1 515.5 580.3 515.6 580.5 515.6 580.7 515.6 580.9 515.6 581.0 515.6 581.2 515.6 581.4 515.6 581.6 515.6 581.8 515.6 581.9 515.6 582.1 515.5 582.3 515.5 582.5 515.5 582.7 515.5 582.8 515.5 583.0 515.5 583.2 515.5 583.4 515.5 583.6 515.5 583.7 515.5 583.9 515.5 584.1 515.5 584.3 515.5 584.5 515.5 584.6 515.5 584.8 515.5 585.0 515.5 585.2 515.5 585.4 515.6 585.5 515.5 585.7 515.5 585.9 515.5 586.1 515.5 586.3 515.5 586.4 515.5 586.6 515.4 586.8 515.4 587.0 515.4 587.2 515.4 587.3 515.4 587.5 515.4 587.7 515.4 587.9 515.5 588.1 515.5 588.2 515.5 588.4 515.5 588.6 515.5 588.8 515.6 589.0 515.6 589.1 515.6 589.3 515.6 589.5 515.7 589.7 515.7 589.9 515.7 590.0 515.7 590.2 515.6 590.4 515.6 590.6 515.5 590.8 515.5 590.9 515.5 591.1 515.5 591.3 515.4 591.5 515.4 591.7 515.4 591.8 515.3 592.0 515.3 592.2 515.3 592.4 515.3 592.6 515.4 592.7 515.4 592.9 515.4 593.1 515.4 593.3 515.4 593.5 515.5 593.6 515.5 593.8 515.6 594.0 515.6 594.2 515.6 594.4 515.6 594.5 515.6 594.7 515.6 594.9 515.6 595.1 515.6 595.3 515.5 595.4 515.5 595.6 515.5 595.8 515.5 596.0 515.4 596.2 515.4 596.3 515.4 596.5 515.4 596.7 515.4 596.9 515.4 597.1 515.4 597.2 515.4 597.4 515.4 597.6 515.4 597.8 515.4 598.0 515.4 598.1 515.4 598.3 515.4 598.5 515.4 598.7 515.4 598.9 515.4 599.0 515.4 599.2 515.4 599.4 515.4 599.6 515.4 599.8 515.4 599.9 515.4 600.1 515.4 600.3 515.4 600.5 515.5 600.7 515.5 600.8 515.5 601.0 515.6 601.2 515.6 601.4 515.6 601.6 515.6 601.7 515.6 601.9 515.6 602.1 515.5 602.3 515.5 602.5 515.4 602.6 515.4 602.8 515.3 603.0 515.3 603.2 515.3 603.4 515.3 603.5 515.2 603.7 515.2 603.9 515.2 604.1 515.2 604.3 515.3 604.4 515.3 604.6 515.3 604.8 515.3 605.0 515.3 605.2 515.3 605.3 515.4 605.5 515.4 605.7 515.4 605.9 515.4 606.1 515.4 606.2 515.4 606.4 515.4 606.6 515.4 606.8 515.5 607.0 515.5 607.1 515.5 607.3 515.4 607.5 515.4 607.7 515.4 607.9 515.4 608.0 515.5 608.2 515.5 608.4 515.5 608.6 515.6 608.8 515.6 608.9 515.6 609.1 515.6 609.3 515.7 609.5 515.7 609.7 515.6 609.8 515.6 610.0 515.6 610.2 515.5 610.4 515.5 610.6 515.5 610.7 515.5 610.9 515.5 611.1 515.5 611.3 515.5 611.5 515.5 611.6 515.5 611.8 515.5 612.0 515.5 612.2 515.5 612.4 515.5 612.5 515.5 612.7 515.5 612.9 515.5 613.1 515.5 613.3 515.5 613.4 515.5 613.6 515.5 613.8 515.5 614.0 515.5 614.2 515.5 614.3 515.6 614.5 515.6 614.7 515.6 614.9 515.6 615.1 515.6 615.2 515.6 615.4 515.6 615.6 515.7 615.8 515.7 616.0 515.7 616.1 515.7 616.3 515.7 616.5 515.6 616.7 515.6 616.9 515.6 617.0 515.5 617.2 515.5 617.4 515.5 617.6 515.5 617.8 515.5 617.9 515.5 618.1 515.5 618.3 515.5 618.5 515.5 618.7 515.5 618.8 515.5 619.0 515.5 619.2 515.5 619.4 515.6 619.6 515.6 619.7 515.5 619.9 515.5 620.1 515.5 620.3 515.6 620.5 515.5 620.6 515.5 620.8 515.6 621.0 515.6 621.2 515.6 621.4 515.6 621.5 515.6 621.7 515.6 621.9 515.6 622.1 515.5 622.3 515.5 622.4 515.5 622.6 515.5 622.8 515.5 623.0 515.5 623.2 515.5 623.3 515.5 623.5 515.5 623.7 515.5 623.9 515.5 624.1 515.5 624.2 515.5 624.4 515.5 624.6 515.5 624.8 515.5 625.0 515.6 625.1 515.6 625.3 515.6 625.5 515.6 625.7 515.6 625.9 515.6 626.0 515.6 626.2 515.6 626.4 515.6 626.6 515.6 626.8 515.6 626.9 515.6 627.1 515.5 627.3 515.5 627.5 515.5 627.7 515.5 627.8 515.5 628.0 515.4 628.2 515.4 628.4 515.4 628.6 515.4 628.7 515.4 628.9 515.4 629.1 515.4 629.3 515.4 629.5 515.4 629.6 515.4 629.8 515.4 630.0 515.5 630.2 515.5 630.4 515.5 630.5 515.5 630.7 515.5 630.9 515.5 631.1 515.6 631.3 515.6 631.4 515.6 631.6 515.6 631.8 515.6 632.0 515.6 632.2 515.6 632.3 515.6 632.5 515.6 632.7 515.6 632.9 515.6 633.1 515.5 633.2 515.5 633.4 515.5 633.6 515.5 633.8 515.5 634.0 515.5 634.1 515.5 634.3 515.5 634.5 515.5 634.7 515.5 634.9 515.5 635.0 515.5 635.2 515.5 635.4 515.5 635.6 515.5 635.8 515.5 635.9 515.6 636.1 515.6 636.3 515.6 636.5 515.5 636.7 515.5 636.8 515.5 637.0 515.5 637.2 515.5 637.4 515.5 637.6 515.5 637.7 515.5 637.9 515.5 638.1 515.5 638.3 515.5 638.5 515.4 638.6 515.4 638.8 515.5 639.0 515.5 639.2 515.5 639.4 515.5 639.5 515.5 639.7 515.5 639.9 515.5 640.1 515.5 640.3 515.5 640.4 515.5 640.6 515.5 640.8 515.5 641.0 515.5 641.2 515.5 641.3 515.5 641.5 515.5 641.7 515.4 641.9 515.4 642.1 515.4 642.2 515.4 642.4 515.4 642.6 515.4 642.8 515.4 643.0 515.4 643.1 515.4 643.3 515.5 643.5 515.5 643.7 515.6 643.9 515.6 644.0 515.6 644.2 515.6 644.4 515.7 644.6 515.7 644.8 515.6 644.9 515.6 645.1 515.6 645.3 515.6 645.5 515.6 645.7 515.6 645.8 515.6 646.0 515.6 646.2 515.5 646.4 515.5 646.6 515.5 646.7 515.5 646.9 515.5 647.1 515.5 647.3 515.5 647.5 515.5 647.6 515.5 647.8 515.5 648.0 515.5 648.2 515.4 648.4 515.4 648.5 515.4 648.7 515.4 648.9 515.4 649.1 515.3 649.3 515.3 649.4 515.3 649.6 515.4 649.8 515.4 650.0 515.4 650.2 515.5 650.3 515.5 650.5 515.5 650.7 515.5 650.9 515.5 651.1 515.6 651.2 515.5 651.4 515.5 651.6 515.5 651.8 515.5 652.0 515.4 652.1 515.4 652.3 515.4 652.5 515.5 652.7 515.5 652.9 515.5 653.0 515.5 653.2 515.5 653.4 515.5 653.6 515.5 653.8 515.5 653.9 515.5 654.1 515.5 654.3 515.5 654.5 515.5 654.7 515.6 654.8 515.6 655.0 515.6 655.2 515.6 655.4 515.6 655.6 515.6 655.7 515.6 655.9 515.5 656.1 515.5 656.3 515.5 656.5 515.5 656.6 515.5 656.8 515.5 657.0 515.5 657.2 515.5 657.4 515.4 657.5 515.4 657.7 515.4 657.9 515.4 658.1 515.4 658.3 515.4 658.4 515.4 658.6 515.4 658.8 515.4 659.0 515.4 659.2 515.4 659.3 515.5 659.5 515.5 659.7 515.6 659.9 515.6 660.1 515.6 660.2 515.6 660.4 515.6 660.6 515.6 660.8 515.6 661.0 515.6 661.1 515.6 661.3 515.6 661.5 515.6 661.7 515.6 661.9 515.6 662.0 515.5 662.2 515.5 662.4 515.5 662.6 515.5 662.7 515.5 662.9 515.5 663.1 515.5 663.3 515.5 663.5 515.5 663.6 515.5 663.8 515.5 664.0 515.5 664.2 515.5 664.4 515.5 664.5 515.5 664.7 515.5 664.9 515.5 665.1 515.5 665.3 515.5 665.4 515.5 665.6 515.5 665.8 515.5 666.0 515.5 666.2 515.5 666.3 515.5 666.5 515.5 666.7 515.5 666.9 515.4 667.1 515.5 667.2 515.5 667.4 515.4 667.6 515.4 667.8 515.4 668.0 515.5 668.1 515.5 668.3 515.5 668.5 515.5 668.7 515.5 668.9 515.5 669.0 515.5 669.2 515.6 669.4 515.6 669.6 515.6 669.8 515.5 669.9 515.5 670.1 515.5 670.3 515.5 670.5 515.5 670.7 515.5 670.8 515.5 671.0 515.4 671.2 515.5 671.4 515.5 671.6 515.5 671.7 515.5 671.9 515.5 672.1 515.5 672.3 515.5 672.5 515.5 672.6 515.6 672.8 515.6 673.0 515.5 673.2 515.5 673.4 515.5 673.5 515.5 673.7 515.4 673.9 515.4 674.1 515.4 674.3 515.4 674.4 515.4 674.6 515.4 674.8 515.4 675.0 515.4 675.2 515.4 675.3 515.5 675.5 515.5 675.7 515.6 675.9 515.6 676.1 515.6 676.2 515.7 676.4 515.7 676.6 515.6 676.8 515.6 677.0 515.6 677.1 515.6 677.3 515.6 677.5 515.5 677.7 515.5 677.9 515.5 678.0 515.5 678.2 515.5 678.4 515.4 678.6 515.4 678.8 515.4 678.9 515.4 679.1 515.4 679.3 515.4 679.5 515.4 679.7 515.4 679.8 515.4 680.0 515.4 680.2 515.4 680.4 515.4 680.6 515.4 680.7 515.4 680.9 515.4 681.1 515.4 681.3 515.4 681.5 515.5 681.6 515.4 681.8 515.4 682.0 515.4 682.2 515.4 682.4 515.4 682.5 515.4 682.7 515.4 682.9 515.4 683.1 515.4 683.3 515.4 683.4 515.4 683.6 515.4 683.8 515.4 684.0 515.4 684.2 515.4 684.3 515.5 684.5 515.5 684.7 515.5 684.9 515.5 685.1 515.5 685.2 515.5 685.4 515.5 685.6 515.5 685.8 515.5 686.0 515.5 686.1 515.5 686.3 515.6 686.5 515.6 686.7 515.6 686.9 515.6 687.0 515.6 687.2 515.6 687.4 515.6 687.6 515.6 687.8 515.6 687.9 515.6 688.1 515.6 688.3 515.6 688.5 515.6 688.7 515.6 688.8 515.6 689.0 515.6 689.2 515.6 689.4 515.6 689.6 515.5 689.7 515.5 689.9 515.5 690.1 515.5 690.3 515.4 690.5 515.4 690.6 515.5 690.8 515.5 691.0 515.5 691.2 515.5 691.4 515.5 691.5 515.5 691.7 515.5 691.9 515.5 692.1 515.5 692.3 515.5 692.4 515.5 692.6 515.5 692.8 515.6 693.0 515.6 693.2 515.6 693.3 515.6 693.5 515.6 693.7 515.6 693.9 515.6 694.1 515.6 694.2 515.6 694.4 515.6 694.6 515.6 694.8 515.6 695.0 515.6 695.1 515.6 695.3 515.6 695.5 515.6 695.7 515.6 695.9 515.5 696.0 515.5 696.2 515.5 696.4 515.5 696.6 515.5 696.8 515.5 696.9 515.5 697.1 515.4 697.3 515.4 697.5 515.4 697.7 515.4 697.8 515.4 698.0 515.5 698.2 515.5 698.4 515.5 698.6 515.5 698.7 515.5 698.9 515.5 699.1 515.5 699.3 515.5 699.5 515.5 699.6 515.5 699.8 515.5 700.0 515.5 700.2 515.5 700.4 515.5 700.5 515.5 700.7 515.5 700.9 515.5 701.1 515.6 701.3 515.6 701.4 515.7 701.6 515.7 701.8 515.7 702.0 515.7 702.2 515.7 702.3 515.7 702.5 515.7 702.7 515.7 702.9 515.6 703.1 515.6 703.2 515.6 703.4 515.5 703.6 515.5 703.8 515.5 704.0 515.5 704.1 515.5 704.3 515.4 704.5 515.4 704.7 515.4 704.9 515.4 705.0 515.4 705.2 515.4 705.4 515.4 705.6 515.4 705.8 515.4 705.9 515.4 706.1 515.4 706.3 515.4 706.5 515.4 706.7 515.4 706.8 515.3 707.0 515.3 707.2 515.3 707.4 515.3 707.6 515.3 707.7 515.3 707.9 515.4 708.1 515.4 708.3 515.4 708.5 515.4 708.6 515.4 708.8 515.4 709.0 515.5 709.2 515.6 709.4 515.6 709.5 515.7 709.7 515.8 709.9 515.9 710.1 515.9 710.3 516.0 710.4 516.1 710.6 516.1 710.8 516.2 711.0 516.3 711.2 516.3 711.3 516.4 711.5 516.4 711.7 516.5 711.9 516.5 712.1 516.5 712.2 516.5 712.4 516.4 712.6 516.2 712.8 516.1 713.0 516.0 713.1 515.8 713.3 515.6 713.5 515.4 713.7 515.2 713.9 515.0 714.0 514.7 714.2 514.5 714.4 514.2 714.6 513.9 714.8 513.6 714.9 513.3 715.1 513.1 715.3 512.9 715.5 512.7 715.7 512.6 715.8 512.5 716.0 512.5 716.2 512.5 716.4 512.6 716.6 512.8 716.7 513.0 716.9 513.3 717.1 513.6 717.3 513.9 717.5 514.3 717.6 514.7 717.8 515.1 718.0 515.6 718.2 516.0 718.4 516.5 718.5 516.9 718.7 517.4 718.9 517.8 719.1 518.1 719.3 518.4 719.4 518.7 719.6 518.9 719.8 519.0 720.0 519.1 720.2 519.1 720.3 519.0 720.5 518.9 720.7 518.7 720.9 518.5 721.1 518.2 721.2 517.9 721.4 517.5 721.6 517.2 721.8 516.8 722.0 516.4 722.1 516.0 722.3 515.7 722.5 515.3 722.7 515.0 722.9 514.7 723.0 514.5 723.2 514.3 723.4 514.1 723.6 514.0 723.8 513.9 723.9 513.8 724.1 513.8 724.3 513.8 724.5 513.9 724.7 514.0 724.8 514.1 725.0 514.2 725.2 514.4 725.4 514.5 725.6 514.7 725.7 514.9 725.9 515.1 726.1 515.3 726.3 515.4 726.5 515.6 726.6 515.7 726.8 515.8 727.0 515.9 727.2 516.0 727.4 516.1 727.5 516.1 727.7 516.1 727.9 516.0 728.1 516.0 728.3 515.9 728.4 515.8 728.6 515.7 728.8 515.6 729.0 515.5 729.2 515.3 729.3 515.2 729.5 515.1 729.7 515.0 729.9 514.9 730.1 514.8 730.2 514.8 730.4 514.7 730.6 514.7 730.8 514.6 731.0 514.6 731.1 514.6 731.3 514.6 731.5 514.6 731.7 514.6 731.9 514.6 732.0 514.7 732.2 514.8 732.4 514.9 732.6 515.0 732.8 515.2 732.9 515.4 733.1 515.5 733.3 515.7 733.5 515.8 733.7 516.0 733.8 516.2 734.0 516.3 734.2 516.5 734.4 516.6 734.6 516.8 734.7 516.9 734.9 517.0 735.1 517.1 735.3 517.2 735.5 517.2 735.6 517.3 735.8 517.2 736.0 517.2 736.2 517.2 736.4 517.1 736.5 517.0 736.7 516.9 736.9 516.8 737.1 516.6 737.3 516.4 737.4 516.2 737.6 516.0 737.8 515.9 738.0 515.7 738.2 515.5 738.3 515.3 738.5 515.1 738.7 514.9 738.9 514.7 739.1 514.6 739.2 514.5 739.4 514.3 739.6 514.2 739.8 514.2 740.0 514.1 740.1 514.0 740.3 514.0 740.5 514.0 740.7 513.9 740.9 514.0 741.0 514.0 741.2 514.1 741.4 514.2 741.6 514.4 741.8 514.5 741.9 514.7 742.1 514.8 742.3 515.0 742.5 515.1 742.7 515.2 742.8 515.4 743.0 515.5 743.2 515.6 743.4 515.7 743.6 515.8 743.7 515.8 743.9 515.9 744.1 515.9 744.3 516.0 744.5 516.0 744.6 516.0 744.8 516.1 745.0 516.1 745.2 516.1 745.4 516.1 745.5 516.1 745.7 516.1 745.9 516.1 746.1 516.0 746.3 516.0 746.4 515.9 746.6 515.9 746.8 515.8 747.0 515.8 747.2 515.8 747.3 515.7 747.5 515.7 747.7 515.7 747.9 515.8 748.1 515.8 748.2 515.8 748.4 515.8 748.6 515.8 748.8 515.8 749.0 515.8 749.1 515.9 749.3 515.9 749.5 515.9 749.7 515.9 749.9 515.9 750.0 515.9 750.2 516.0 750.4 516.0 750.6 516.0 750.8 516.0 750.9 516.0 751.1 515.9 751.3 515.9 751.5 515.8 751.7 515.6 751.8 515.5 752.0 515.3 752.2 515.2 752.4 515.1 752.6 515.0 752.7 514.9 752.9 514.8 753.1 514.7 753.3 514.6 753.5 514.6 753.6 514.5 753.8 514.4 754.0 514.3 754.2 514.3 754.4 514.2 754.5 514.3 754.7 514.3 754.9 514.3 755.1 514.4 755.3 514.4 755.4 514.5 755.6 514.6 755.8 514.7 756.0 514.8 756.2 515.0 756.3 515.1 756.5 515.2 756.7 515.4 756.9 515.5 757.1 515.7 757.2 515.9 757.4 516.1 757.6 516.3 757.8 516.4 758.0 516.6 758.1 516.7 758.3 516.9 758.5 517.0 758.7 517.1 758.9 517.1 759.0 517.2 759.2 517.2 759.4 517.2 759.6 517.2 759.8 517.1 759.9 517.0 760.1 516.9 760.3 516.8 760.5 516.7 760.7 516.6 760.8 516.4 761.0 516.3 761.2 516.1 761.4 515.9 761.6 515.7 761.7 515.5 761.9 515.3 762.1 515.1 762.3 514.9 762.5 514.8 762.6 514.6 762.8 514.5 763.0 514.4 763.2 514.3 763.4 514.2 763.5 514.1 763.7 514.1 763.9 514.0 764.1 514.0 764.3 514.0 764.4 514.0 764.6 514.0 764.8 514.1 765.0 514.1 765.2 514.2 765.3 514.3 765.5 514.5 765.7 514.6 765.9 514.7 766.1 514.9 766.2 515.0 766.4 515.2 766.6 515.4 766.8 515.5 767.0 515.7 767.1 515.8 767.3 515.9 767.5 516.0 767.7 516.1 767.9 516.2 768.0 516.2 768.2 516.3 768.4 516.3 768.6 516.4 768.8 516.4 768.9 516.4 769.1 516.4 769.3 516.4 769.5 516.4 769.7 516.3 769.8 516.3 770.0 516.2 770.2 516.2 770.4 516.1 770.6 516.0 770.7 516.0 770.9 515.9 771.1 515.8 771.3 515.7 771.5 515.6 771.6 515.5 771.8 515.4 772.0 515.3 772.2 515.2 772.4 515.1 772.5 515.0 772.7 514.9 772.9 514.8 773.1 514.7 773.3 514.7 773.4 514.7 773.6 514.7 773.8 514.7 774.0 514.7 774.2 514.8 774.3 514.8 774.5 514.9 774.7 514.9 774.9 515.0 775.1 515.1 775.2 515.2 775.4 515.3 775.6 515.4 775.8 515.6 776.0 515.7 776.1 515.9 776.3 516.1 776.5 516.2 776.7 516.4 776.9 516.5 777.0 516.6 777.2 516.7 777.4 516.8 777.6 516.9 777.8 516.9 777.9 517.0 778.1 517.0 778.3 517.0 778.5 516.9 778.7 516.8 778.8 516.7 779.0 516.6 779.2 516.5 779.4 516.3 779.6 516.1 779.7 515.9 779.9 515.7 780.1 515.5 780.3 515.2 780.5 515.0 780.6 514.8 780.8 514.6 781.0 514.4 781.2 514.2 781.4 514.1 781.5 514.0 781.7 513.9 781.9 513.8 782.1 513.7 782.3 513.6 782.4 513.7 782.6 513.7 782.8 513.8 783.0 513.9 783.2 514.1 783.3 514.2 783.5 514.4 783.7 514.5 783.9 514.7 784.1 514.9 784.2 515.1 784.4 515.3 784.6 515.5 784.8 515.7 785.0 515.9 785.1 516.1 785.3 516.2 785.5 516.3 785.7 516.5 785.9 516.5 786.0 516.6 786.2 516.6 786.4 516.6 786.6 516.6 786.8 516.6 786.9 516.6 787.1 516.6 787.3 516.5 787.5 516.5 787.7 516.4 787.8 516.3 788.0 516.3 788.2 516.2 788.4 516.1 788.6 516.0 788.7 515.9 788.9 515.8 789.1 515.7 789.3 515.6 789.5 515.4 789.6 515.4 789.8 515.3 790.0 515.2 790.2 515.1 790.4 515.1 790.5 515.0 790.7 515.0 790.9 515.0 791.1 515.0 791.3 515.1 791.4 515.1 791.6 515.2 791.8 515.3 792.0 515.3 792.2 515.3 792.3 515.3 792.5 515.4 792.7 515.4 792.9 515.4 793.1 515.4 793.2 515.4 793.4 515.5 793.6 515.5 793.8 515.5 794.0 515.6 794.1 515.6 794.3 515.6 794.5 515.6 794.7 515.6 794.9 515.6 795.0 515.6 795.2 515.6 795.4 515.6 795.6 515.6 795.8 515.6 795.9 515.6 796.1 515.6 796.3 515.6 796.5 515.6 796.7 515.6 796.8 515.6 797.0 515.6 797.2 515.6 797.4 515.6 797.6 515.5 797.7 515.5 797.9 515.5 798.1 515.6 798.3 515.6 798.5 515.6 798.6 515.6 798.8 515.6 799.0 515.5 799.2 515.5 799.4 515.5 799.5 515.4 799.7 515.4 799.9 515.4 800.1 515.5 800.3 515.5 800.4 515.5 800.6 515.6 800.8 515.6 801.0 515.7 801.2 515.7 801.3 515.7 801.5 515.7 801.7 515.6 801.9 515.6 802.1 515.6 802.2 515.5 802.4 515.5 802.6 515.4 802.8 515.4 803.0 515.4 803.1 515.4 803.3 515.4 803.5 515.3 803.7 515.3 803.9 515.3 804.0 515.3 804.2 515.3 804.4 515.3 804.6 515.3 804.8 515.3 804.9 515.3 805.1 515.3 805.3 515.3 805.5 515.4 805.7 515.4 805.8 515.4 806.0 515.5 806.2 515.5 806.4 515.5 806.6 515.6 806.7 515.6 806.9 515.7 807.1 515.7 807.3 515.7 807.5 515.8 807.6 515.8 807.8 515.7 808.0 515.7 808.2 515.6 808.4 515.6 808.5 515.5 808.7 515.5 808.9 515.4 809.1 515.4 809.3 515.4 809.4 515.4 809.6 515.4 809.8 515.4 810.0 515.4 810.2 515.5 810.3 515.5 810.5 515.5 810.7 515.6 810.9 515.6 811.1 515.6 811.2 515.6 811.4 515.6 811.6 515.6 811.8 515.6 812.0 515.6 812.1 515.5 812.3 515.5 812.5 515.5 812.7 515.5 812.9 515.5 813.0 515.5 813.2 515.5 813.4 515.5 813.6 515.5 813.8 515.5 813.9 515.5 814.1 515.5 814.3 515.5 814.5 515.5 814.7 515.5 814.8 515.5 815.0 515.5 815.2 515.5 815.4 515.5 815.6 515.5 815.7 515.6 815.9 515.6 816.1 515.6 816.3 515.6 816.5 515.6 816.6 515.6 816.8 515.6 817.0 515.7 817.2 515.6 817.4 515.6 817.5 515.6 817.7 515.6 817.9 515.6 818.1 515.6 818.3 515.6 818.4 515.6 818.6 515.6 818.8 515.6 819.0 515.6 819.2 515.5 819.3 515.5 819.5 515.5 819.7 515.5 819.9 515.5 820.1 515.5 820.2 515.5 820.4 515.5 820.6 515.5 820.8 515.4 821.0 515.4 821.1 515.4 821.3 515.4 821.5 515.4 821.7 515.4 821.9 515.4 822.0 515.5 822.2 515.5 822.4 515.5 822.6 515.6 822.8 515.6 822.9 515.6 823.1 515.6 823.3 515.6 823.5 515.6 823.7 515.7 823.8 515.7 824.0 515.7 824.2 515.7 824.4 515.7 824.6 515.7 824.7 515.7 824.9 515.7 825.1 515.7 825.3 515.7 825.5 515.6 825.6 515.6 825.8 515.5 826.0 515.5 826.2 515.5 826.4 515.4 826.5 515.4 826.7 515.4 826.9 515.4 827.1 515.4 827.3 515.4 827.4 515.5 827.6 515.5 827.8 515.5 828.0 515.5 828.2 515.5 828.3 515.5 828.5 515.5 828.7 515.5 828.9 515.5 829.1 515.5 829.2 515.5 829.4 515.5 829.6 515.5 829.8 515.5 830.0 515.5 830.1 515.5 830.3 515.6 830.5 515.6 830.7 515.6 830.9 515.6 831.0 515.6 831.2 515.6 831.4 515.6 831.6 515.5 831.8 515.5 831.9 515.5 832.1 515.5 832.3 515.4 832.5 515.4 832.7 515.4 832.8 515.4 833.0 515.5 833.2 515.5 833.4 515.5 833.6 515.5 833.7 515.5 833.9 515.5 834.1 515.6 834.3 515.6 834.5 515.6 834.6 515.6 834.8 515.6 835.0 515.6 835.2 515.6 835.4 515.6 835.5 515.6 835.7 515.6 835.9 515.6 836.1 515.6 836.3 515.6 836.4 515.6 836.6 515.5 836.8 515.5 837.0 515.5 837.2 515.5 837.3 515.5 837.5 515.5 837.7 515.5 837.9 515.5 838.1 515.5 838.2 515.5 838.4 515.4 838.6 515.4 838.8 515.4 839.0 515.4 839.1 515.4 839.3 515.4 839.5 515.4 839.7 515.4 839.9 515.4 840.0 515.4 840.2 515.5 840.4 515.5 840.6 515.5 840.8 515.5 840.9 515.5 841.1 515.5 841.3 515.5 841.5 515.5 841.7 515.5 841.8 515.5 842.0 515.5 842.2 515.5 842.4 515.4 842.6 515.4 842.7 515.4 842.9 515.5 843.1 515.5 843.3 515.5 843.5 515.5 843.6 515.5 843.8 515.5 844.0 515.4 844.2 515.4 844.4 515.4 844.5 515.5 844.7 515.5" fill="none" stroke="#f2c2ab" stroke-width="0.6" stroke-linejoin="round"/><path d="M570.5 515.5 H844.5" stroke="#e9a080" stroke-width="0.6" opacity="0.6"/></svg><rect x="570.5" y="472.5" width="274.0" height="77.0" fill="none" stroke="#2a2a2a" stroke-width="1.15"/><path d="M570.5 549.5 v-2.7 M570.5 472.5 v2.7" stroke="#2a2a2a" stroke-width="1"/><path d="M615.5 549.5 v-2.7 M615.5 472.5 v2.7" stroke="#2a2a2a" stroke-width="1"/><path d="M660.5 549.5 v-2.7 M660.5 472.5 v2.7" stroke="#2a2a2a" stroke-width="1"/><path d="M705.5 549.5 v-2.7 M705.5 472.5 v2.7" stroke="#2a2a2a" stroke-width="1"/><path d="M750.5 549.5 v-2.7 M750.5 472.5 v2.7" stroke="#2a2a2a" stroke-width="1"/><path d="M795.5 549.5 v-2.7 M795.5 472.5 v2.7" stroke="#2a2a2a" stroke-width="1"/><path d="M840.5 549.5 v-2.7 M840.5 472.5 v2.7" stroke="#2a2a2a" stroke-width="1"/><path d="M570.5 481.5 h2.7 M844.5 481.5 h-2.7" stroke="#2a2a2a" stroke-width="1"/><text x="567.1" y="485.4" font-size="11" text-anchor="end" fill="#2a2a2a">4</text><path d="M570.5 498.5 h2.7 M844.5 498.5 h-2.7" stroke="#2a2a2a" stroke-width="1"/><text x="567.1" y="502.4" font-size="11" text-anchor="end" fill="#2a2a2a">2</text><path d="M570.5 515.5 h2.7 M844.5 515.5 h-2.7" stroke="#2a2a2a" stroke-width="1"/><text x="567.1" y="519.4" font-size="11" text-anchor="end" fill="#2a2a2a">0</text><path d="M570.5 532.5 h2.7 M844.5 532.5 h-2.7" stroke="#2a2a2a" stroke-width="1"/><text x="567.1" y="536.4" font-size="11" text-anchor="end" fill="#2a2a2a">-2</text><path d="M570.5 549.5 h2.7 M844.5 549.5 h-2.7" stroke="#2a2a2a" stroke-width="1"/><text x="567.1" y="553.4" font-size="11" text-anchor="end" fill="#2a2a2a">-4</text><text x="571.1" y="468.8" font-size="11" fill="#2a2a2a">×</text><text x="580.1" y="468.8" font-size="10.5" fill="#2a2a2a">10</text><text x="591.6" y="464.3" font-size="8" fill="#2a2a2a">4</text><text transform="translate(553.7,511.2) rotate(-90)" font-size="11.5" text-anchor="middle" fill="#2a2a2a">IMF 4</text><rect x="570.5" y="561.5" width="274.0" height="77.0" fill="#fff"/><path d="M570.5 561.5 V638.5" stroke="#d8d8d8" stroke-width="1"/><path d="M615.5 561.5 V638.5" stroke="#d8d8d8" stroke-width="1"/><path d="M660.5 561.5 V638.5" stroke="#d8d8d8" stroke-width="1"/><path d="M705.5 561.5 V638.5" stroke="#d8d8d8" stroke-width="1"/><path d="M750.5 561.5 V638.5" stroke="#d8d8d8" stroke-width="1"/><path d="M795.5 561.5 V638.5" stroke="#d8d8d8" stroke-width="1"/><path d="M840.5 561.5 V638.5" stroke="#d8d8d8" stroke-width="1"/><path d="M570.5 570.5 H844.5" stroke="#d8d8d8" stroke-width="1"/><path d="M570.5 587.5 H844.5" stroke="#d8d8d8" stroke-width="1"/><path d="M570.5 604.5 H844.5" stroke="#d8d8d8" stroke-width="1"/><path d="M570.5 621.5 H844.5" stroke="#d8d8d8" stroke-width="1"/><path d="M570.5 638.5 H844.5" stroke="#d8d8d8" stroke-width="1"/><svg x="570.5" y="561.5" width="274.0" height="77.0" viewBox="570.5 561.5 274.0 77.0" overflow="hidden"><path d="M570.6 602.1L571.0 602.1 571.3 602.1 571.7 602.2 572.0 602.2 572.4 602.2 572.8 602.2 573.1 602.3 573.5 602.3 573.8 602.3 574.2 602.4 574.6 602.4 574.9 602.4 575.3 602.4 575.6 602.4 576.0 602.4 576.4 602.4 576.7 602.4 577.1 602.4 577.4 602.4 577.8 602.4 578.2 602.4 578.5 602.4 578.9 602.4 579.2 602.4 579.6 602.4 580.0 602.4 580.3 602.3 580.7 602.3 581.0 602.3 581.4 602.3 581.8 602.3 582.1 602.3 582.5 602.3 582.8 602.2 583.2 602.2 583.6 602.2 583.9 602.2 584.3 602.2 584.6 602.2 585.0 602.2 585.4 602.1 585.7 602.1 586.1 602.1 586.4 602.1 586.8 602.1 587.2 602.1 587.5 602.1 587.9 602.1 588.2 602.1 588.6 602.1 589.0 602.1 589.3 602.1 589.7 602.1 590.0 602.1 590.4 602.1 590.8 602.1 591.1 602.1 591.5 602.1 591.8 602.1 592.2 602.1 592.6 602.1 592.9 602.1 593.3 602.1 593.6 602.1 594.0 602.1 594.4 602.1 594.7 602.1 595.1 602.1 595.4 602.1 595.8 602.1 596.2 602.1 596.5 602.1 596.9 602.0 597.2 602.0 597.6 602.0 598.0 602.0 598.3 602.0 598.7 602.0 599.0 602.0 599.4 602.0 599.8 602.0 600.1 602.0 600.5 602.0 600.8 602.0 601.2 602.0 601.6 602.0 601.9 602.0 602.3 602.0 602.6 602.0 603.0 602.0 603.4 602.0 603.7 602.0 604.1 602.0 604.4 602.0 604.8 602.0 605.2 602.0 605.5 602.0 605.9 602.0 606.2 602.0 606.6 602.0 607.0 602.0 607.3 602.0 607.7 602.1 608.0 602.1 608.4 602.1 608.8 602.1 609.1 602.1 609.5 602.1 609.8 602.1 610.2 602.2 610.6 602.2 610.9 602.2 611.3 602.2 611.6 602.2 612.0 602.3 612.4 602.3 612.7 602.3 613.1 602.3 613.4 602.3 613.8 602.3 614.2 602.3 614.5 602.3 614.9 602.3 615.2 602.3 615.6 602.4 616.0 602.4 616.3 602.4 616.7 602.4 617.0 602.4 617.4 602.4 617.8 602.4 618.1 602.4 618.5 602.4 618.8 602.4 619.2 602.4 619.6 602.4 619.9 602.4 620.3 602.4 620.6 602.4 621.0 602.4 621.4 602.4 621.7 602.4 622.1 602.4 622.4 602.4 622.8 602.4 623.2 602.4 623.5 602.4 623.9 602.4 624.2 602.4 624.6 602.4 625.0 602.4 625.3 602.5 625.7 602.5 626.0 602.5 626.4 602.5 626.8 602.5 627.1 602.5 627.5 602.5 627.8 602.5 628.2 602.5 628.6 602.5 628.9 602.5 629.3 602.5 629.6 602.5 630.0 602.5 630.4 602.5 630.7 602.6 631.1 602.6 631.4 602.6 631.8 602.6 632.2 602.6 632.5 602.6 632.9 602.6 633.2 602.6 633.6 602.6 634.0 602.6 634.3 602.6 634.7 602.6 635.0 602.6 635.4 602.6 635.8 602.6 636.1 602.6 636.5 602.6 636.8 602.6 637.2 602.6 637.6 602.6 637.9 602.6 638.3 602.6 638.6 602.6 639.0 602.6 639.4 602.6 639.7 602.6 640.1 602.6 640.4 602.6 640.8 602.5 641.2 602.5 641.5 602.5 641.9 602.5 642.2 602.5 642.6 602.5 643.0 602.4 643.3 602.4 643.7 602.4 644.0 602.4 644.4 602.4 644.8 602.3 645.1 602.3 645.5 602.3 645.8 602.3 646.2 602.2 646.6 602.2 646.9 602.2 647.3 602.2 647.6 602.2 648.0 602.1 648.4 602.1 648.7 602.1 649.1 602.1 649.4 602.1 649.8 602.1 650.2 602.0 650.5 602.0 650.9 602.0 651.2 602.0 651.6 602.0 652.0 602.0 652.3 602.0 652.7 602.0 653.0 602.0 653.4 602.0 653.8 602.0 654.1 602.0 654.5 602.0 654.8 602.0 655.2 602.1 655.6 602.1 655.9 602.1 656.3 602.1 656.6 602.1 657.0 602.2 657.4 602.2 657.7 602.2 658.1 602.3 658.4 602.3 658.8 602.3 659.2 602.3 659.5 602.4 659.9 602.4 660.2 602.4 660.6 602.5 661.0 602.5 661.3 602.5 661.7 602.5 662.0 602.6 662.4 602.6 662.7 602.6 663.1 602.6 663.5 602.6 663.8 602.7 664.2 602.7 664.5 602.7 664.9 602.7 665.3 602.7 665.6 602.7 666.0 602.7 666.3 602.7 666.7 602.7 667.1 602.6 667.4 602.6 667.8 602.6 668.1 602.6 668.5 602.5 668.9 602.5 669.2 602.4 669.6 602.4 669.9 602.4 670.3 602.3 670.7 602.3 671.0 602.2 671.4 602.2 671.7 602.1 672.1 602.1 672.5 602.1 672.8 602.1 673.2 602.0 673.5 602.0 673.9 602.0 674.3 602.0 674.6 602.0 675.0 602.0 675.3 602.0 675.7 602.0 676.1 602.0 676.4 602.0 676.8 602.0 677.1 602.0 677.5 602.0 677.9 602.1 678.2 602.1 678.6 602.1 678.9 602.1 679.3 602.1 679.7 602.1 680.0 602.1 680.4 602.1 680.7 602.2 681.1 602.2 681.5 602.2 681.8 602.2 682.2 602.2 682.5 602.2 682.9 602.3 683.3 602.3 683.6 602.3 684.0 602.3 684.3 602.3 684.7 602.3 685.1 602.4 685.4 602.4 685.8 602.4 686.1 602.4 686.5 602.4 686.9 602.4 687.2 602.4 687.6 602.5 687.9 602.5 688.3 602.5 688.7 602.5 689.0 602.5 689.4 602.5 689.7 602.5 690.1 602.5 690.5 602.5 690.8 602.5 691.2 602.5 691.5 602.5 691.9 602.5 692.3 602.5 692.6 602.5 693.0 602.5 693.3 602.5 693.7 602.4 694.1 602.4 694.4 602.4 694.8 602.4 695.1 602.3 695.5 602.3 695.9 602.3 696.2 602.2 696.6 602.2 696.9 602.2 697.3 602.1 697.7 602.1 698.0 602.1 698.4 602.1 698.7 602.0 699.1 602.0 699.5 602.0 699.8 602.0 700.2 602.0 700.5 602.0 700.9 602.0 701.3 602.0 701.6 602.0 702.0 602.1 702.3 602.1 702.7 602.1 703.1 602.1 703.4 602.2 703.8 602.2 704.1 602.2 704.5 602.3 704.9 602.3 705.2 602.3 705.6 602.4 705.9 602.4 706.3 602.4 706.7 602.4 707.0 602.5 707.4 602.5 707.7 602.5 708.1 602.5 708.5 602.5 708.8 602.5 709.2 602.5 709.5 602.5 709.9 602.5 710.3 602.5 710.6 602.5 711.0 602.5 711.3 602.5 711.7 602.5 712.1 602.4 712.4 602.4 712.8 602.4 713.1 602.4 713.5 602.4 713.9 602.3 714.2 602.3 714.6 602.3 714.9 602.3 715.3 602.2 715.7 602.2 716.0 602.2 716.4 602.2 716.7 602.2 717.1 602.2 717.5 602.1 717.8 602.1 718.2 602.1 718.5 602.1 718.9 602.1 719.3 602.1 719.6 602.1 720.0 602.1 720.3 602.1 720.7 602.1 721.1 602.1 721.4 602.1 721.8 602.1 722.1 602.2 722.5 602.2 722.9 602.2 723.2 602.2 723.6 602.2 723.9 602.3 724.3 602.3 724.7 602.3 725.0 602.4 725.4 602.4 725.7 602.4 726.1 602.5 726.5 602.5 726.8 602.5 727.2 602.6 727.5 602.6 727.9 602.6 728.3 602.7 728.6 602.7 729.0 602.7 729.3 602.8 729.7 602.8 730.1 602.8 730.4 602.9 730.8 602.9 731.1 602.9 731.5 602.9 731.9 603.0 732.2 603.0 732.6 603.0 732.9 603.0 733.3 603.0 733.7 603.0 734.0 603.0 734.4 603.0 734.7 603.0 735.1 603.0 735.5 603.0 735.8 603.0 736.2 603.0 736.5 603.0 736.9 603.0 737.3 602.9 737.6 602.9 738.0 602.8 738.3 602.8 738.7 602.8 739.1 602.7 739.4 602.7 739.8 602.6 740.1 602.5 740.5 602.5 740.9 602.4 741.2 602.4 741.6 602.3 741.9 602.3 742.3 602.2 742.7 602.2 743.0 602.1 743.4 602.1 743.7 602.0 744.1 602.0 744.5 601.9 744.8 601.9 745.2 601.9 745.5 601.9 745.9 601.9 746.3 601.8 746.6 601.8 747.0 601.8 747.3 601.8 747.7 601.9 748.1 601.9 748.4 601.9 748.8 602.0 749.1 602.0 749.5 602.1 749.9 602.2 750.2 602.3 750.6 602.4 750.9 602.5 751.3 602.6 751.7 602.7 752.0 602.8 752.4 602.9 752.7 603.0 753.1 603.1 753.5 603.2 753.8 603.3 754.2 603.5 754.5 603.6 754.9 603.7 755.3 603.8 755.6 603.9 756.0 604.0 756.3 604.1 756.7 604.1 757.1 604.2 757.4 604.3 757.8 604.3 758.1 604.4 758.5 604.4 758.9 604.5 759.2 604.5 759.6 604.5 759.9 604.5 760.3 604.5 760.7 604.5 761.0 604.4 761.4 604.4 761.7 604.3 762.1 604.3 762.5 604.2 762.8 604.1 763.2 604.1 763.5 604.0 763.9 603.9 764.3 603.8 764.6 603.7 765.0 603.6 765.3 603.5 765.7 603.3 766.1 603.2 766.4 603.1 766.8 603.0 767.1 602.9 767.5 602.8 767.9 602.7 768.2 602.6 768.6 602.5 768.9 602.4 769.3 602.3 769.7 602.2 770.0 602.1 770.4 602.0 770.7 602.0 771.1 601.9 771.5 601.9 771.8 601.9 772.2 601.8 772.5 601.8 772.9 601.8 773.3 601.8 773.6 601.8 774.0 601.9 774.3 601.9 774.7 601.9 775.1 601.9 775.4 601.9 775.8 602.0 776.1 602.0 776.5 602.0 776.9 602.1 777.2 602.1 777.6 602.2 777.9 602.2 778.3 602.2 778.7 602.3 779.0 602.3 779.4 602.4 779.7 602.4 780.1 602.5 780.5 602.5 780.8 602.6 781.2 602.6 781.5 602.7 781.9 602.7 782.3 602.8 782.6 602.8 783.0 602.8 783.3 602.9 783.7 602.9 784.1 602.9 784.4 603.0 784.8 603.0 785.1 603.0 785.5 603.0 785.9 603.0 786.2 603.0 786.6 603.0 786.9 603.0 787.3 603.0 787.7 603.0 788.0 603.0 788.4 603.0 788.7 603.0 789.1 603.0 789.5 603.0 789.8 603.0 790.2 602.9 790.5 602.9 790.9 602.9 791.3 602.9 791.6 602.9 792.0 602.8 792.3 602.8 792.7 602.8 793.1 602.7 793.4 602.7 793.8 602.7 794.1 602.6 794.5 602.6 794.9 602.6 795.2 602.5 795.6 602.5 795.9 602.5 796.3 602.4 796.7 602.4 797.0 602.4 797.4 602.3 797.7 602.3 798.1 602.3 798.5 602.2 798.8 602.2 799.2 602.2 799.5 602.2 799.9 602.1 800.3 602.1 800.6 602.1 801.0 602.1 801.3 602.0 801.7 602.0 802.1 602.0 802.4 602.0 802.8 602.0 803.1 602.0 803.5 601.9 803.9 601.9 804.2 601.9 804.6 601.9 804.9 601.9 805.3 601.9 805.7 601.9 806.0 601.9 806.4 601.9 806.7 601.9 807.1 601.9 807.5 602.0 807.8 602.0 808.2 602.0 808.5 602.0 808.9 602.0 809.3 602.0 809.6 602.1 810.0 602.1 810.3 602.1 810.7 602.1 811.1 602.1 811.4 602.2 811.8 602.2 812.1 602.2 812.5 602.2 812.9 602.3 813.2 602.3 813.6 602.3 813.9 602.3 814.3 602.3 814.7 602.4 815.0 602.4 815.4 602.4 815.7 602.4 816.1 602.4 816.5 602.4 816.8 602.4 817.2 602.4 817.5 602.4 817.9 602.4 818.3 602.4 818.6 602.4 819.0 602.4 819.3 602.4 819.7 602.4 820.1 602.4 820.4 602.4 820.8 602.4 821.1 602.4 821.5 602.4 821.9 602.4 822.2 602.4 822.6 602.4 822.9 602.4 823.3 602.4 823.7 602.4 824.0 602.4 824.4 602.4 824.7 602.4 825.1 602.4 825.5 602.4 825.8 602.4 826.2 602.4 826.5 602.4 826.9 602.4 827.3 602.4 827.6 602.4 828.0 602.4 828.3 602.4 828.7 602.4 829.1 602.4 829.4 602.4 829.8 602.4 830.1 602.4 830.5 602.4 830.9 602.4 831.2 602.4 831.6 602.4 831.9 602.3 832.3 602.3 832.7 602.3 833.0 602.3 833.4 602.3 833.7 602.3 834.1 602.3 834.5 602.3 834.8 602.3 835.2 602.3 835.5 602.3 835.9 602.3 836.3 602.3 836.6 602.3 837.0 602.3 837.3 602.2 837.7 602.2 838.1 602.2 838.4 602.2 838.8 602.2 839.1 602.2 839.5 602.2 839.9 602.2 840.2 602.2 840.6 602.2 840.9 602.1 841.3 602.1 841.7 602.1 842.0 602.1 842.4 602.1 842.7 602.1 843.1 602.1 843.5 602.1 843.8 602.1 844.2 602.1 844.5 602.1" fill="none" stroke="#d95319" stroke-width="1.6" stroke-linejoin="round"/></svg><rect x="570.5" y="561.5" width="274.0" height="77.0" fill="none" stroke="#2a2a2a" stroke-width="1.15"/><path d="M570.5 638.5 v-2.7 M570.5 561.5 v2.7" stroke="#2a2a2a" stroke-width="1"/><path d="M615.5 638.5 v-2.7 M615.5 561.5 v2.7" stroke="#2a2a2a" stroke-width="1"/><path d="M660.5 638.5 v-2.7 M660.5 561.5 v2.7" stroke="#2a2a2a" stroke-width="1"/><path d="M705.5 638.5 v-2.7 M705.5 561.5 v2.7" stroke="#2a2a2a" stroke-width="1"/><path d="M750.5 638.5 v-2.7 M750.5 561.5 v2.7" stroke="#2a2a2a" stroke-width="1"/><path d="M795.5 638.5 v-2.7 M795.5 561.5 v2.7" stroke="#2a2a2a" stroke-width="1"/><path d="M840.5 638.5 v-2.7 M840.5 561.5 v2.7" stroke="#2a2a2a" stroke-width="1"/><path d="M570.5 570.5 h2.7 M844.5 570.5 h-2.7" stroke="#2a2a2a" stroke-width="1"/><text x="567.1" y="574.4" font-size="11" text-anchor="end" fill="#2a2a2a">4</text><path d="M570.5 587.5 h2.7 M844.5 587.5 h-2.7" stroke="#2a2a2a" stroke-width="1"/><text x="567.1" y="591.4" font-size="11" text-anchor="end" fill="#2a2a2a">2</text><path d="M570.5 604.5 h2.7 M844.5 604.5 h-2.7" stroke="#2a2a2a" stroke-width="1"/><text x="567.1" y="608.4" font-size="11" text-anchor="end" fill="#2a2a2a">0</text><path d="M570.5 621.5 h2.7 M844.5 621.5 h-2.7" stroke="#2a2a2a" stroke-width="1"/><text x="567.1" y="625.4" font-size="11" text-anchor="end" fill="#2a2a2a">-2</text><path d="M570.5 638.5 h2.7 M844.5 638.5 h-2.7" stroke="#2a2a2a" stroke-width="1"/><text x="567.1" y="642.4" font-size="11" text-anchor="end" fill="#2a2a2a">-4</text><text x="571.1" y="557.8" font-size="11" fill="#2a2a2a">×</text><text x="580.1" y="557.8" font-size="10.5" fill="#2a2a2a">10</text><text x="591.6" y="553.3" font-size="8" fill="#2a2a2a">4</text><text transform="translate(553.7,600.2) rotate(-90)" font-size="11.5" text-anchor="middle" fill="#2a2a2a">Residual</text><text x="570.6" y="652.2" font-size="11" text-anchor="middle" fill="#2a2a2a">0</text><text x="615.6" y="652.2" font-size="11" text-anchor="middle" fill="#2a2a2a">500</text><text x="660.6" y="652.2" font-size="11" text-anchor="middle" fill="#2a2a2a">1000</text><text x="705.5" y="652.2" font-size="11" text-anchor="middle" fill="#2a2a2a">1500</text><text x="750.5" y="652.2" font-size="11" text-anchor="middle" fill="#2a2a2a">2000</text><text x="795.5" y="652.2" font-size="11" text-anchor="middle" fill="#2a2a2a">2500</text><text x="840.5" y="652.2" font-size="11" text-anchor="middle" fill="#2a2a2a">3000</text><text x="708" y="667" font-size="12" text-anchor="middle" fill="#2a2a2a">Samples</text><rect x="946.5" y="214.5" width="290.5" height="419.0" fill="#fff"/><path d="M946.5 214.5 V633.5" stroke="#d8d8d8" stroke-width="1"/><path d="M994.5 214.5 V633.5" stroke="#d8d8d8" stroke-width="1"/><path d="M1041.5 214.5 V633.5" stroke="#d8d8d8" stroke-width="1"/><path d="M1089.5 214.5 V633.5" stroke="#d8d8d8" stroke-width="1"/><path d="M1137.5 214.5 V633.5" stroke="#d8d8d8" stroke-width="1"/><path d="M1184.5 214.5 V633.5" stroke="#d8d8d8" stroke-width="1"/><path d="M1232.5 214.5 V633.5" stroke="#d8d8d8" stroke-width="1"/><path d="M946.5 214.5 H1237.0" stroke="#d8d8d8" stroke-width="1"/><path d="M946.5 261.5 H1237.0" stroke="#d8d8d8" stroke-width="1"/><path d="M946.5 307.5 H1237.0" stroke="#d8d8d8" stroke-width="1"/><path d="M946.5 354.5 H1237.0" stroke="#d8d8d8" stroke-width="1"/><path d="M946.5 400.5 H1237.0" stroke="#d8d8d8" stroke-width="1"/><path d="M946.5 447.5 H1237.0" stroke="#d8d8d8" stroke-width="1"/><path d="M946.5 493.5 H1237.0" stroke="#d8d8d8" stroke-width="1"/><path d="M946.5 540.5 H1237.0" stroke="#d8d8d8" stroke-width="1"/><path d="M946.5 586.5 H1237.0" stroke="#d8d8d8" stroke-width="1"/><path d="M946.5 633.5 H1237.0" stroke="#d8d8d8" stroke-width="1"/><svg x="946.5" y="214.5" width="290.5" height="419.0" viewBox="946.5 214.5 290.5 419.0" overflow="hidden"><path d="M946.3 419.3L946.4 409.0 946.5 418.7 946.6 451.4 946.7 456.6 946.8 436.7 946.9 423.2 947.0 427.9 947.1 404.2 947.2 423.1 947.3 424.7 947.3 444.5 947.4 449.3 947.5 408.8 947.6 432.9 947.7 421.0 947.8 452.1 947.9 440.5 948.0 451.4 948.1 444.9 948.2 419.3 948.3 453.0 948.4 441.4 948.5 431.5 948.6 443.7 948.7 438.5 948.8 438.9 948.9 429.6 949.0 442.0 949.1 431.7 949.2 434.6 949.3 428.7 949.4 431.4 949.4 407.2 949.5 444.7 949.6 415.9 949.7 441.1 949.8 449.1 949.9 417.2 950.0 444.0 950.1 443.3 950.2 456.3 950.3 464.3 950.4 428.6 950.5 454.8 950.6 427.5 950.7 408.7 950.8 441.9 950.9 454.9 951.0 432.6 951.1 425.3 951.2 440.0 951.3 435.6 951.4 414.2 951.5 416.6 951.5 426.8 951.6 450.4 951.7 440.2 951.8 430.4 951.9 442.9 952.0 448.5 952.1 449.9 952.2 447.6 952.3 447.3 952.4 443.6 952.5 417.7 952.6 446.8 952.7 421.3 952.8 429.3 952.9 433.4 953.0 447.4 953.1 443.0 953.2 403.1 953.3 436.4 953.4 430.2 953.5 428.5 953.6 421.4 953.6 441.1 953.7 446.0 953.8 437.5 953.9 439.3 954.0 422.4 954.1 431.5 954.2 430.4 954.3 432.1 954.4 414.5 954.5 442.8 954.6 442.5 954.7 421.8 954.8 438.4 954.9 431.8 955.0 448.3 955.1 438.0 955.2 432.5 955.3 457.2 955.4 449.3 955.5 433.1 955.6 400.0 955.7 432.1 955.7 439.8 955.8 449.6 955.9 431.2 956.0 466.7 956.1 437.5 956.2 441.6 956.3 444.0 956.4 394.8 956.5 464.9 956.6 435.3 956.7 433.4 956.8 427.1 956.9 455.2 957.0 440.8 957.1 453.9 957.2 436.5 957.3 431.9 957.4 432.6 957.5 437.7 957.6 431.8 957.7 432.1 957.8 429.3 957.8 435.4 957.9 458.7 958.0 447.4 958.1 430.9 958.2 448.5 958.3 446.3 958.4 432.8 958.5 434.3 958.6 419.4 958.7 426.3 958.8 440.7 958.9 433.4 959.0 469.4 959.1 448.8 959.2 440.8 959.3 468.1 959.4 443.3 959.5 434.5 959.6 421.3 959.7 431.7 959.8 405.0 959.9 410.6 959.9 456.3 960.0 438.1 960.1 437.1 960.2 433.2 960.3 442.1 960.4 424.0 960.5 421.1 960.6 452.6 960.7 417.5 960.8 442.3 960.9 416.9 961.0 425.8 961.1 436.9 961.2 400.9 961.3 420.9 961.4 434.6 961.5 431.4 961.6 392.5 961.7 412.8 961.8 421.4 961.9 433.5 962.0 428.0 962.0 434.0 962.1 455.9 962.2 420.7 962.3 427.5 962.4 450.9 962.5 441.7 962.6 436.2 962.7 428.7 962.8 405.6 962.9 436.6 963.0 462.2 963.1 428.2 963.2 441.1 963.3 460.8 963.4 465.8 963.5 452.2 963.6 431.1 963.7 446.6 963.8 425.2 963.9 438.0 964.0 430.3 964.1 421.0 964.1 422.7 964.2 445.6 964.3 398.8 964.4 457.5 964.5 436.5 964.6 449.4 964.7 417.2 964.8 454.4 964.9 450.9 965.0 451.8 965.1 454.6 965.2 444.6 965.3 433.9 965.4 450.3 965.5 458.9 965.6 441.3 965.7 437.9 965.8 426.8 965.9 449.5 966.0 441.6 966.1 424.2 966.2 451.6 966.2 439.5 966.3 442.7 966.4 455.5 966.5 437.5 966.6 417.1 966.7 395.0 966.8 452.7 966.9 419.1 967.0 415.7 967.1 414.3 967.2 440.0 967.3 428.8 967.4 442.0 967.5 424.4 967.6 413.5 967.7 436.9 967.8 430.5 967.9 421.0 968.0 423.7 968.1 444.1 968.2 412.7 968.3 428.3 968.3 433.7 968.4 435.2 968.5 425.0 968.6 419.4 968.7 453.0 968.8 447.7 968.9 457.3 969.0 428.3 969.1 428.3 969.2 438.8 969.3 448.2 969.4 411.4 969.5 406.3 969.6 407.2 969.7 433.2 969.8 431.9 969.9 431.1 970.0 434.6 970.1 448.8 970.2 440.6 970.3 419.8 970.4 433.5 970.4 441.8 970.5 440.0 970.6 407.7 970.7 413.7 970.8 421.3 970.9 436.6 971.0 455.6 971.1 436.1 971.2 443.4 971.3 429.0 971.4 421.3 971.5 446.9 971.6 414.8 971.7 435.4 971.8 435.1 971.9 444.4 972.0 438.9 972.1 434.6 972.2 439.3 972.3 440.7 972.4 441.5 972.5 399.3 972.5 437.6 972.6 422.3 972.7 433.0 972.8 467.5 972.9 375.8 973.0 434.6 973.1 443.0 973.2 413.8 973.3 410.3 973.4 443.2 973.5 446.8 973.6 447.7 973.7 430.7 973.8 434.2 973.9 424.6 974.0 438.9 974.1 444.9 974.2 436.4 974.3 446.5 974.4 428.1 974.5 432.7 974.5 430.7 974.6 432.5 974.7 445.5 974.8 460.9 974.9 417.2 975.0 419.3 975.1 446.3 975.2 420.6 975.3 432.3 975.4 435.0 975.5 433.6 975.6 444.7 975.7 435.7 975.8 433.7 975.9 431.9 976.0 444.8 976.1 430.7 976.2 445.7 976.3 444.4 976.4 435.6 976.5 443.5 976.6 451.2 976.6 445.2 976.7 448.3 976.8 437.2 976.9 428.8 977.0 429.5 977.1 447.2 977.2 441.7 977.3 431.5 977.4 456.4 977.5 421.7 977.6 414.7 977.7 423.3 977.8 461.0 977.9 430.0 978.0 457.5 978.1 418.8 978.2 460.8 978.3 452.5 978.4 428.7 978.5 453.4 978.6 466.3 978.7 448.9 978.7 426.5 978.8 448.4 978.9 447.3 979.0 430.6 979.1 434.7 979.2 415.8 979.3 423.6 979.4 442.7 979.5 447.8 979.6 420.3 979.7 446.8 979.8 450.7 979.9 427.1 980.0 442.6 980.1 454.0 980.2 423.6 980.3 418.0 980.4 448.5 980.5 438.1 980.6 440.2 980.7 436.3 980.8 440.4 980.8 454.1 980.9 433.9 981.0 439.5 981.1 432.3 981.2 423.6 981.3 420.8 981.4 427.2 981.5 465.0 981.6 447.9 981.7 433.1 981.8 422.1 981.9 450.3 982.0 448.1 982.1 408.0 982.2 468.1 982.3 442.1 982.4 445.6 982.5 441.3 982.6 440.2 982.7 424.3 982.8 418.6 982.9 375.3 982.9 402.0 983.0 433.5 983.1 429.2 983.2 416.0 983.3 384.0 983.4 435.5 983.5 426.5 983.6 436.5 983.7 415.4 983.8 454.4 983.9 436.1 984.0 457.8 984.1 436.6 984.2 427.8 984.3 446.4 984.4 443.1 984.5 419.8 984.6 438.4 984.7 425.7 984.8 435.8 984.9 443.5 985.0 435.7 985.0 391.9 985.1 433.0 985.2 428.6 985.3 410.8 985.4 426.1 985.5 424.4 985.6 392.3 985.7 419.1 985.8 445.7 985.9 424.5 986.0 444.8 986.1 441.5 986.2 418.9 986.3 435.6 986.4 441.3 986.5 445.5 986.6 435.7 986.7 442.9 986.8 423.9 986.9 437.1 987.0 443.3 987.1 383.0 987.1 435.8 987.2 449.8 987.3 455.8 987.4 453.8 987.5 455.2 987.6 436.5 987.7 435.1 987.8 424.8 987.9 448.0 988.0 440.4 988.1 441.8 988.2 405.4 988.3 430.8 988.4 426.1 988.5 414.7 988.6 430.3 988.7 435.8 988.8 442.3 988.9 440.5 989.0 436.1 989.1 439.0 989.2 438.9 989.2 402.7 989.3 453.6 989.4 461.9 989.5 430.3 989.6 413.3 989.7 439.9 989.8 423.2 989.9 408.2 990.0 439.9 990.1 433.8 990.2 448.8 990.3 446.5 990.4 442.6 990.5 425.0 990.6 411.6 990.7 425.2 990.8 448.1 990.9 447.2 991.0 440.9 991.1 434.9 991.2 425.6 991.3 454.9 991.3 450.1 991.4 405.5 991.5 429.5 991.6 430.9 991.7 456.8 991.8 421.2 991.9 429.7 992.0 459.0 992.1 456.7 992.2 429.9 992.3 458.0 992.4 431.0 992.5 448.0 992.6 428.6 992.7 423.7 992.8 405.6 992.9 460.0 993.0 456.5 993.1 438.2 993.2 406.8 993.3 427.1 993.4 452.8 993.4 418.8 993.5 434.1 993.6 411.6 993.7 449.2 993.8 418.4 993.9 410.7 994.0 448.5 994.1 433.5 994.2 428.9 994.3 433.5 994.4 449.7 994.5 421.7 994.6 451.2 994.7 436.3 994.8 429.5 994.9 431.2 995.0 426.5 995.1 459.3 995.2 464.3 995.3 433.0 995.4 431.7 995.5 413.3 995.5 439.9 995.6 438.0 995.7 454.9 995.8 429.1 995.9 411.4 996.0 441.3 996.1 428.9 996.2 417.1 996.3 416.8 996.4 421.4 996.5 419.5 996.6 474.2 996.7 461.2 996.8 431.3 996.9 459.1 997.0 420.7 997.1 444.5 997.2 456.1 997.3 420.8 997.4 443.5 997.5 448.4 997.6 422.2 997.6 436.7 997.7 449.0 997.8 447.1 997.9 453.8 998.0 405.1 998.1 411.1 998.2 432.4 998.3 442.8 998.4 426.2 998.5 437.5 998.6 422.6 998.7 426.0 998.8 435.9 998.9 442.1 999.0 428.0 999.1 436.8 999.2 457.3 999.3 431.3 999.4 403.5 999.5 440.0 999.6 430.5 999.6 439.6 999.7 430.3 999.8 439.1 999.9 391.8 1000.0 427.5 1000.1 434.8 1000.2 430.9 1000.3 435.5 1000.4 413.9 1000.5 450.3 1000.6 452.3 1000.7 432.1 1000.8 442.7 1000.9 446.4 1001.0 459.9 1001.1 435.0 1001.2 442.8 1001.3 416.4 1001.4 449.3 1001.5 428.8 1001.6 437.3 1001.7 446.9 1001.7 416.5 1001.8 414.1 1001.9 443.0 1002.0 440.3 1002.1 462.7 1002.2 419.8 1002.3 435.7 1002.4 413.1 1002.5 439.1 1002.6 424.6 1002.7 426.6 1002.8 426.3 1002.9 440.6 1003.0 443.6 1003.1 450.0 1003.2 432.0 1003.3 447.7 1003.4 428.2 1003.5 461.3 1003.6 413.7 1003.7 427.3 1003.8 433.3 1003.8 444.1 1003.9 443.7 1004.0 439.5 1004.1 423.6 1004.2 432.5 1004.3 430.5 1004.4 423.6 1004.5 429.3 1004.6 426.4 1004.7 440.4 1004.8 452.9 1004.9 414.2 1005.0 415.1 1005.1 459.7 1005.2 440.7 1005.3 395.3 1005.4 415.6 1005.5 420.2 1005.6 466.4 1005.7 443.3 1005.8 449.0 1005.9 439.6 1005.9 438.9 1006.0 419.2 1006.1 443.0 1006.2 437.8 1006.3 448.4 1006.4 455.9 1006.5 430.8 1006.6 418.5 1006.7 437.1 1006.8 412.4 1006.9 442.8 1007.0 428.1 1007.1 461.4 1007.2 429.4 1007.3 404.7 1007.4 444.7 1007.5 426.7 1007.6 427.6 1007.7 437.6 1007.8 429.3 1007.9 435.7 1008.0 443.7 1008.0 435.9 1008.1 442.2 1008.2 438.4 1008.3 469.7 1008.4 450.1 1008.5 427.5 1008.6 434.4 1008.7 423.5 1008.8 443.0 1008.9 424.0 1009.0 411.4 1009.1 445.0 1009.2 438.9 1009.3 380.9 1009.4 442.8 1009.5 460.3 1009.6 409.3 1009.7 434.3 1009.8 457.5 1009.9 456.2 1010.0 433.7 1010.1 458.3 1010.1 450.3 1010.2 457.5 1010.3 436.4 1010.4 437.9 1010.5 460.4 1010.6 410.5 1010.7 450.1 1010.8 442.1 1010.9 398.4 1011.0 438.1 1011.1 442.2 1011.2 443.2 1011.3 422.2 1011.4 445.3 1011.5 463.8 1011.6 457.1 1011.7 449.0 1011.8 441.4 1011.9 459.5 1012.0 435.5 1012.1 444.5 1012.2 452.3 1012.2 442.5 1012.3 405.3 1012.4 443.4 1012.5 439.9 1012.6 422.8 1012.7 439.0 1012.8 428.2 1012.9 429.6 1013.0 454.5 1013.1 428.5 1013.2 446.8 1013.3 443.3 1013.4 438.2 1013.5 453.2 1013.6 425.3 1013.7 424.8 1013.8 398.7 1013.9 447.6 1014.0 445.8 1014.1 411.7 1014.2 465.2 1014.3 452.6 1014.3 419.2 1014.4 455.9 1014.5 401.0 1014.6 450.3 1014.7 457.9 1014.8 441.3 1014.9 440.0 1015.0 446.1 1015.1 444.2 1015.2 434.7 1015.3 443.0 1015.4 449.9 1015.5 435.7 1015.6 437.5 1015.7 456.4 1015.8 431.0 1015.9 438.9 1016.0 416.3 1016.1 448.7 1016.2 457.9 1016.3 455.5 1016.4 424.3 1016.4 436.6 1016.5 446.2 1016.6 460.0 1016.7 451.5 1016.8 442.2 1016.9 432.6 1017.0 446.4 1017.1 416.1 1017.2 439.5 1017.3 413.2 1017.4 451.7 1017.5 421.5 1017.6 435.8 1017.7 456.0 1017.8 419.0 1017.9 438.9 1018.0 412.7 1018.1 447.6 1018.2 433.2 1018.3 427.2 1018.4 454.7 1018.5 439.2 1018.5 427.4 1018.6 449.4 1018.7 448.6 1018.8 426.1 1018.9 388.9 1019.0 450.8 1019.1 434.5 1019.2 452.6 1019.3 417.8 1019.4 452.5 1019.5 439.7 1019.6 421.8 1019.7 455.0 1019.8 429.8 1019.9 442.2 1020.0 460.2 1020.1 445.4 1020.2 435.8 1020.3 443.4 1020.4 421.2 1020.5 440.4 1020.6 431.0 1020.6 425.7 1020.7 395.7 1020.8 423.1 1020.9 445.9 1021.0 409.0 1021.1 434.0 1021.2 432.6 1021.3 454.2 1021.4 443.4 1021.5 436.3 1021.6 461.1 1021.7 445.7 1021.8 440.0 1021.9 449.6 1022.0 414.4 1022.1 408.0 1022.2 453.1 1022.3 458.2 1022.4 450.4 1022.5 408.8 1022.6 448.7 1022.7 436.1 1022.7 409.8 1022.8 422.9 1022.9 419.4 1023.0 434.3 1023.1 395.4 1023.2 441.6 1023.3 451.1 1023.4 432.5 1023.5 382.4 1023.6 409.4 1023.7 441.5 1023.8 460.0 1023.9 438.1 1024.0 431.5 1024.1 429.8 1024.2 441.5 1024.3 453.3 1024.4 445.8 1024.5 430.2 1024.6 412.1 1024.7 418.5 1024.8 438.7 1024.8 438.3 1024.9 415.3 1025.0 417.8 1025.1 429.2 1025.2 466.1 1025.3 456.9 1025.4 426.2 1025.5 417.8 1025.6 428.3 1025.7 433.2 1025.8 435.4 1025.9 430.2 1026.0 456.0 1026.1 446.5 1026.2 426.9 1026.3 440.9 1026.4 440.4 1026.5 439.5 1026.6 433.1 1026.7 445.9 1026.8 452.0 1026.8 431.0 1026.9 457.5 1027.0 437.8 1027.1 454.5 1027.2 417.6 1027.3 393.7 1027.4 453.5 1027.5 424.0 1027.6 446.9 1027.7 449.1 1027.8 447.2 1027.9 434.8 1028.0 430.1 1028.1 449.1 1028.2 446.1 1028.3 416.2 1028.4 408.8 1028.5 446.1 1028.6 435.9 1028.7 414.6 1028.8 394.8 1028.9 429.3 1028.9 425.4 1029.0 445.7 1029.1 415.5 1029.2 424.2 1029.3 437.5 1029.4 432.4 1029.5 392.2 1029.6 406.4 1029.7 405.6 1029.8 443.5 1029.9 447.0 1030.0 450.9 1030.1 419.0 1030.2 445.1 1030.3 443.1 1030.4 409.8 1030.5 456.2 1030.6 426.0 1030.7 453.0 1030.8 436.5 1030.9 396.0 1031.0 433.9 1031.0 443.2 1031.1 442.5 1031.2 442.7 1031.3 446.5 1031.4 460.0 1031.5 449.3 1031.6 413.0 1031.7 414.2 1031.8 424.0 1031.9 434.7 1032.0 423.8 1032.1 430.9 1032.2 425.7 1032.3 409.0 1032.4 414.3 1032.5 441.2 1032.6 450.3 1032.7 465.9 1032.8 450.9 1032.9 442.6 1033.0 444.1 1033.1 442.4 1033.1 435.4 1033.2 423.9 1033.3 458.9 1033.4 449.8 1033.5 447.3 1033.6 420.8 1033.7 398.8 1033.8 427.0 1033.9 421.9 1034.0 435.8 1034.1 442.1 1034.2 438.9 1034.3 402.4 1034.4 431.1 1034.5 435.0 1034.6 422.2 1034.7 431.9 1034.8 416.4 1034.9 435.5 1035.0 431.4 1035.1 427.2 1035.2 443.7 1035.2 440.4 1035.3 423.5 1035.4 429.7 1035.5 437.4 1035.6 427.4 1035.7 380.7 1035.8 431.3 1035.9 441.3 1036.0 426.4 1036.1 406.2 1036.2 439.9 1036.3 441.7 1036.4 444.9 1036.5 456.1 1036.6 439.8 1036.7 419.2 1036.8 430.6 1036.9 435.8 1037.0 460.2 1037.1 441.8 1037.2 451.6 1037.3 468.3 1037.3 442.5 1037.4 423.7 1037.5 448.0 1037.6 447.4 1037.7 405.3 1037.8 424.7 1037.9 414.2 1038.0 412.9 1038.1 424.0 1038.2 435.2 1038.3 427.3 1038.4 409.4 1038.5 430.0 1038.6 431.9 1038.7 431.0 1038.8 418.5 1038.9 441.1 1039.0 403.4 1039.1 415.2 1039.2 439.4 1039.3 398.1 1039.4 452.2 1039.4 459.4 1039.5 421.7 1039.6 442.7 1039.7 441.2 1039.8 424.9 1039.9 416.0 1040.0 394.8 1040.1 428.9 1040.2 447.1 1040.3 426.7 1040.4 440.0 1040.5 442.8 1040.6 417.2 1040.7 415.3 1040.8 463.0 1040.9 422.8 1041.0 438.8 1041.1 434.2 1041.2 457.1 1041.3 457.4 1041.4 449.6 1041.5 433.7 1041.5 443.9 1041.6 444.8 1041.7 422.1 1041.8 446.7 1041.9 459.3 1042.0 427.1 1042.1 449.8 1042.2 432.0 1042.3 418.1 1042.4 449.0 1042.5 445.7 1042.6 456.2 1042.7 438.8 1042.8 449.4 1042.9 462.2 1043.0 442.5 1043.1 422.7 1043.2 456.6 1043.3 435.9 1043.4 449.7 1043.5 464.0 1043.6 416.9 1043.6 432.9 1043.7 437.4 1043.8 449.8 1043.9 462.5 1044.0 425.2 1044.1 451.3 1044.2 410.7 1044.3 453.5 1044.4 448.6 1044.5 445.2 1044.6 445.4 1044.7 433.6 1044.8 439.7 1044.9 435.0 1045.0 444.5 1045.1 410.5 1045.2 435.3 1045.3 442.3 1045.4 438.1 1045.5 455.1 1045.6 449.0 1045.7 439.5 1045.7 439.2 1045.8 412.7 1045.9 444.1 1046.0 437.3 1046.1 455.7 1046.2 420.6 1046.3 444.1 1046.4 404.4 1046.5 461.8 1046.6 415.5 1046.7 442.6 1046.8 442.1 1046.9 454.8 1047.0 429.6 1047.1 419.4 1047.2 457.2 1047.3 435.3 1047.4 449.0 1047.5 434.5 1047.6 434.9 1047.7 455.9 1047.8 462.7 1047.8 441.7 1047.9 425.8 1048.0 454.5 1048.1 439.0 1048.2 429.0 1048.3 448.1 1048.4 455.5 1048.5 445.3 1048.6 428.5 1048.7 441.7 1048.8 419.8 1048.9 457.4 1049.0 396.2 1049.1 434.3 1049.2 450.4 1049.3 417.3 1049.4 447.3 1049.5 449.3 1049.6 445.7 1049.7 468.3 1049.8 425.4 1049.9 439.2 1049.9 443.3 1050.0 452.5 1050.1 413.0 1050.2 439.6 1050.3 445.6 1050.4 427.3 1050.5 447.6 1050.6 445.9 1050.7 423.4 1050.8 427.0 1050.9 428.5 1051.0 428.5 1051.1 438.4 1051.2 452.7 1051.3 440.5 1051.4 408.3 1051.5 443.5 1051.6 421.9 1051.7 448.2 1051.8 434.0 1051.9 449.0 1052.0 436.5 1052.0 448.0 1052.1 462.7 1052.2 444.0 1052.3 422.6 1052.4 446.0 1052.5 443.3 1052.6 441.5 1052.7 441.4 1052.8 421.2 1052.9 432.3 1053.0 439.6 1053.1 452.3 1053.2 412.7 1053.3 439.4 1053.4 442.5 1053.5 455.8 1053.6 429.5 1053.7 436.6 1053.8 440.5 1053.9 462.4 1054.0 462.4 1054.0 447.0 1054.1 401.9 1054.2 443.4 1054.3 427.1 1054.4 405.3 1054.5 414.1 1054.6 435.0 1054.7 461.1 1054.8 433.5 1054.9 426.1 1055.0 429.3 1055.1 442.2 1055.2 452.9 1055.3 424.3 1055.4 414.5 1055.5 433.1 1055.6 436.5 1055.7 428.0 1055.8 452.4 1055.9 442.0 1056.0 433.8 1056.1 452.3 1056.1 423.8 1056.2 436.9 1056.3 428.8 1056.4 460.8 1056.5 436.3 1056.6 453.5 1056.7 434.6 1056.8 452.8 1056.9 433.6 1057.0 393.0 1057.1 448.6 1057.2 431.5 1057.3 429.9 1057.4 417.4 1057.5 423.9 1057.6 422.7 1057.7 454.8 1057.8 444.5 1057.9 457.6 1058.0 454.2 1058.1 415.9 1058.2 442.9 1058.2 456.2 1058.3 445.1 1058.4 423.4 1058.5 452.1 1058.6 444.5 1058.7 451.8 1058.8 450.3 1058.9 427.9 1059.0 411.0 1059.1 441.5 1059.2 402.1 1059.3 442.4 1059.4 397.2 1059.5 429.5 1059.6 397.5 1059.7 447.2 1059.8 419.2 1059.9 418.9 1060.0 448.9 1060.1 451.4 1060.2 438.8 1060.3 447.7 1060.3 419.3 1060.4 444.3 1060.5 438.3 1060.6 434.8 1060.7 403.2 1060.8 414.2 1060.9 418.7 1061.0 431.0 1061.1 425.7 1061.2 456.6 1061.3 433.9 1061.4 444.6 1061.5 429.6 1061.6 432.7 1061.7 440.7 1061.8 430.7 1061.9 430.2 1062.0 448.9 1062.1 421.1 1062.2 425.9 1062.3 432.3 1062.4 422.0 1062.4 406.2 1062.5 409.7 1062.6 413.6 1062.7 425.4 1062.8 389.1 1062.9 401.2 1063.0 459.1 1063.1 421.8 1063.2 465.8 1063.3 421.7 1063.4 422.5 1063.5 439.4 1063.6 439.9 1063.7 430.9 1063.8 423.5 1063.9 430.0 1064.0 452.6 1064.1 440.2 1064.2 413.1 1064.3 427.9 1064.4 428.6 1064.5 404.7 1064.5 427.8 1064.6 434.2 1064.7 435.1 1064.8 394.6 1064.9 433.7 1065.0 404.2 1065.1 431.8 1065.2 441.6 1065.3 434.5 1065.4 449.5 1065.5 461.3 1065.6 434.3 1065.7 434.3 1065.8 457.3 1065.9 458.0 1066.0 406.1 1066.1 439.3 1066.2 429.1 1066.3 454.1 1066.4 458.1 1066.5 414.6 1066.6 464.3 1066.6 467.7 1066.7 432.6 1066.8 441.9 1066.9 450.7 1067.0 449.7 1067.1 425.9 1067.2 426.2 1067.3 433.1 1067.4 441.7 1067.5 410.8 1067.6 457.5 1067.7 417.4 1067.8 385.9 1067.9 446.1 1068.0 432.9 1068.1 458.5 1068.2 453.4 1068.3 400.5 1068.4 432.9 1068.5 422.7 1068.6 425.9 1068.7 467.1 1068.7 465.3 1068.8 452.0 1068.9 429.6 1069.0 464.4 1069.1 432.4 1069.2 443.0 1069.3 416.9 1069.4 445.4 1069.5 451.1 1069.6 447.2 1069.7 444.4 1069.8 448.1 1069.9 454.0 1070.0 432.8 1070.1 391.9 1070.2 427.1 1070.3 408.4 1070.4 448.5 1070.5 416.7 1070.6 427.4 1070.7 413.6 1070.8 422.2 1070.8 439.8 1070.9 445.1 1071.0 428.3 1071.1 442.6 1071.2 424.5 1071.3 449.5 1071.4 437.4 1071.5 424.5 1071.6 424.0 1071.7 420.2 1071.8 421.1 1071.9 451.3 1072.0 457.8 1072.1 408.6 1072.2 403.8 1072.3 414.7 1072.4 415.3 1072.5 440.3 1072.6 471.4 1072.7 447.8 1072.8 421.5 1072.9 450.3 1072.9 448.4 1073.0 425.1 1073.1 437.0 1073.2 432.2 1073.3 435.4 1073.4 426.3 1073.5 419.6 1073.6 403.6 1073.7 409.9 1073.8 449.5 1073.9 449.7 1074.0 439.5 1074.1 452.8 1074.2 471.1 1074.3 403.9 1074.4 440.7 1074.5 419.8 1074.6 422.4 1074.7 417.7 1074.8 426.3 1074.9 422.1 1075.0 451.9 1075.0 429.9 1075.1 442.2 1075.2 436.7 1075.3 421.1 1075.4 435.3 1075.5 425.3 1075.6 445.6 1075.7 405.8 1075.8 453.5 1075.9 455.9 1076.0 455.0 1076.1 443.2 1076.2 458.1 1076.3 430.3 1076.4 443.7 1076.5 434.7 1076.6 445.2 1076.7 407.5 1076.8 447.6 1076.9 447.7 1077.0 417.5 1077.1 439.1 1077.1 433.0 1077.2 424.9 1077.3 435.6 1077.4 461.2 1077.5 448.5 1077.6 471.7 1077.7 453.3 1077.8 449.9 1077.9 448.5 1078.0 441.3 1078.1 427.0 1078.2 415.4 1078.3 452.4 1078.4 397.7 1078.5 422.6 1078.6 420.8 1078.7 415.4 1078.8 381.7 1078.9 386.4 1079.0 440.4 1079.1 417.6 1079.1 430.2 1079.2 435.2 1079.3 448.7 1079.4 443.2 1079.5 431.1 1079.6 435.0 1079.7 394.3 1079.8 451.3 1079.9 439.2 1080.0 438.2 1080.1 417.8 1080.2 430.4 1080.3 424.1 1080.4 441.8 1080.5 420.2 1080.6 430.5 1080.7 421.2 1080.8 396.1 1080.9 421.0 1081.0 442.1 1081.1 442.6 1081.2 437.3 1081.2 429.3 1081.3 423.5 1081.4 446.1 1081.5 406.6 1081.6 425.3 1081.7 437.8 1081.8 444.7 1081.9 437.6 1082.0 451.7 1082.1 416.9 1082.2 439.7 1082.3 436.7 1082.4 456.4 1082.5 471.3 1082.6 443.0 1082.7 447.5 1082.8 453.2 1082.9 452.0 1083.0 451.7 1083.1 476.5 1083.2 444.0 1083.3 431.3 1083.3 443.3 1083.4 465.4 1083.5 434.7 1083.6 442.7 1083.7 421.7 1083.8 381.4 1083.9 436.0 1084.0 437.8 1084.1 401.1 1084.2 444.4 1084.3 414.2 1084.4 437.0 1084.5 457.1 1084.6 477.6 1084.7 465.5 1084.8 467.2 1084.9 457.0 1085.0 434.4 1085.1 469.0 1085.2 436.5 1085.3 427.6 1085.4 441.6 1085.4 436.6 1085.5 411.8 1085.6 453.6 1085.7 380.6 1085.8 449.1 1085.9 440.7 1086.0 435.8 1086.1 440.8 1086.2 435.5 1086.3 430.2 1086.4 405.5 1086.5 457.7 1086.6 404.0 1086.7 423.2 1086.8 467.8 1086.9 441.0 1087.0 458.3 1087.1 461.2 1087.2 448.1 1087.3 439.5 1087.4 441.4 1087.5 468.3 1087.5 455.9 1087.6 450.1 1087.7 427.5 1087.8 417.5 1087.9 431.1 1088.0 407.3 1088.1 414.4 1088.2 405.5 1088.3 428.2 1088.4 392.0 1088.5 409.1 1088.6 421.0 1088.7 454.2 1088.8 428.1 1088.9 431.6 1089.0 436.5 1089.1 461.9 1089.2 457.5 1089.3 408.8 1089.4 486.9 1089.5 460.4 1089.6 438.2 1089.6 413.8 1089.7 441.2 1089.8 432.1 1089.9 425.7 1090.0 465.1 1090.1 451.2 1090.2 452.6 1090.3 454.7 1090.4 462.7 1090.5 448.6 1090.6 407.8 1090.7 438.1 1090.8 416.9 1090.9 437.1 1091.0 433.0 1091.1 436.1 1091.2 419.3 1091.3 448.1 1091.4 440.9 1091.5 457.7 1091.6 419.6 1091.7 435.9 1091.7 409.0 1091.8 407.5 1091.9 412.2 1092.0 424.6 1092.1 438.9 1092.2 444.2 1092.3 452.2 1092.4 442.7 1092.5 451.9 1092.6 460.7 1092.7 438.8 1092.8 435.3 1092.9 489.6 1093.0 464.1 1093.1 425.0 1093.2 433.6 1093.3 447.4 1093.4 427.5 1093.5 422.7 1093.6 426.5 1093.7 455.4 1093.8 452.9 1093.8 429.8 1093.9 431.7 1094.0 431.5 1094.1 467.4 1094.2 422.2 1094.3 432.0 1094.4 439.0 1094.5 430.5 1094.6 433.3 1094.7 403.6 1094.8 449.3 1094.9 440.3 1095.0 461.2 1095.1 464.7 1095.2 451.2 1095.3 430.1 1095.4 462.2 1095.5 475.8 1095.6 451.9 1095.7 477.9 1095.8 453.7 1095.9 423.4 1095.9 433.4 1096.0 430.7 1096.1 466.8 1096.2 435.7 1096.3 418.9 1096.4 424.7 1096.5 420.0 1096.6 433.1 1096.7 404.3 1096.8 450.1 1096.9 448.3 1097.0 459.3 1097.1 439.2 1097.2 440.2 1097.3 458.9 1097.4 464.1 1097.5 458.9 1097.6 411.1 1097.7 491.9 1097.8 466.7 1097.9 447.9 1098.0 452.4 1098.0 456.1 1098.1 443.5 1098.2 456.1 1098.3 458.0 1098.4 347.0 1098.5 401.2 1098.6 403.4 1098.7 432.7 1098.8 427.5 1098.9 426.8 1099.0 412.2 1099.1 438.4 1099.2 399.9 1099.3 426.9 1099.4 406.3 1099.5 408.3 1099.6 429.3 1099.7 400.1 1099.8 396.8 1099.9 385.2 1100.0 425.1 1100.1 445.8 1100.1 442.0 1100.2 424.1 1100.3 415.7 1100.4 446.9 1100.5 453.7 1100.6 440.9 1100.7 434.5 1100.8 435.2 1100.9 445.3 1101.0 499.9 1101.1 452.4 1101.2 423.7 1101.3 437.8 1101.4 425.7 1101.5 465.8 1101.6 446.1 1101.7 443.3 1101.8 439.6 1101.9 467.1 1102.0 441.4 1102.1 476.3 1102.2 484.3 1102.2 462.2 1102.3 442.9 1102.4 417.1 1102.5 440.4 1102.6 412.9 1102.7 396.7 1102.8 400.0 1102.9 417.0 1103.0 394.4 1103.1 421.3 1103.2 420.6 1103.3 433.9 1103.4 428.0 1103.5 388.3 1103.6 418.4 1103.7 413.5 1103.8 437.1 1103.9 456.3 1104.0 458.1 1104.1 446.2 1104.2 459.4 1104.3 426.2 1104.3 458.6 1104.4 388.3 1104.5 421.8 1104.6 378.6 1104.7 387.1 1104.8 395.2 1104.9 435.6 1105.0 431.1 1105.1 455.5 1105.2 436.7 1105.3 430.0 1105.4 444.1 1105.5 419.1 1105.6 370.1 1105.7 413.1 1105.8 384.7 1105.9 409.7 1106.0 424.7 1106.1 458.4 1106.2 444.0 1106.3 445.1 1106.3 405.4 1106.4 455.4 1106.5 455.9 1106.6 427.4 1106.7 432.8 1106.8 440.3 1106.9 413.7 1107.0 415.9 1107.1 407.2 1107.2 379.9 1107.3 400.8 1107.4 367.7 1107.5 394.8 1107.6 372.8 1107.7 392.2 1107.8 408.7 1107.9 452.7 1108.0 408.3 1108.1 419.6 1108.2 402.3 1108.3 406.0 1108.4 404.6 1108.4 449.1 1108.5 436.3 1108.6 421.5 1108.7 452.9 1108.8 430.4 1108.9 401.1 1109.0 435.8 1109.1 356.1 1109.2 449.4 1109.3 468.1 1109.4 450.1 1109.5 426.4 1109.6 390.3 1109.7 446.6 1109.8 445.1 1109.9 442.6 1110.0 461.1 1110.1 445.7 1110.2 432.3 1110.3 430.9 1110.4 448.6 1110.5 465.8 1110.5 418.8 1110.6 422.2 1110.7 397.7 1110.8 401.1 1110.9 417.4 1111.0 427.7 1111.1 438.5 1111.2 463.4 1111.3 468.0 1111.4 443.5 1111.5 434.5 1111.6 450.3 1111.7 320.0 1111.8 451.5 1111.9 433.1 1112.0 462.8 1112.1 439.9 1112.2 462.6 1112.3 448.5 1112.4 462.1 1112.5 440.3 1112.6 424.5 1112.6 445.8 1112.7 425.8 1112.8 436.3 1112.9 525.5 1113.0 393.7 1113.1 380.8 1113.2 400.9 1113.3 428.6 1113.4 409.2 1113.5 417.7 1113.6 423.4 1113.7 392.7 1113.8 413.6 1113.9 418.4 1114.0 433.3 1114.1 426.5 1114.2 433.6 1114.3 465.2 1114.4 450.5 1114.5 448.6 1114.6 450.1 1114.7 441.0 1114.7 464.1 1114.8 429.8 1114.9 406.5 1115.0 383.1 1115.1 366.6 1115.2 344.0 1115.3 290.5 1115.4 359.1 1115.5 357.2 1115.6 348.9 1115.7 400.5 1115.8 397.8 1115.9 409.2 1116.0 390.4 1116.1 414.1 1116.2 402.4 1116.3 413.9 1116.4 388.7 1116.5 368.5 1116.6 392.2 1116.7 557.4 1116.8 384.7 1116.8 393.0 1116.9 375.3 1117.0 364.5 1117.1 419.9 1117.2 406.4 1117.3 374.7 1117.4 417.3 1117.5 456.4 1117.6 420.9 1117.7 464.0 1117.8 472.0 1117.9 469.7 1118.0 465.9 1118.1 443.1 1118.2 449.8 1118.3 449.4 1118.4 458.5 1118.5 453.3 1118.6 449.8 1118.7 325.1 1118.8 424.7 1118.9 439.8 1118.9 437.6 1119.0 422.3 1119.1 415.8 1119.2 411.7 1119.3 572.0 1119.4 451.3 1119.5 450.7 1119.6 454.8 1119.7 487.2 1119.8 485.7 1119.9 470.4 1120.0 451.6 1120.1 431.7 1120.2 426.7 1120.3 401.5 1120.4 399.8 1120.5 425.2 1120.6 442.2 1120.7 457.3 1120.8 451.0 1120.9 457.2 1121.0 494.9 1121.0 453.0 1121.1 472.1 1121.2 477.5 1121.3 473.7 1121.4 446.3 1121.5 437.0 1121.6 377.2 1121.7 403.7 1121.8 367.6 1121.9 384.2 1122.0 360.5 1122.1 405.1 1122.2 393.4 1122.3 388.9 1122.4 349.1 1122.5 356.9 1122.6 368.4 1122.7 407.3 1122.8 364.7 1122.9 409.5 1123.0 400.1 1123.1 396.9 1123.1 414.2 1123.2 417.2 1123.3 406.0 1123.4 434.4 1123.5 385.8 1123.6 413.8 1123.7 416.3 1123.8 367.7 1123.9 404.4 1124.0 412.1 1124.1 420.6 1124.2 425.8 1124.3 263.4 1124.4 427.9 1124.5 462.7 1124.6 479.6 1124.7 442.8 1124.8 404.2 1124.9 429.4 1125.0 581.9 1125.1 398.2 1125.2 407.1 1125.2 380.3 1125.3 397.6 1125.4 408.7 1125.5 384.3 1125.6 429.8 1125.7 423.8 1125.8 441.2 1125.9 473.2 1126.0 480.0 1126.1 488.9 1126.2 448.4 1126.3 472.1 1126.4 446.2 1126.5 404.8 1126.6 430.4 1126.7 406.9 1126.8 466.4 1126.9 464.7 1127.0 342.9 1127.1 513.1 1127.2 495.5 1127.3 478.3 1127.3 471.5 1127.4 457.3 1127.5 400.8 1127.6 417.9 1127.7 416.7 1127.8 399.7 1127.9 384.2 1128.0 417.1 1128.1 424.9 1128.2 408.0 1128.3 425.7 1128.4 399.8 1128.5 401.0 1128.6 453.6 1128.7 455.0 1128.8 460.8 1128.9 448.9 1129.0 428.7 1129.1 454.0 1129.2 446.2 1129.3 470.8 1129.4 505.5 1129.4 481.9 1129.5 429.2 1129.6 452.3 1129.7 471.6 1129.8 403.9 1129.9 406.4 1130.0 449.4 1130.1 434.0 1130.2 449.2 1130.3 483.8 1130.4 511.2 1130.5 489.2 1130.6 497.5 1130.7 480.8 1130.8 430.9 1130.9 460.0 1131.0 475.3 1131.1 461.6 1131.2 438.8 1131.3 410.8 1131.4 402.8 1131.4 408.3 1131.5 393.3 1131.6 393.7 1131.7 402.8 1131.8 391.3 1131.9 411.0 1132.0 377.0 1132.1 367.1 1132.2 386.5 1132.3 417.1 1132.4 396.4 1132.5 413.4 1132.6 454.1 1132.7 487.9 1132.8 494.5 1132.9 498.9 1133.0 505.3 1133.1 478.1 1133.2 514.0 1133.3 472.5 1133.4 489.8 1133.5 407.0 1133.5 384.9 1133.6 363.1 1133.7 365.3 1133.8 367.9 1133.9 336.5 1134.0 378.3 1134.1 421.3 1134.2 410.6 1134.3 449.9 1134.4 453.8 1134.5 482.7 1134.6 471.8 1134.7 556.9 1134.8 509.9 1134.9 529.3 1135.0 505.1 1135.1 479.3 1135.2 462.9 1135.3 453.3 1135.4 432.2 1135.5 430.1 1135.6 429.2 1135.6 428.3 1135.7 419.1 1135.8 425.7 1135.9 458.9 1136.0 489.3 1136.1 455.1 1136.2 332.1 1136.3 486.5 1136.4 485.5 1136.5 477.9 1136.6 510.0 1136.7 488.4 1136.8 417.1 1136.9 444.2 1137.0 428.3 1137.1 421.2 1137.2 441.8 1137.3 442.1 1137.4 469.2 1137.5 469.1 1137.6 511.6 1137.7 459.8 1137.7 489.4 1137.8 438.0 1137.9 541.5 1138.0 461.0 1138.1 483.9 1138.2 493.7 1138.3 470.3 1138.4 473.7 1138.5 501.8 1138.6 475.3 1138.7 417.1 1138.8 483.7 1138.9 456.0 1139.0 513.6 1139.1 504.1 1139.2 289.7 1139.3 478.5 1139.4 493.6 1139.5 493.1 1139.6 451.5 1139.7 454.5 1139.8 460.2 1139.8 483.0 1139.9 435.1 1140.0 490.2 1140.1 481.7 1140.2 472.8 1140.3 431.6 1140.4 447.1 1140.5 452.4 1140.6 569.0 1140.7 419.0 1140.8 460.6 1140.9 468.6 1141.0 490.4 1141.1 501.3 1141.2 500.8 1141.3 488.6 1141.4 491.5 1141.5 491.5 1141.6 458.8 1141.7 464.2 1141.8 465.3 1141.9 470.1 1141.9 453.7 1142.0 432.8 1142.1 445.2 1142.2 418.4 1142.3 440.0 1142.4 446.4 1142.5 468.8 1142.6 459.6 1142.7 488.4 1142.8 418.6 1142.9 465.4 1143.0 484.6 1143.1 472.4 1143.2 476.8 1143.3 443.2 1143.4 457.2 1143.5 418.4 1143.6 426.7 1143.7 453.7 1143.8 268.6 1143.9 442.3 1144.0 449.5 1144.0 421.7 1144.1 455.3 1144.2 460.4 1144.3 609.0 1144.4 485.6 1144.5 484.4 1144.6 453.5 1144.7 423.1 1144.8 453.9 1144.9 440.3 1145.0 439.8 1145.1 404.9 1145.2 417.2 1145.3 297.8 1145.4 441.2 1145.5 457.5 1145.6 422.9 1145.7 453.9 1145.8 428.4 1145.9 421.4 1146.0 447.3 1146.1 435.1 1146.1 461.9 1146.2 491.5 1146.3 445.4 1146.4 473.5 1146.5 464.4 1146.6 440.0 1146.7 412.7 1146.8 421.6 1146.9 409.4 1147.0 394.9 1147.1 385.0 1147.2 371.7 1147.3 394.1 1147.4 339.9 1147.5 406.0 1147.6 389.7 1147.7 368.2 1147.8 384.2 1147.9 427.2 1148.0 404.3 1148.1 422.4 1148.2 456.4 1148.2 437.6 1148.3 431.3 1148.4 447.2 1148.5 602.7 1148.6 447.1 1148.7 428.6 1148.8 448.5 1148.9 413.2 1149.0 442.4 1149.1 426.7 1149.2 366.1 1149.3 425.5 1149.4 384.8 1149.5 385.0 1149.6 371.9 1149.7 380.7 1149.8 413.2 1149.9 285.1 1150.0 425.8 1150.1 438.8 1150.2 406.4 1150.3 378.5 1150.3 401.0 1150.4 425.1 1150.5 431.7 1150.6 409.1 1150.7 423.0 1150.8 407.9 1150.9 426.5 1151.0 425.5 1151.1 432.0 1151.2 469.3 1151.3 453.3 1151.4 483.0 1151.5 481.6 1151.6 441.2 1151.7 433.6 1151.8 439.2 1151.9 438.2 1152.0 455.2 1152.1 474.9 1152.2 494.2 1152.3 530.0 1152.4 544.4 1152.4 545.0 1152.5 502.0 1152.6 505.5 1152.7 471.7 1152.8 471.2 1152.9 322.8 1153.0 472.1 1153.1 464.4 1153.2 482.8 1153.3 487.4 1153.4 473.8 1153.5 516.2 1153.6 482.7 1153.7 460.4 1153.8 462.3 1153.9 450.4 1154.0 546.8 1154.1 429.7 1154.2 430.1 1154.3 419.2 1154.4 383.2 1154.5 411.2 1154.5 399.5 1154.6 406.5 1154.7 415.3 1154.8 405.3 1154.9 401.8 1155.0 389.3 1155.1 404.0 1155.2 417.6 1155.3 422.6 1155.4 435.7 1155.5 466.3 1155.6 450.7 1155.7 480.9 1155.8 485.2 1155.9 509.0 1156.0 473.2 1156.1 487.1 1156.2 459.8 1156.3 475.8 1156.4 456.7 1156.5 477.4 1156.6 477.1 1156.6 459.7 1156.7 457.8 1156.8 441.9 1156.9 486.3 1157.0 515.3 1157.1 483.8 1157.2 463.1 1157.3 468.4 1157.4 412.6 1157.5 427.9 1157.6 406.7 1157.7 430.2 1157.8 449.9 1157.9 430.5 1158.0 450.4 1158.1 451.9 1158.2 446.9 1158.3 446.4 1158.4 440.0 1158.5 445.9 1158.6 411.5 1158.6 417.3 1158.7 445.7 1158.8 458.0 1158.9 468.8 1159.0 460.2 1159.1 480.5 1159.2 449.3 1159.3 399.3 1159.4 400.6 1159.5 369.5 1159.6 385.4 1159.7 401.5 1159.8 375.8 1159.9 381.5 1160.0 405.0 1160.1 459.3 1160.2 442.5 1160.3 432.8 1160.4 469.4 1160.5 461.3 1160.6 463.8 1160.7 430.4 1160.7 478.5 1160.8 454.1 1160.9 478.4 1161.0 450.1 1161.1 409.3 1161.2 458.5 1161.3 427.3 1161.4 440.4 1161.5 457.4 1161.6 439.2 1161.7 448.5 1161.8 435.5 1161.9 455.2 1162.0 443.9 1162.1 423.9 1162.2 444.1 1162.3 408.1 1162.4 389.0 1162.5 419.7 1162.6 418.3 1162.7 407.9 1162.8 398.1 1162.8 418.0 1162.9 395.1 1163.0 392.9 1163.1 411.9 1163.2 416.2 1163.3 432.9 1163.4 440.4 1163.5 453.4 1163.6 435.8 1163.7 455.2 1163.8 426.6 1163.9 425.3 1164.0 406.6 1164.1 410.8 1164.2 538.5 1164.3 370.2 1164.4 413.2 1164.5 437.7 1164.6 462.1 1164.7 473.4 1164.8 464.0 1164.9 463.0 1164.9 443.9 1165.0 446.4 1165.1 327.1 1165.2 416.5 1165.3 444.5 1165.4 415.9 1165.5 435.1 1165.6 417.4 1165.7 373.7 1165.8 369.9 1165.9 369.0 1166.0 351.3 1166.1 372.7 1166.2 417.8 1166.3 444.5 1166.4 429.7 1166.5 469.7 1166.6 439.6 1166.7 455.4 1166.8 455.6 1166.9 440.8 1167.0 439.4 1167.0 446.5 1167.1 416.3 1167.2 425.9 1167.3 414.2 1167.4 433.9 1167.5 401.1 1167.6 403.1 1167.7 422.9 1167.8 421.3 1167.9 398.2 1168.0 418.6 1168.1 446.0 1168.2 399.4 1168.3 436.7 1168.4 425.1 1168.5 428.2 1168.6 433.9 1168.7 445.6 1168.8 450.3 1168.9 419.5 1169.0 470.6 1169.1 442.1 1169.1 445.0 1169.2 451.9 1169.3 460.0 1169.4 424.5 1169.5 424.8 1169.6 432.5 1169.7 421.6 1169.8 440.5 1169.9 450.5 1170.0 424.0 1170.1 426.5 1170.2 419.0 1170.3 429.3 1170.4 471.6 1170.5 458.8 1170.6 472.9 1170.7 485.6 1170.8 469.8 1170.9 467.2 1171.0 464.0 1171.1 474.3 1171.2 454.9 1171.2 359.0 1171.3 439.1 1171.4 439.4 1171.5 427.6 1171.6 429.3 1171.7 395.5 1171.8 434.6 1171.9 426.6 1172.0 392.4 1172.1 403.3 1172.2 422.5 1172.3 439.4 1172.4 433.9 1172.5 402.6 1172.6 402.9 1172.7 448.7 1172.8 448.0 1172.9 468.3 1173.0 456.4 1173.1 479.5 1173.2 454.0 1173.3 460.2 1173.3 441.1 1173.4 429.6 1173.5 396.4 1173.6 378.8 1173.7 427.8 1173.8 406.6 1173.9 428.1 1174.0 454.9 1174.1 421.7 1174.2 461.8 1174.3 458.4 1174.4 420.9 1174.5 448.5 1174.6 455.5 1174.7 446.8 1174.8 468.4 1174.9 484.2 1175.0 463.5 1175.1 450.3 1175.2 475.5 1175.3 471.2 1175.4 518.5 1175.4 471.1 1175.5 447.1 1175.6 473.1 1175.7 470.2 1175.8 500.8 1175.9 464.7 1176.0 476.8 1176.1 472.9 1176.2 426.2 1176.3 414.3 1176.4 428.3 1176.5 432.1 1176.6 418.6 1176.7 451.6 1176.8 403.2 1176.9 456.5 1177.0 449.4 1177.1 465.4 1177.2 454.4 1177.3 413.1 1177.4 444.9 1177.5 450.8 1177.5 431.0 1177.6 477.1 1177.7 459.0 1177.8 476.7 1177.9 350.7 1178.0 449.4 1178.1 423.5 1178.2 454.9 1178.3 475.7 1178.4 420.9 1178.5 451.7 1178.6 421.3 1178.7 430.7 1178.8 442.8 1178.9 422.6 1179.0 441.5 1179.1 436.2 1179.2 411.4 1179.3 463.4 1179.4 450.3 1179.5 453.0 1179.6 439.2 1179.6 441.2 1179.7 410.3 1179.8 459.0 1179.9 432.0 1180.0 426.6 1180.1 429.9 1180.2 449.0 1180.3 428.0 1180.4 443.6 1180.5 411.4 1180.6 418.0 1180.7 413.3 1180.8 425.0 1180.9 416.3 1181.0 391.0 1181.1 399.5 1181.2 414.0 1181.3 336.5 1181.4 421.9 1181.5 414.3 1181.6 438.8 1181.7 455.6 1181.7 440.7 1181.8 420.4 1181.9 401.3 1182.0 398.0 1182.1 422.9 1182.2 402.4 1182.3 456.6 1182.4 454.0 1182.5 413.2 1182.6 424.8 1182.7 437.3 1182.8 437.0 1182.9 417.8 1183.0 417.8 1183.1 401.6 1183.2 422.6 1183.3 413.1 1183.4 421.4 1183.5 404.3 1183.6 410.6 1183.7 437.1 1183.8 414.1 1183.8 461.0 1183.9 437.1 1184.0 453.1 1184.1 475.1 1184.2 470.1 1184.3 477.9 1184.4 473.8 1184.5 470.8 1184.6 488.6 1184.7 470.5 1184.8 449.9 1184.9 470.7 1185.0 459.0 1185.1 387.1 1185.2 412.0 1185.3 406.4 1185.4 398.0 1185.5 376.7 1185.6 347.1 1185.7 358.2 1185.8 373.6 1185.8 386.3 1185.9 407.8 1186.0 429.4 1186.1 420.6 1186.2 444.8 1186.3 436.6 1186.4 431.2 1186.5 427.6 1186.6 456.2 1186.7 466.3 1186.8 418.6 1186.9 451.4 1187.0 430.6 1187.1 429.2 1187.2 407.6 1187.3 410.0 1187.4 410.4 1187.5 435.8 1187.6 439.8 1187.7 426.6 1187.8 451.7 1187.9 437.9 1187.9 444.0 1188.0 429.8 1188.1 447.1 1188.2 440.6 1188.3 420.8 1188.4 444.1 1188.5 432.0 1188.6 433.5 1188.7 430.5 1188.8 430.0 1188.9 417.7 1189.0 427.4 1189.1 411.5 1189.2 423.4 1189.3 421.6 1189.4 394.6 1189.5 404.0 1189.6 436.8 1189.7 434.5 1189.8 416.3 1189.9 466.4 1190.0 452.9 1190.0 462.8 1190.1 480.5 1190.2 468.6 1190.3 486.1 1190.4 410.1 1190.5 449.1 1190.6 437.8 1190.7 457.2 1190.8 437.7 1190.9 406.5 1191.0 442.8 1191.1 421.2 1191.2 422.9 1191.3 484.1 1191.4 457.0 1191.5 452.6 1191.6 457.7 1191.7 462.6 1191.8 450.9 1191.9 453.5 1192.0 425.6 1192.1 427.8 1192.1 425.6 1192.2 449.7 1192.3 460.7 1192.4 428.7 1192.5 366.0 1192.6 454.2 1192.7 449.5 1192.8 485.7 1192.9 469.5 1193.0 448.5 1193.1 456.0 1193.2 455.8 1193.3 424.5 1193.4 444.3 1193.5 437.0 1193.6 413.1 1193.7 427.2 1193.8 412.9 1193.9 424.3 1194.0 430.2 1194.1 418.7 1194.2 419.5 1194.2 433.3 1194.3 429.8 1194.4 426.8 1194.5 428.7 1194.6 438.0 1194.7 442.0 1194.8 409.7 1194.9 434.9 1195.0 423.7 1195.1 437.2 1195.2 421.9 1195.3 380.1 1195.4 377.8 1195.5 415.9 1195.6 435.3 1195.7 404.7 1195.8 436.9 1195.9 401.9 1196.0 427.0 1196.1 498.5 1196.2 426.6 1196.3 410.3 1196.3 431.4 1196.4 441.7 1196.5 447.0 1196.6 433.4 1196.7 437.5 1196.8 435.4 1196.9 442.2 1197.0 436.8 1197.1 443.6 1197.2 420.9 1197.3 441.9 1197.4 424.4 1197.5 430.1 1197.6 445.7 1197.7 455.1 1197.8 421.8 1197.9 432.7 1198.0 407.7 1198.1 435.5 1198.2 420.7 1198.3 449.0 1198.4 447.7 1198.4 456.2 1198.5 452.3 1198.6 445.0 1198.7 448.9 1198.8 436.5 1198.9 419.8 1199.0 438.8 1199.1 418.1 1199.2 427.0 1199.3 433.5 1199.4 421.2 1199.5 436.6 1199.6 429.8 1199.7 448.7 1199.8 445.6 1199.9 449.5 1200.0 432.4 1200.1 434.5 1200.2 434.9 1200.3 412.6 1200.4 444.7 1200.5 434.9 1200.5 435.5 1200.6 420.8 1200.7 423.2 1200.8 418.9 1200.9 427.0 1201.0 427.5 1201.1 410.1 1201.2 439.2 1201.3 443.9 1201.4 457.4 1201.5 419.5 1201.6 472.8 1201.7 456.7 1201.8 462.2 1201.9 472.1 1202.0 457.1 1202.1 462.2 1202.2 458.2 1202.3 441.6 1202.4 427.4 1202.5 434.3 1202.6 419.3 1202.6 426.4 1202.7 452.0 1202.8 425.6 1202.9 438.7 1203.0 431.9 1203.1 449.3 1203.2 469.9 1203.3 483.7 1203.4 480.6 1203.5 476.4 1203.6 485.1 1203.7 473.8 1203.8 466.6 1203.9 485.3 1204.0 474.7 1204.1 485.1 1204.2 463.6 1204.3 468.6 1204.4 443.5 1204.5 435.2 1204.6 457.6 1204.7 449.1 1204.7 433.9 1204.8 445.5 1204.9 419.6 1205.0 457.4 1205.1 433.9 1205.2 419.2 1205.3 441.1 1205.4 400.3 1205.5 438.5 1205.6 441.4 1205.7 446.7 1205.8 448.9 1205.9 454.7 1206.0 467.6 1206.1 448.1 1206.2 447.5 1206.3 450.4 1206.4 454.4 1206.5 449.3 1206.6 443.4 1206.7 430.1 1206.8 424.5 1206.8 407.3 1206.9 393.6 1207.0 371.6 1207.1 437.1 1207.2 412.7 1207.3 401.3 1207.4 431.9 1207.5 423.0 1207.6 457.0 1207.7 439.7 1207.8 449.5 1207.9 417.4 1208.0 460.4 1208.1 420.7 1208.2 439.1 1208.3 456.1 1208.4 461.2 1208.5 445.8 1208.6 418.4 1208.7 414.1 1208.8 460.8 1208.9 434.8 1208.9 415.5 1209.0 423.5 1209.1 420.1 1209.2 422.3 1209.3 390.6 1209.4 416.2 1209.5 393.4 1209.6 413.8 1209.7 410.3 1209.8 429.1 1209.9 428.6 1210.0 423.1 1210.1 409.8 1210.2 437.8 1210.3 432.4 1210.4 438.5 1210.5 437.2 1210.6 413.6 1210.7 445.2 1210.8 449.6 1210.9 455.0 1210.9 457.4 1211.0 446.4 1211.1 466.7 1211.2 438.4 1211.3 415.6 1211.4 441.2 1211.5 438.8 1211.6 453.4 1211.7 426.7 1211.8 437.6 1211.9 459.7 1212.0 419.8 1212.1 457.2 1212.2 441.1 1212.3 428.5 1212.4 402.1 1212.5 431.6 1212.6 406.5 1212.7 426.2 1212.8 422.0 1212.9 424.1 1213.0 382.4 1213.0 411.2 1213.1 421.3 1213.2 436.9 1213.3 398.1 1213.4 450.9 1213.5 436.9 1213.6 435.4 1213.7 431.6 1213.8 441.3 1213.9 417.1 1214.0 430.3 1214.1 411.5 1214.2 433.4 1214.3 411.0 1214.4 437.7 1214.5 442.8 1214.6 426.3 1214.7 425.2 1214.8 434.9 1214.9 448.9 1215.0 415.6 1215.1 428.6 1215.1 459.4 1215.2 462.2 1215.3 433.6 1215.4 448.0 1215.5 453.2 1215.6 449.8 1215.7 436.2 1215.8 429.0 1215.9 404.6 1216.0 450.9 1216.1 424.5 1216.2 421.9 1216.3 429.7 1216.4 432.3 1216.5 421.2 1216.6 432.6 1216.7 425.2 1216.8 431.0 1216.9 424.0 1217.0 454.4 1217.1 428.1 1217.2 443.5 1217.2 437.3 1217.3 449.8 1217.4 443.1 1217.5 401.4 1217.6 418.1 1217.7 453.2 1217.8 433.0 1217.9 400.3 1218.0 421.3 1218.1 433.0 1218.2 417.2 1218.3 433.1 1218.4 422.0 1218.5 441.1 1218.6 432.0 1218.7 446.6 1218.8 436.3 1218.9 423.9 1219.0 437.9 1219.1 447.5 1219.2 461.2 1219.3 455.3 1219.3 460.2 1219.4 457.6 1219.5 468.7 1219.6 423.1 1219.7 433.6 1219.8 453.6 1219.9 457.0 1220.0 464.0 1220.1 478.8 1220.2 491.0 1220.3 470.8 1220.4 469.4 1220.5 467.6 1220.6 416.5 1220.7 455.1 1220.8 447.4 1220.9 430.6 1221.0 447.4 1221.1 450.1 1221.2 456.6 1221.3 431.6 1221.4 456.4 1221.4 447.4 1221.5 443.8 1221.6 452.0 1221.7 446.3 1221.8 446.7 1221.9 437.7 1222.0 439.4 1222.1 406.7 1222.2 422.4 1222.3 416.8 1222.4 433.8 1222.5 434.9 1222.6 403.0 1222.7 430.6 1222.8 447.7 1222.9 443.7 1223.0 424.9 1223.1 434.8 1223.2 428.2 1223.3 426.0 1223.4 430.0 1223.5 432.4 1223.5 382.1 1223.6 447.6 1223.7 421.5 1223.8 431.5 1223.9 431.5 1224.0 437.1 1224.1 423.3 1224.2 413.9 1224.3 429.6 1224.4 423.8 1224.5 411.8 1224.6 401.8 1224.7 409.6 1224.8 440.7 1224.9 427.0 1225.0 425.7 1225.1 439.5 1225.2 446.0 1225.3 408.7 1225.4 460.4 1225.5 447.8 1225.6 433.5 1225.6 433.1 1225.7 452.1 1225.8 442.3 1225.9 461.2 1226.0 456.1 1226.1 444.2 1226.2 458.3 1226.3 448.0 1226.4 459.6 1226.5 428.7 1226.6 450.9 1226.7 451.9 1226.8 438.6 1226.9 443.5 1227.0 450.2 1227.1 421.6 1227.2 433.1 1227.3 423.2 1227.4 391.4 1227.5 424.8 1227.6 465.5 1227.7 434.5 1227.7 452.2 1227.8 463.9 1227.9 433.9 1228.0 441.2 1228.1 429.9 1228.2 428.7 1228.3 433.1 1228.4 401.0 1228.5 422.1 1228.6 448.9 1228.7 454.4 1228.8 432.5 1228.9 449.8 1229.0 442.6 1229.1 458.1 1229.2 463.0 1229.3 458.3 1229.4 425.8 1229.5 433.5 1229.6 445.5 1229.7 427.7 1229.8 428.1 1229.8 446.8 1229.9 429.6 1230.0 419.1 1230.1 429.7 1230.2 431.5 1230.3 432.2 1230.4 430.9 1230.5 452.8 1230.6 436.8 1230.7 441.8 1230.8 437.1 1230.9 436.7 1231.0 442.8 1231.1 435.8 1231.2 435.5 1231.3 451.8 1231.4 454.5 1231.5 454.6 1231.6 466.9 1231.7 436.9 1231.8 450.1 1231.9 444.1 1231.9 454.8 1232.0 432.4 1232.1 441.3 1232.2 436.4 1232.3 428.2 1232.4 389.9 1232.5 459.0 1232.6 448.9 1232.7 436.4 1232.8 450.3 1232.9 433.9 1233.0 447.6 1233.1 442.5 1233.2 413.0 1233.3 415.5 1233.4 428.4 1233.5 413.6 1233.6 419.4 1233.7 416.6 1233.8 440.0 1233.9 449.6 1234.0 432.0 1234.0 448.0 1234.1 455.5 1234.2 462.7 1234.3 442.4 1234.4 457.7 1234.5 450.4 1234.6 436.4 1234.7 414.2 1234.8 436.6 1234.9 427.0 1235.0 431.6 1235.1 451.9 1235.2 436.0 1235.3 437.6 1235.4 432.9 1235.5 438.5 1235.6 428.6 1235.7 433.8 1235.8 414.3 1235.9 408.3 1236.0 422.3 1236.1 438.3 1236.1 439.2 1236.2 400.0 1236.3 429.4 1236.4 434.6 1236.5 421.5 1236.6 424.6 1236.7 428.9 1236.8 428.4 1236.9 432.1 1237.0 450.1 1237.1 425.6" fill="none" stroke="#77ac30" stroke-width="0.9" stroke-linejoin="round"/><path d="M946.3 434.5L946.6 434.5 946.9 434.5 947.2 434.6 947.4 434.6 947.7 434.7 948.0 434.8 948.3 434.9 948.6 435.0 948.9 435.2 949.2 435.3 949.4 435.4 949.7 435.5 950.0 435.7 950.3 435.8 950.6 435.9 950.9 435.9 951.2 436.0 951.5 436.1 951.7 436.1 952.0 436.1 952.3 436.1 952.6 436.1 952.9 436.1 953.2 436.1 953.5 436.1 953.7 436.0 954.0 436.0 954.3 436.0 954.6 435.9 954.9 435.9 955.2 435.9 955.5 435.8 955.7 435.8 956.0 435.7 956.3 435.7 956.6 435.6 956.9 435.6 957.2 435.5 957.5 435.4 957.8 435.4 958.0 435.3 958.3 435.3 958.6 435.2 958.9 435.1 959.2 435.1 959.5 435.0 959.8 434.9 960.0 434.9 960.3 434.8 960.6 434.8 960.9 434.7 961.2 434.7 961.5 434.6 961.8 434.6 962.0 434.5 962.3 434.5 962.6 434.4 962.9 434.4 963.2 434.4 963.5 434.3 963.8 434.3 964.1 434.3 964.3 434.3 964.6 434.3 964.9 434.2 965.2 434.2 965.5 434.2 965.8 434.2 966.1 434.2 966.3 434.2 966.6 434.2 966.9 434.2 967.2 434.2 967.5 434.2 967.8 434.2 968.1 434.2 968.3 434.2 968.6 434.2 968.9 434.2 969.2 434.2 969.5 434.2 969.8 434.2 970.1 434.2 970.4 434.2 970.6 434.1 970.9 434.1 971.2 434.1 971.5 434.1 971.8 434.1 972.1 434.1 972.4 434.1 972.6 434.1 972.9 434.1 973.2 434.1 973.5 434.0 973.8 434.0 974.1 434.0 974.4 434.0 974.6 434.0 974.9 434.0 975.2 434.0 975.5 434.0 975.8 433.9 976.1 433.9 976.4 433.9 976.6 433.9 976.9 433.9 977.2 433.9 977.5 433.9 977.8 433.9 978.1 433.9 978.4 433.9 978.7 433.8 978.9 433.8 979.2 433.8 979.5 433.8 979.8 433.8 980.1 433.8 980.4 433.8 980.7 433.8 980.9 433.8 981.2 433.8 981.5 433.8 981.8 433.8 982.1 433.8 982.4 433.8 982.7 433.8 982.9 433.8 983.2 433.8 983.5 433.8 983.8 433.8 984.1 433.8 984.4 433.8 984.7 433.9 985.0 433.9 985.2 434.0 985.5 434.0 985.8 434.1 986.1 434.1 986.4 434.2 986.7 434.2 987.0 434.3 987.2 434.4 987.5 434.4 987.8 434.5 988.1 434.6 988.4 434.7 988.7 434.7 989.0 434.8 989.2 434.9 989.5 435.0 989.8 435.0 990.1 435.1 990.4 435.2 990.7 435.2 991.0 435.3 991.3 435.4 991.5 435.4 991.8 435.5 992.1 435.5 992.4 435.5 992.7 435.6 993.0 435.6 993.3 435.6 993.5 435.6 993.8 435.6 994.1 435.6 994.4 435.6 994.7 435.6 995.0 435.6 995.3 435.6 995.5 435.7 995.8 435.7 996.1 435.7 996.4 435.7 996.7 435.7 997.0 435.7 997.3 435.7 997.6 435.7 997.8 435.7 998.1 435.7 998.4 435.8 998.7 435.8 999.0 435.8 999.3 435.8 999.6 435.8 999.8 435.8 1000.1 435.9 1000.4 435.9 1000.7 435.9 1001.0 435.9 1001.3 435.9 1001.6 436.0 1001.8 436.0 1002.1 436.0 1002.4 436.0 1002.7 436.1 1003.0 436.1 1003.3 436.1 1003.6 436.1 1003.8 436.2 1004.1 436.2 1004.4 436.2 1004.7 436.2 1005.0 436.3 1005.3 436.3 1005.6 436.3 1005.9 436.4 1006.1 436.4 1006.4 436.4 1006.7 436.4 1007.0 436.5 1007.3 436.5 1007.6 436.5 1007.9 436.5 1008.1 436.6 1008.4 436.6 1008.7 436.6 1009.0 436.6 1009.3 436.7 1009.6 436.7 1009.9 436.7 1010.1 436.7 1010.4 436.8 1010.7 436.8 1011.0 436.8 1011.3 436.8 1011.6 436.8 1011.9 436.9 1012.2 436.9 1012.4 436.9 1012.7 436.9 1013.0 436.9 1013.3 436.9 1013.6 436.9 1013.9 437.0 1014.2 437.0 1014.4 437.0 1014.7 437.0 1015.0 437.0 1015.3 437.0 1015.6 437.0 1015.9 437.0 1016.2 437.0 1016.4 437.0 1016.7 437.0 1017.0 437.0 1017.3 437.0 1017.6 437.0 1017.9 437.0 1018.2 437.0 1018.5 437.0 1018.7 437.0 1019.0 436.9 1019.3 436.9 1019.6 436.9 1019.9 436.8 1020.2 436.8 1020.5 436.7 1020.7 436.7 1021.0 436.6 1021.3 436.6 1021.6 436.5 1021.9 436.4 1022.2 436.4 1022.5 436.3 1022.7 436.2 1023.0 436.1 1023.3 436.0 1023.6 436.0 1023.9 435.9 1024.2 435.8 1024.5 435.7 1024.8 435.6 1025.0 435.5 1025.3 435.4 1025.6 435.3 1025.9 435.2 1026.2 435.1 1026.5 435.1 1026.8 435.0 1027.0 434.9 1027.3 434.8 1027.6 434.7 1027.9 434.6 1028.2 434.6 1028.5 434.5 1028.8 434.4 1029.0 434.3 1029.3 434.3 1029.6 434.2 1029.9 434.1 1030.2 434.1 1030.5 434.0 1030.8 434.0 1031.0 433.9 1031.3 433.9 1031.6 433.9 1031.9 433.8 1032.2 433.8 1032.5 433.8 1032.8 433.8 1033.1 433.8 1033.3 433.8 1033.6 433.8 1033.9 433.8 1034.2 433.8 1034.5 433.8 1034.8 433.9 1035.1 433.9 1035.3 434.0 1035.6 434.0 1035.9 434.1 1036.2 434.1 1036.5 434.2 1036.8 434.3 1037.1 434.4 1037.3 434.5 1037.6 434.6 1037.9 434.7 1038.2 434.8 1038.5 434.9 1038.8 435.0 1039.1 435.1 1039.4 435.3 1039.6 435.4 1039.9 435.5 1040.2 435.6 1040.5 435.7 1040.8 435.9 1041.1 436.0 1041.4 436.1 1041.6 436.2 1041.9 436.3 1042.2 436.4 1042.5 436.6 1042.8 436.7 1043.1 436.8 1043.4 436.9 1043.6 436.9 1043.9 437.0 1044.2 437.1 1044.5 437.2 1044.8 437.2 1045.1 437.3 1045.4 437.4 1045.7 437.4 1045.9 437.4 1046.2 437.5 1046.5 437.5 1046.8 437.5 1047.1 437.5 1047.4 437.5 1047.7 437.5 1047.9 437.4 1048.2 437.4 1048.5 437.3 1048.8 437.2 1049.1 437.1 1049.4 437.0 1049.7 436.8 1049.9 436.7 1050.2 436.5 1050.5 436.4 1050.8 436.2 1051.1 436.0 1051.4 435.8 1051.7 435.6 1052.0 435.5 1052.2 435.3 1052.5 435.1 1052.8 434.9 1053.1 434.8 1053.4 434.6 1053.7 434.5 1054.0 434.3 1054.2 434.2 1054.5 434.1 1054.8 434.0 1055.1 433.9 1055.4 433.9 1055.7 433.8 1056.0 433.8 1056.2 433.8 1056.5 433.8 1056.8 433.8 1057.1 433.8 1057.4 433.8 1057.7 433.8 1058.0 433.8 1058.2 433.9 1058.5 433.9 1058.8 433.9 1059.1 433.9 1059.4 434.0 1059.7 434.0 1060.0 434.1 1060.3 434.1 1060.5 434.1 1060.8 434.2 1061.1 434.2 1061.4 434.3 1061.7 434.3 1062.0 434.4 1062.3 434.5 1062.5 434.5 1062.8 434.6 1063.1 434.6 1063.4 434.7 1063.7 434.8 1064.0 434.8 1064.3 434.9 1064.5 435.0 1064.8 435.0 1065.1 435.1 1065.4 435.2 1065.7 435.2 1066.0 435.3 1066.3 435.4 1066.6 435.4 1066.8 435.5 1067.1 435.6 1067.4 435.6 1067.7 435.7 1068.0 435.8 1068.3 435.8 1068.6 435.9 1068.8 435.9 1069.1 436.0 1069.4 436.1 1069.7 436.1 1070.0 436.2 1070.3 436.2 1070.6 436.3 1070.8 436.3 1071.1 436.3 1071.4 436.4 1071.7 436.4 1072.0 436.4 1072.3 436.5 1072.6 436.5 1072.9 436.5 1073.1 436.5 1073.4 436.5 1073.7 436.6 1074.0 436.6 1074.3 436.6 1074.6 436.6 1074.9 436.6 1075.1 436.5 1075.4 436.5 1075.7 436.5 1076.0 436.4 1076.3 436.3 1076.6 436.3 1076.9 436.2 1077.1 436.1 1077.4 435.9 1077.7 435.8 1078.0 435.7 1078.3 435.6 1078.6 435.4 1078.9 435.3 1079.1 435.2 1079.4 435.0 1079.7 434.9 1080.0 434.8 1080.3 434.6 1080.6 434.5 1080.9 434.4 1081.2 434.3 1081.4 434.2 1081.7 434.1 1082.0 434.0 1082.3 433.9 1082.6 433.9 1082.9 433.8 1083.2 433.8 1083.4 433.8 1083.7 433.8 1084.0 433.8 1084.3 433.8 1084.6 433.8 1084.9 433.9 1085.2 433.9 1085.4 434.0 1085.7 434.1 1086.0 434.2 1086.3 434.3 1086.6 434.4 1086.9 434.5 1087.2 434.6 1087.5 434.8 1087.7 434.9 1088.0 435.0 1088.3 435.2 1088.6 435.3 1088.9 435.4 1089.2 435.6 1089.5 435.7 1089.7 435.8 1090.0 435.9 1090.3 436.1 1090.6 436.2 1090.9 436.3 1091.2 436.3 1091.5 436.4 1091.7 436.5 1092.0 436.5 1092.3 436.5 1092.6 436.6 1092.9 436.6 1093.2 436.6 1093.5 436.6 1093.8 436.5 1094.0 436.5 1094.3 436.5 1094.6 436.4 1094.9 436.4 1095.2 436.4 1095.5 436.3 1095.8 436.2 1096.0 436.2 1096.3 436.1 1096.6 436.0 1096.9 435.9 1097.2 435.9 1097.5 435.8 1097.8 435.7 1098.0 435.6 1098.3 435.5 1098.6 435.4 1098.9 435.3 1099.2 435.2 1099.5 435.2 1099.8 435.1 1100.1 435.0 1100.3 434.9 1100.6 434.8 1100.9 434.7 1101.2 434.7 1101.5 434.6 1101.8 434.5 1102.1 434.5 1102.3 434.4 1102.6 434.4 1102.9 434.3 1103.2 434.3 1103.5 434.3 1103.8 434.3 1104.1 434.2 1104.3 434.2 1104.6 434.2 1104.9 434.3 1105.2 434.3 1105.5 434.3 1105.8 434.3 1106.1 434.4 1106.3 434.4 1106.6 434.5 1106.9 434.5 1107.2 434.6 1107.5 434.7 1107.8 434.8 1108.1 434.9 1108.4 435.0 1108.6 435.1 1108.9 435.2 1109.2 435.3 1109.5 435.4 1109.8 435.5 1110.1 435.6 1110.4 435.8 1110.6 435.9 1110.9 436.0 1111.2 436.2 1111.5 436.3 1111.8 436.5 1112.1 436.6 1112.4 436.8 1112.6 436.9 1112.9 437.0 1113.2 437.2 1113.5 437.3 1113.8 437.5 1114.1 437.6 1114.4 437.7 1114.7 437.9 1114.9 438.0 1115.2 438.1 1115.5 438.2 1115.8 438.4 1116.1 438.5 1116.4 438.6 1116.7 438.7 1116.9 438.8 1117.2 438.9 1117.5 438.9 1117.8 439.0 1118.1 439.1 1118.4 439.1 1118.7 439.2 1118.9 439.2 1119.2 439.3 1119.5 439.3 1119.8 439.3 1120.1 439.4 1120.4 439.4 1120.7 439.4 1121.0 439.3 1121.2 439.3 1121.5 439.3 1121.8 439.2 1122.1 439.1 1122.4 439.0 1122.7 438.9 1123.0 438.8 1123.2 438.6 1123.5 438.5 1123.8 438.3 1124.1 438.1 1124.4 438.0 1124.7 437.8 1125.0 437.6 1125.2 437.3 1125.5 437.1 1125.8 436.9 1126.1 436.7 1126.4 436.5 1126.7 436.2 1127.0 436.0 1127.3 435.8 1127.5 435.5 1127.8 435.3 1128.1 435.1 1128.4 434.9 1128.7 434.7 1129.0 434.5 1129.3 434.3 1129.5 434.1 1129.8 433.9 1130.1 433.7 1130.4 433.6 1130.7 433.4 1131.0 433.3 1131.3 433.2 1131.5 433.1 1131.8 433.0 1132.1 433.0 1132.4 432.9 1132.7 432.9 1133.0 432.8 1133.3 432.8 1133.5 432.9 1133.8 432.9 1134.1 433.0 1134.4 433.1 1134.7 433.3 1135.0 433.5 1135.3 433.7 1135.6 433.9 1135.8 434.2 1136.1 434.4 1136.4 434.7 1136.7 435.1 1137.0 435.4 1137.3 435.8 1137.6 436.2 1137.8 436.6 1138.1 437.0 1138.4 437.4 1138.7 437.9 1139.0 438.3 1139.3 438.8 1139.6 439.3 1139.8 439.7 1140.1 440.2 1140.4 440.7 1140.7 441.2 1141.0 441.6 1141.3 442.1 1141.6 442.5 1141.9 443.0 1142.1 443.4 1142.4 443.8 1142.7 444.2 1143.0 444.6 1143.3 444.9 1143.6 445.3 1143.9 445.6 1144.1 445.9 1144.4 446.1 1144.7 446.4 1145.0 446.6 1145.3 446.8 1145.6 446.9 1145.9 447.1 1146.1 447.2 1146.4 447.2 1146.7 447.3 1147.0 447.3 1147.3 447.3 1147.6 447.2 1147.9 447.1 1148.2 447.0 1148.4 446.8 1148.7 446.7 1149.0 446.5 1149.3 446.2 1149.6 446.0 1149.9 445.7 1150.2 445.4 1150.4 445.1 1150.7 444.7 1151.0 444.3 1151.3 443.9 1151.6 443.5 1151.9 443.1 1152.2 442.7 1152.4 442.2 1152.7 441.8 1153.0 441.3 1153.3 440.8 1153.6 440.4 1153.9 439.9 1154.2 439.4 1154.5 439.0 1154.7 438.5 1155.0 438.0 1155.3 437.6 1155.6 437.2 1155.9 436.7 1156.2 436.3 1156.5 435.9 1156.7 435.5 1157.0 435.2 1157.3 434.8 1157.6 434.5 1157.9 434.2 1158.2 434.0 1158.5 433.7 1158.7 433.5 1159.0 433.3 1159.3 433.2 1159.6 433.1 1159.9 433.0 1160.2 432.9 1160.5 432.9 1160.7 432.8 1161.0 432.9 1161.3 432.9 1161.6 432.9 1161.9 433.0 1162.2 433.0 1162.5 433.1 1162.8 433.2 1163.0 433.2 1163.3 433.4 1163.6 433.5 1163.9 433.6 1164.2 433.7 1164.5 433.8 1164.8 434.0 1165.0 434.1 1165.3 434.3 1165.6 434.5 1165.9 434.6 1166.2 434.8 1166.5 435.0 1166.8 435.2 1167.0 435.4 1167.3 435.6 1167.6 435.8 1167.9 436.0 1168.2 436.2 1168.5 436.4 1168.8 436.6 1169.1 436.8 1169.3 436.9 1169.6 437.1 1169.9 437.3 1170.2 437.5 1170.5 437.7 1170.8 437.8 1171.1 438.0 1171.3 438.2 1171.6 438.3 1171.9 438.5 1172.2 438.6 1172.5 438.7 1172.8 438.8 1173.1 438.9 1173.3 439.0 1173.6 439.1 1173.9 439.2 1174.2 439.2 1174.5 439.3 1174.8 439.3 1175.1 439.3 1175.4 439.4 1175.6 439.4 1175.9 439.4 1176.2 439.3 1176.5 439.3 1176.8 439.3 1177.1 439.3 1177.4 439.2 1177.6 439.2 1177.9 439.1 1178.2 439.1 1178.5 439.0 1178.8 439.0 1179.1 438.9 1179.4 438.8 1179.6 438.7 1179.9 438.6 1180.2 438.5 1180.5 438.4 1180.8 438.3 1181.1 438.2 1181.4 438.1 1181.7 438.0 1181.9 437.9 1182.2 437.8 1182.5 437.6 1182.8 437.5 1183.1 437.4 1183.4 437.3 1183.7 437.1 1183.9 437.0 1184.2 436.8 1184.5 436.7 1184.8 436.6 1185.1 436.4 1185.4 436.3 1185.7 436.2 1185.9 436.0 1186.2 435.9 1186.5 435.7 1186.8 435.6 1187.1 435.5 1187.4 435.3 1187.7 435.2 1187.9 435.1 1188.2 434.9 1188.5 434.8 1188.8 434.7 1189.1 434.6 1189.4 434.5 1189.7 434.4 1190.0 434.3 1190.2 434.2 1190.5 434.1 1190.8 434.0 1191.1 433.9 1191.4 433.8 1191.7 433.7 1192.0 433.7 1192.2 433.6 1192.5 433.6 1192.8 433.5 1193.1 433.5 1193.4 433.4 1193.7 433.4 1194.0 433.4 1194.2 433.3 1194.5 433.3 1194.8 433.3 1195.1 433.3 1195.4 433.3 1195.7 433.3 1196.0 433.3 1196.3 433.4 1196.5 433.4 1196.8 433.4 1197.1 433.5 1197.4 433.5 1197.7 433.6 1198.0 433.6 1198.3 433.7 1198.5 433.7 1198.8 433.8 1199.1 433.9 1199.4 434.0 1199.7 434.0 1200.0 434.1 1200.3 434.2 1200.5 434.3 1200.8 434.4 1201.1 434.5 1201.4 434.6 1201.7 434.6 1202.0 434.7 1202.3 434.8 1202.6 434.9 1202.8 435.0 1203.1 435.1 1203.4 435.2 1203.7 435.3 1204.0 435.4 1204.3 435.4 1204.6 435.5 1204.8 435.6 1205.1 435.7 1205.4 435.7 1205.7 435.8 1206.0 435.8 1206.3 435.9 1206.6 435.9 1206.8 436.0 1207.1 436.0 1207.4 436.0 1207.7 436.1 1208.0 436.1 1208.3 436.1 1208.6 436.1 1208.9 436.1 1209.1 436.1 1209.4 436.1 1209.7 436.1 1210.0 436.1 1210.3 436.1 1210.6 436.1 1210.9 436.1 1211.1 436.1 1211.4 436.1 1211.7 436.1 1212.0 436.0 1212.3 436.0 1212.6 436.0 1212.9 436.0 1213.1 436.0 1213.4 436.0 1213.7 436.0 1214.0 436.0 1214.3 436.0 1214.6 435.9 1214.9 435.9 1215.1 435.9 1215.4 435.9 1215.7 435.9 1216.0 435.9 1216.3 435.9 1216.6 435.8 1216.9 435.8 1217.2 435.8 1217.4 435.8 1217.7 435.8 1218.0 435.8 1218.3 435.8 1218.6 435.7 1218.9 435.7 1219.2 435.7 1219.4 435.7 1219.7 435.7 1220.0 435.7 1220.3 435.7 1220.6 435.7 1220.9 435.7 1221.2 435.7 1221.4 435.7 1221.7 435.6 1222.0 435.6 1222.3 435.6 1222.6 435.6 1222.9 435.6 1223.2 435.6 1223.5 435.6 1223.7 435.6 1224.0 435.6 1224.3 435.6 1224.6 435.6 1224.9 435.6 1225.2 435.6 1225.5 435.5 1225.7 435.5 1226.0 435.5 1226.3 435.5 1226.6 435.4 1226.9 435.4 1227.2 435.4 1227.5 435.3 1227.7 435.3 1228.0 435.3 1228.3 435.2 1228.6 435.2 1228.9 435.1 1229.2 435.1 1229.5 435.0 1229.8 435.0 1230.0 434.9 1230.3 434.9 1230.6 434.9 1230.9 434.8 1231.2 434.8 1231.5 434.7 1231.8 434.7 1232.0 434.6 1232.3 434.6 1232.6 434.6 1232.9 434.5 1233.2 434.5 1233.5 434.5 1233.8 434.4 1234.0 434.4 1234.3 434.4 1234.6 434.3 1234.9 434.3 1235.2 434.3 1235.5 434.3 1235.8 434.3 1236.1 434.3 1236.3 434.3 1236.6 434.2 1236.9 434.2" fill="none" stroke="#d95319" stroke-width="2.3" stroke-linejoin="round"/></svg><path d="M946.5 214.5 V633.5 H1237.0" fill="none" stroke="#2a2a2a" stroke-width="1.15"/><path d="M946.5 633.5 v-4" stroke="#2a2a2a" stroke-width="1"/><text x="946.3" y="652.4" font-size="12" text-anchor="middle" fill="#2a2a2a">0</text><path d="M994.5 633.5 v-4" stroke="#2a2a2a" stroke-width="1"/><text x="994.0" y="652.4" font-size="12" text-anchor="middle" fill="#2a2a2a">500</text><path d="M1041.5 633.5 v-4" stroke="#2a2a2a" stroke-width="1"/><text x="1041.7" y="652.4" font-size="12" text-anchor="middle" fill="#2a2a2a">1000</text><path d="M1089.5 633.5 v-4" stroke="#2a2a2a" stroke-width="1"/><text x="1089.4" y="652.4" font-size="12" text-anchor="middle" fill="#2a2a2a">1500</text><path d="M1137.5 633.5 v-4" stroke="#2a2a2a" stroke-width="1"/><text x="1137.1" y="652.4" font-size="12" text-anchor="middle" fill="#2a2a2a">2000</text><path d="M1184.5 633.5 v-4" stroke="#2a2a2a" stroke-width="1"/><text x="1184.8" y="652.4" font-size="12" text-anchor="middle" fill="#2a2a2a">2500</text><path d="M1232.5 633.5 v-4" stroke="#2a2a2a" stroke-width="1"/><text x="1232.5" y="652.4" font-size="12" text-anchor="middle" fill="#2a2a2a">3000</text><path d="M946.5 214.5 h4" stroke="#2a2a2a" stroke-width="1"/><text x="940.3" y="218.8" font-size="12" text-anchor="end" fill="#2a2a2a">5</text><path d="M946.5 261.5 h4" stroke="#2a2a2a" stroke-width="1"/><text x="940.3" y="265.8" font-size="12" text-anchor="end" fill="#2a2a2a">4</text><path d="M946.5 307.5 h4" stroke="#2a2a2a" stroke-width="1"/><text x="940.3" y="311.8" font-size="12" text-anchor="end" fill="#2a2a2a">3</text><path d="M946.5 354.5 h4" stroke="#2a2a2a" stroke-width="1"/><text x="940.3" y="358.8" font-size="12" text-anchor="end" fill="#2a2a2a">2</text><path d="M946.5 400.5 h4" stroke="#2a2a2a" stroke-width="1"/><text x="940.3" y="404.8" font-size="12" text-anchor="end" fill="#2a2a2a">1</text><path d="M946.5 447.5 h4" stroke="#2a2a2a" stroke-width="1"/><text x="940.3" y="451.8" font-size="12" text-anchor="end" fill="#2a2a2a">0</text><path d="M946.5 493.5 h4" stroke="#2a2a2a" stroke-width="1"/><text x="940.3" y="497.8" font-size="12" text-anchor="end" fill="#2a2a2a">-1</text><path d="M946.5 540.5 h4" stroke="#2a2a2a" stroke-width="1"/><text x="940.3" y="544.8" font-size="12" text-anchor="end" fill="#2a2a2a">-2</text><path d="M946.5 586.5 h4" stroke="#2a2a2a" stroke-width="1"/><text x="940.3" y="590.8" font-size="12" text-anchor="end" fill="#2a2a2a">-3</text><path d="M946.5 633.5 h4" stroke="#2a2a2a" stroke-width="1"/><text x="940.3" y="637.8" font-size="12" text-anchor="end" fill="#2a2a2a">-4</text><text x="947" y="210.8" font-size="13" fill="#2a2a2a">×</text><text x="957.5" y="210.8" font-size="12.5" fill="#2a2a2a">10</text><text x="971.5" y="205" font-size="9.5" fill="#2a2a2a">4</text><text x="1091.5" y="672.5" font-size="14" text-anchor="middle" fill="#2a2a2a">Samples</text><rect x="1064.5" y="225.5" width="162" height="35" fill="#fff" stroke="#262626" stroke-width="1"/><path d="M1068.5 234.5 H1108.5" stroke="#77ac30" stroke-width="1"/><path d="M1068.5 251.8 H1108.5" stroke="#d95319" stroke-width="2.8"/><text x="1111.5" y="238.8" font-size="12" fill="#000">kobe</text><text x="1111.5" y="255.8" font-size="12" fill="#000">Emd_Reconstruction</text></svg>
<div class="r" style="left:1274px;top:706px;width:2px;height:2px;background:#b8a898;"></div>
<div class="r" style="left:1270px;top:710px;width:2px;height:2px;background:#b8a898;"></div>
<div class="r" style="left:1274px;top:710px;width:2px;height:2px;background:#b8a898;"></div>
<div class="r" style="left:1266px;top:714px;width:2px;height:2px;background:#b8a898;"></div>
<div class="r" style="left:1270px;top:714px;width:2px;height:2px;background:#b8a898;"></div>
<div class="r" style="left:1274px;top:714px;width:2px;height:2px;background:#b8a898;"></div>
<div class="r" style="left:0px;top:0px;width:1280px;height:1px;background:#e8e8e8;"></div>
<div class="r" style="left:0px;top:1px;width:1280px;height:1px;background:#6a6a6a;"></div>
<div class="r" style="left:0px;top:0px;width:1px;height:720px;background:#6a6a6a;"></div>
<div class="r" style="left:1278px;top:0px;width:1px;height:720px;background:#626262;"></div>
<div class="r" style="left:1279px;top:0px;width:1px;height:720px;background:#b4b4b4;"></div>
<div class="r" style="left:0px;top:719px;width:1280px;height:1px;background:#6a6a6a;"></div>
</body></html>
